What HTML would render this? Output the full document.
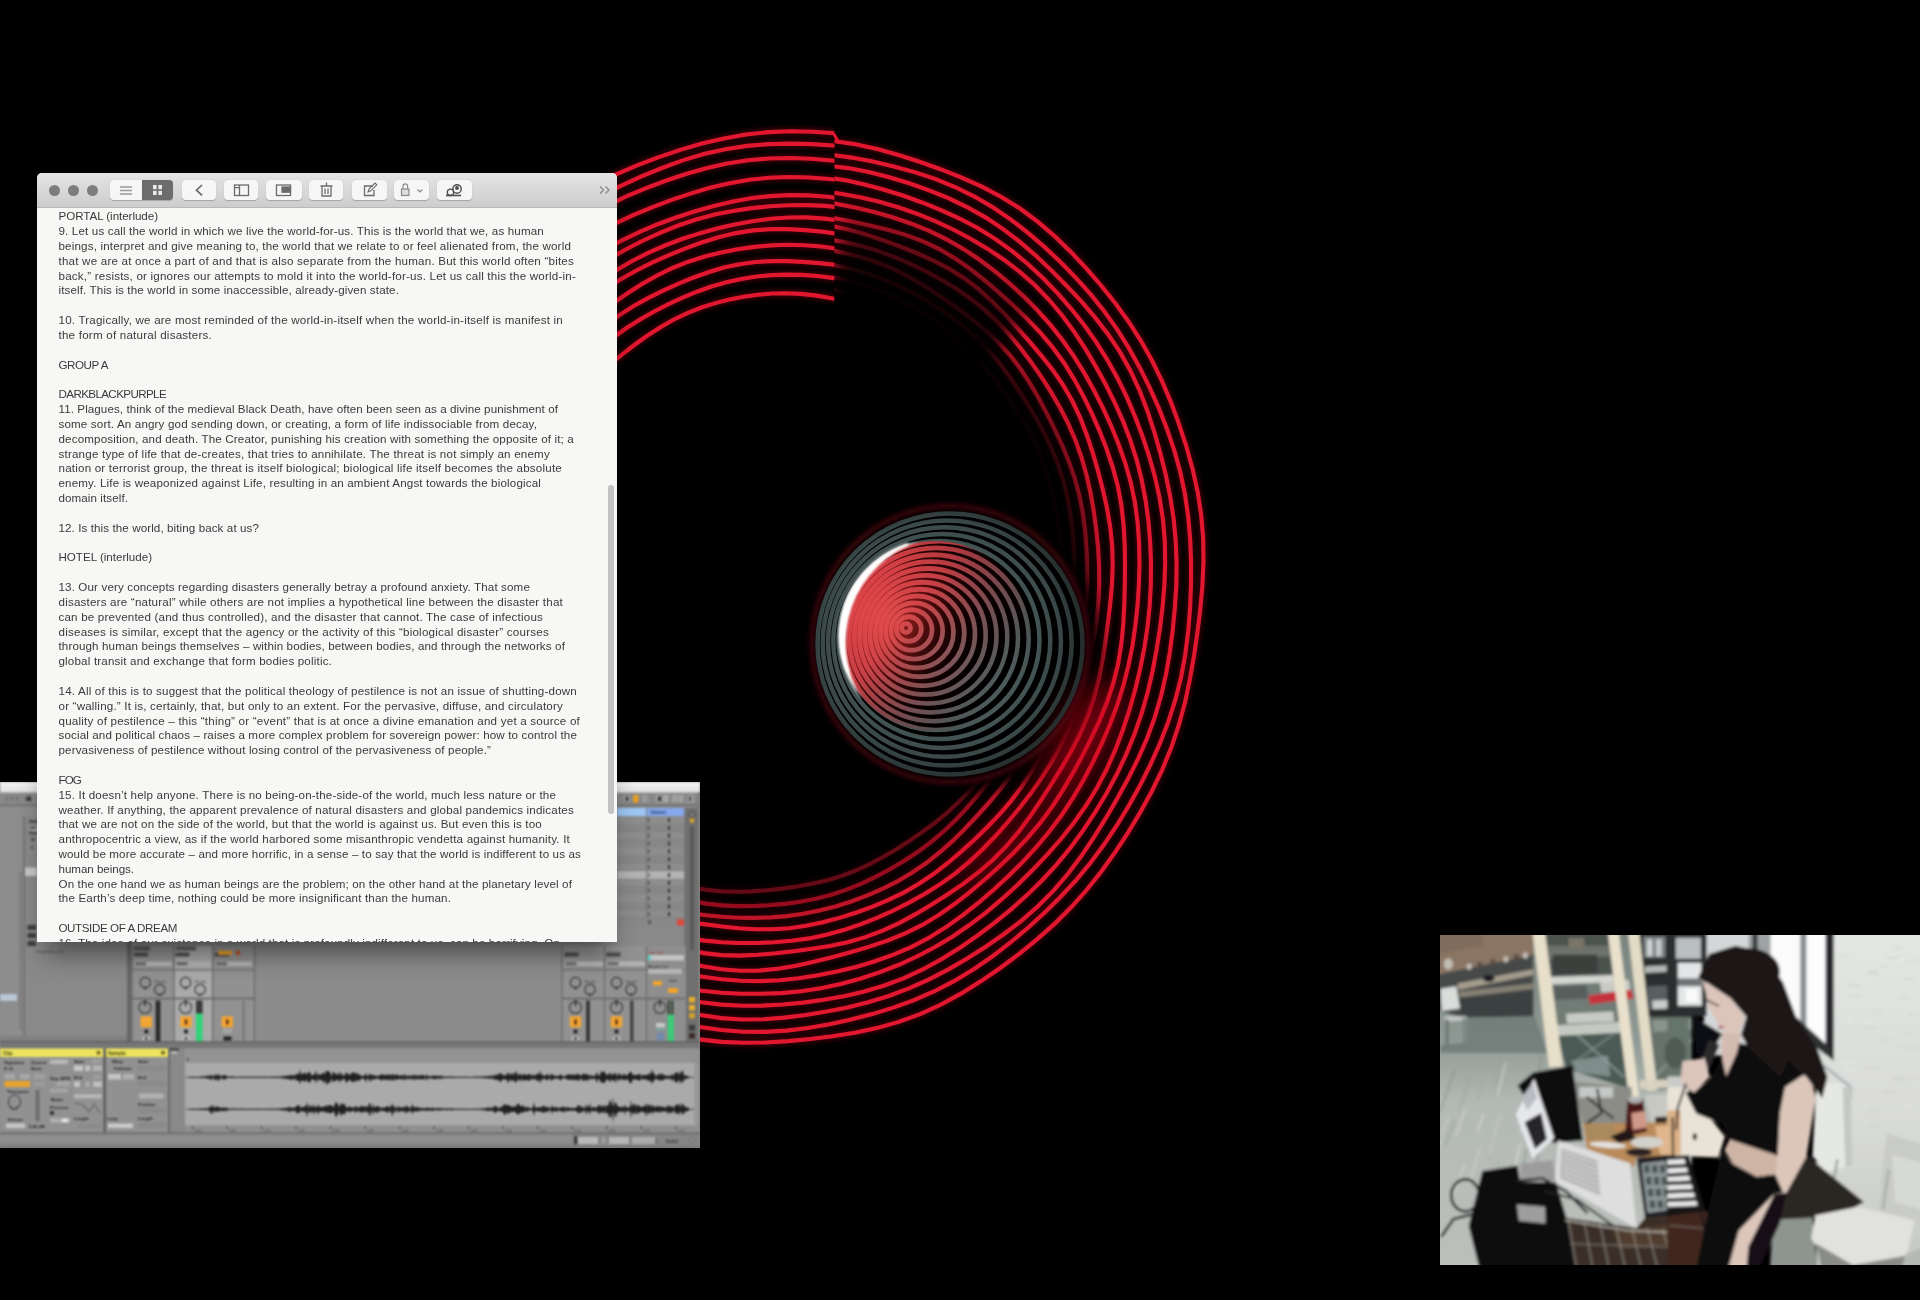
<!DOCTYPE html>
<html lang="en"><head><meta charset="utf-8"><title>stream</title>
<style>
html,body{margin:0;padding:0;background:#000;}
body{width:1920px;height:1300px;position:relative;overflow:hidden;
 font-family:"Liberation Sans",sans-serif;}
.abs{position:absolute;}
svg{display:block;}
#rings{position:absolute;left:0;top:0;}
#ableton{position:absolute;left:0;top:782px;width:700px;height:366px;overflow:hidden;background:#8b8b8b;}
#notes{position:absolute;left:37px;top:173px;width:580px;height:769px;background:#f7f7f6;
 border-radius:5px 5px 0 0;overflow:hidden;}
#nshadow{position:absolute;left:37px;top:173px;width:580px;height:769px;border-radius:5px;
 box-shadow:0 20px 24px -8px rgba(0,0,0,0.45);}
#tb{position:absolute;left:0;top:0;width:580px;height:35px;
 background:linear-gradient(#e4e4e4,#cdcdcd);border-bottom:1px solid #b9b9b9;box-sizing:border-box;}
.dot{position:absolute;top:12px;width:11px;height:11px;border-radius:50%;background:#7d7d7d;filter:blur(0.6px);}
.btn{position:absolute;top:7px;height:20px;border-radius:4px;background:#f6f6f6;
 box-shadow:0 0.5px 1px rgba(0,0,0,.22);filter:blur(0.75px);}
.btn svg{position:absolute;left:0;top:0;}
#txt{position:absolute;left:0;top:35px;width:580px;height:734px;filter:blur(0.72px);color:#3a3a3a;
 font-size:11.6px;line-height:14.83px;white-space:nowrap;}
#txt div{position:absolute;left:21.5px;height:14.83px;}
#sb{position:absolute;left:571px;top:312px;width:6px;height:329px;border-radius:3px;background:#c2c2c2;filter:blur(0.5px);}
#photo{position:absolute;left:1440px;top:935px;}
</style></head>
<body>
<svg id="rings" width="1920" height="1300" viewBox="0 0 1920 1300">
<defs>
<filter id="gb" x="-5%" y="-5%" width="110%" height="110%"><feGaussianBlur stdDeviation="2.4"/></filter>
<filter id="sb1" x="-5%" y="-5%" width="110%" height="110%"><feGaussianBlur stdDeviation="0.75"/></filter>
<filter id="mb" x="-20%" y="-20%" width="140%" height="140%"><feGaussianBlur stdDeviation="9"/></filter>
<filter id="hb" x="-60%" y="-60%" width="220%" height="220%"><feGaussianBlur stdDeviation="15"/></filter>
<filter id="gb2" x="-20%" y="-20%" width="140%" height="140%"><feGaussianBlur stdDeviation="7"/></filter>
<filter id="cb" x="-20%" y="-20%" width="140%" height="140%"><feGaussianBlur stdDeviation="1.1"/></filter>
<radialGradient id="fadeN" gradientUnits="userSpaceOnUse" cx="0" cy="0" r="460" gradientTransform="translate(777.22 592.51) rotate(-71.71) scale(1.0352 0.9642)"><stop offset="0" stop-color="#000" stop-opacity="1"/><stop offset="0.652" stop-color="#000" stop-opacity="1"/><stop offset="0.704" stop-color="#000" stop-opacity="0.86"/><stop offset="0.754" stop-color="#000" stop-opacity="0.7"/><stop offset="0.780" stop-color="#000" stop-opacity="0.5"/><stop offset="0.804" stop-color="#000" stop-opacity="0.28"/><stop offset="0.839" stop-color="#000" stop-opacity="0"/><stop offset="1" stop-color="#000" stop-opacity="0"/></radialGradient>
<radialGradient id="fadeE" gradientUnits="userSpaceOnUse" cx="0" cy="0" r="460" gradientTransform="translate(777.22 592.51) rotate(-71.71) scale(1.0352 0.9642)"><stop offset="0" stop-color="#000" stop-opacity="1"/><stop offset="0.635" stop-color="#000" stop-opacity="1"/><stop offset="0.665" stop-color="#000" stop-opacity="0.9"/><stop offset="0.693" stop-color="#000" stop-opacity="0.6"/><stop offset="0.711" stop-color="#000" stop-opacity="0.12"/><stop offset="0.730" stop-color="#000" stop-opacity="0"/><stop offset="1" stop-color="#000" stop-opacity="0"/></radialGradient>
<mask id="rm" maskUnits="userSpaceOnUse" x="0" y="0" width="1920" height="1300"><rect width="1920" height="1300" fill="#fff"/><g clip-path="url(#cR)"><g filter="url(#mb)"><path d="M777.2,592.5 1097.4,182.7 1123.5,204.6 1148.1,228.0 1171.2,253.1 1192.5,279.6 1212.1,307.4 1229.8,336.4 1245.6,366.6 1259.4,397.7 1271.1,429.7 1280.7,462.3 1288.1,495.5 1293.3,529.1 1296.4,563.0 1297.2,597.0 1295.8,631.0 1292.2,664.9 1286.3,698.4 1278.3,731.5 1268.1,763.9 1255.9,795.7 1241.6,826.6 1225.3,856.4 1207.0,885.2 1187.0,912.7Z" fill="url(#fadeE)"/><path d="M777.2,592.5 867.5,80.4 879.4,82.6 891.2,85.2 903.0,88.0 914.7,91.0 926.4,94.4 937.9,98.0 949.4,101.8 960.7,106.0 972.0,110.4 983.2,115.0 994.2,120.0 1005.2,125.1 1016.0,130.6 1026.7,136.2 1037.2,142.2 1047.6,148.3 1057.9,154.8 1068.0,161.4 1078.0,168.3 1087.7,175.4 1097.4,182.7 1106.8,190.3 1116.1,198.1 1125.2,206.1Z" fill="url(#fadeN)"/></g></g><circle cx="955" cy="647" r="146" fill="#000" filter="url(#gb2)"/></mask>
<clipPath id="cL"><rect x="0" y="0" width="834.5" height="600"/></clipPath>
<clipPath id="cR"><path d="M834.5 0H1920V1300H0V600H834.5Z"/></clipPath>
<radialGradient id="tg" gradientUnits="userSpaceOnUse" cx="940" cy="640" r="140"><stop offset="0" stop-color="#5c6a6a"/><stop offset="0.6" stop-color="#4a5a5a"/><stop offset="0.85" stop-color="#3a4848"/><stop offset="1" stop-color="#262f2f"/></radialGradient>
<radialGradient id="rg" gradientUnits="userSpaceOnUse" cx="885" cy="620" r="120"><stop offset="0" stop-color="#e84a4a"/><stop offset="0.5" stop-color="#d23e44"/><stop offset="1" stop-color="#a8343c"/></radialGradient>
<radialGradient id="sglow" gradientUnits="userSpaceOnUse" cx="872" cy="622" r="105"><stop offset="0" stop-color="#d83232" stop-opacity=".95"/><stop offset="0.4" stop-color="#b42424" stop-opacity=".7"/><stop offset="0.8" stop-color="#801010" stop-opacity=".25"/><stop offset="1" stop-color="#700808" stop-opacity="0"/></radialGradient>
<linearGradient id="rmaskg" gradientUnits="userSpaceOnUse" x1="860" y1="590" x2="1000" y2="700"><stop offset="0" stop-color="#fff"/><stop offset="0.3" stop-color="#eee"/><stop offset="0.62" stop-color="#666"/><stop offset="0.85" stop-color="#151515"/><stop offset="1" stop-color="#000"/></linearGradient>
<mask id="redm" maskUnits="userSpaceOnUse" x="800" y="500" width="300" height="300"><circle cx="935" cy="636" r="95" fill="url(#rmaskg)"/></mask>
</defs>
<g mask="url(#rm)">
<g clip-path="url(#cL)">
<g fill="none" stroke="#b0001a" stroke-width="7" opacity="0.38" filter="url(#gb)"><path d="M922.1,150.3 943.0,157.6 963.5,166.4 983.3,176.4 1002.6,187.6 1021.3,199.7 1039.4,212.7 1056.9,226.6 1073.7,241.5 1089.6,257.5 1104.4,274.6 1118.1,292.7 1130.8,311.5 1142.6,331.1 1153.6,351.1 1163.8,371.6 1173.2,392.6 1181.5,414.1 1188.6,436.2 1194.4,458.8 1198.8,481.8 1201.9,505.0 1204.0,528.4 1205.1,551.9 1205.2,575.5 1204.2,599.1 1201.9,622.7 1198.4,646.2 1193.4,669.4 1187.3,692.4 1180.2,715.0 1172.1,737.4 1163.3,759.4 1153.4,781.0 1142.6,802.1 1130.5,822.5 1117.3,842.1 1103.0,860.9 1087.9,878.9 1072.0,896.1 1055.5,912.7 1038.4,928.7 1020.7,943.8 1002.2,958.0 983.0,971.0 963.1,982.7 942.6,993.1 921.6,1002.3 900.3,1010.5 878.7,1017.6 856.8,1023.7 834.8,1028.5 812.5,1032.0 790.1,1033.9 767.8,1034.4 745.5,1033.7 723.3,1031.8 701.3,1028.9 679.5,1025.1 657.9,1020.2 636.6,1014.1 615.7,1006.5 595.5,997.5 575.8,987.3 556.8,975.9 538.2,963.7 520.2,950.7 502.7,936.9 485.9,922.2 469.9,906.5 454.8,889.8 440.8,872.0 427.8,853.4 415.7,834.1 404.6,814.1 394.3,793.7 384.9,772.6 376.7,751.0 369.8,728.8 364.2,706.2 359.9,683.2 356.7,660.0 354.6,636.6 353.3,613.1 352.9,589.5 353.6,565.9 355.5,542.2 358.9,518.7 363.7,495.3 369.8,472.3 377.1,449.6 385.2,427.2 394.3,405.2 404.2,383.6 415.1,362.5 427.2,342.0 440.4,322.3 454.7,303.5 469.9,285.5 485.9,268.3 502.6,251.8 519.9,236.2 537.9,221.4 556.6,207.7 576.1,195.2 596.1,184.0 616.7,174.1 637.7,165.1 658.9,157.1 680.3,149.9 702.0,143.6 723.9,138.4 746.1,134.5 768.3,132.1 790.7,131.2 812.9,131.7 835.1,133.3 857.1,135.9 879.0,139.6 900.7,144.3Z"/><path d="M918.5,161.0 938.9,168.4 958.7,177.2 977.9,187.2 996.6,198.1 1014.8,209.9 1032.4,222.6 1049.4,236.3 1065.5,251.0 1080.7,266.8 1094.8,283.6 1108.2,301.2 1120.7,319.3 1132.7,337.9 1144.0,357.0 1154.5,376.7 1163.9,397.1 1171.9,418.2 1178.3,439.9 1183.4,462.1 1187.3,484.5 1190.2,507.1 1192.4,529.9 1193.7,552.7 1194.1,575.7 1193.2,598.7 1190.9,621.7 1187.3,644.5 1182.3,667.1 1176.4,689.4 1169.5,711.5 1161.8,733.3 1153.2,754.8 1143.5,775.7 1132.7,796.1 1120.6,815.7 1107.6,834.7 1093.7,852.9 1079.2,870.6 1064.3,887.9 1048.7,904.6 1032.3,920.5 1015.1,935.5 997.0,949.1 978.0,961.4 958.3,972.3 938.2,982.0 917.7,990.8 897.0,998.8 876.0,1005.9 854.8,1011.8 833.3,1016.5 811.6,1019.6 789.8,1021.4 768.1,1021.8 746.4,1021.3 724.8,1019.7 703.4,1017.3 682.1,1013.7 661.0,1008.8 640.4,1002.4 620.3,994.6 600.8,985.6 581.7,975.6 563.0,964.9 544.6,953.6 526.6,941.6 509.2,928.5 492.7,914.3 477.2,898.8 462.8,882.1 449.5,864.5 437.1,846.2 425.5,827.3 414.7,807.9 404.6,788.0 395.6,767.5 387.8,746.4 381.2,724.7 375.9,702.7 371.6,680.4 368.2,657.9 365.6,635.2 364.0,612.3 363.4,589.3 364.3,566.3 366.6,543.3 370.4,520.4 375.5,497.8 381.5,475.4 388.2,453.3 395.6,431.3 403.9,409.7 413.3,388.4 423.9,367.8 435.9,347.9 449.1,329.0 463.3,310.9 478.3,293.5 493.9,276.8 510.1,260.8 527.0,245.6 544.6,231.4 562.9,218.3 581.9,206.4 601.4,195.6 621.3,185.6 641.5,176.4 661.9,168.0 682.7,160.4 703.8,154.1 725.3,149.2 746.9,145.9 768.6,144.1 790.3,143.6 812.0,144.1 833.6,145.5 855.1,147.6 876.5,150.7 897.7,155.1Z"/><path d="M913.2,177.0 932.7,184.4 951.6,193.2 969.9,203.0 987.8,213.6 1005.4,224.8 1022.6,236.6 1039.4,249.0 1055.7,262.4 1071.0,276.9 1085.3,292.7 1098.4,309.5 1110.6,327.1 1121.8,345.4 1132.3,364.2 1142.1,383.5 1150.9,403.3 1158.6,423.7 1165.0,444.6 1170.0,466.0 1173.9,487.7 1176.7,509.6 1178.8,531.6 1180.0,553.7 1180.4,575.9 1179.6,598.2 1177.4,620.4 1173.7,642.4 1168.7,664.2 1162.6,685.7 1155.7,706.9 1148.2,727.9 1140.1,748.7 1131.2,769.2 1121.3,789.2 1110.2,808.6 1097.8,827.2 1084.4,844.9 1070.0,861.7 1055.0,877.9 1039.4,893.4 1023.1,908.3 1006.2,922.2 988.6,935.0 970.2,946.7 951.3,957.1 932.0,966.4 912.3,975.0 892.5,982.8 872.4,990.0 852.0,996.2 831.4,1001.2 810.5,1004.7 789.5,1006.6 768.5,1007.1 747.5,1006.4 726.7,1004.8 705.9,1002.5 685.3,999.4 664.8,995.3 644.6,989.9 624.8,983.0 605.6,974.7 587.0,965.1 568.9,954.4 551.4,942.8 534.4,930.4 518.1,917.2 502.5,903.0 487.8,887.6 474.3,871.3 461.7,854.1 450.0,836.3 438.9,818.0 428.3,799.4 418.4,780.4 409.2,760.9 401.2,740.7 394.6,720.0 389.4,698.7 385.4,677.1 382.6,655.2 380.5,633.3 379.2,611.2 378.7,589.1 379.1,566.9 380.9,544.6 384.1,522.5 388.6,500.5 394.4,478.9 401.1,457.5 408.6,436.4 416.9,415.7 426.3,395.3 436.7,375.5 448.4,356.5 461.2,338.3 474.9,320.9 489.3,304.2 504.2,287.9 519.6,272.1 535.4,256.9 551.9,242.4 569.3,229.0 587.4,216.9 606.3,206.2 625.7,196.7 645.5,188.3 665.6,180.8 685.8,174.0 706.3,168.2 727.0,163.5 748.0,160.3 769.0,158.5 790.0,158.0 810.9,158.8 831.7,160.5 852.4,163.0 873.0,166.5 893.3,171.1Z"/><path d="M907.4,194.8 926.0,201.7 944.3,209.7 962.1,218.7 979.5,228.4 996.5,238.8 1013.2,250.0 1029.3,262.0 1044.7,275.1 1059.0,289.5 1072.3,305.0 1084.4,321.5 1095.5,338.7 1105.9,356.5 1115.6,374.6 1124.6,393.1 1132.9,412.0 1140.3,431.4 1146.5,451.3 1151.5,471.6 1155.4,492.2 1158.2,513.0 1160.2,534.0 1161.4,555.1 1161.6,576.2 1160.6,597.4 1158.5,618.6 1155.1,639.6 1150.5,660.4 1145.1,681.0 1139.0,701.4 1132.3,721.7 1124.8,741.7 1116.4,761.4 1106.9,780.5 1096.1,799.0 1084.1,816.6 1071.0,833.4 1057.1,849.3 1042.6,864.6 1027.5,879.3 1012.0,893.4 995.9,906.8 979.2,919.3 961.9,930.7 944.0,941.1 925.6,950.5 906.9,958.9 887.9,966.6 868.6,973.3 849.0,978.9 829.1,983.3 809.1,986.2 789.0,987.7 768.9,988.0 749.0,987.3 729.1,985.8 709.2,983.6 689.5,980.6 670.0,976.6 650.7,971.2 632.0,964.4 613.8,956.2 596.2,946.7 579.2,936.2 562.7,924.9 546.7,913.0 531.2,900.4 516.2,887.0 502.1,872.8 488.7,857.6 476.2,841.7 464.4,825.2 453.2,808.1 442.8,790.5 433.1,772.4 424.3,753.6 416.8,734.2 410.7,714.2 405.8,693.8 402.2,673.0 399.5,652.1 397.4,631.1 396.1,610.0 395.5,588.8 396.0,567.5 397.7,546.2 400.9,525.0 405.5,504.1 411.2,483.4 417.9,463.1 425.5,443.1 433.8,423.4 442.9,404.1 453.0,385.4 464.1,367.2 476.0,349.7 488.8,332.8 502.3,316.6 516.3,300.8 530.8,285.6 546.0,271.0 562.0,257.4 578.7,244.9 596.3,233.8 614.5,223.9 633.1,215.1 652.0,207.3 671.0,200.1 690.3,193.6 709.8,187.8 729.5,183.2 749.4,179.7 769.4,177.7 789.5,177.0 809.5,177.5 829.4,179.0 849.2,181.4 868.8,184.8 888.3,189.2Z"/><path d="M901.5,212.5 919.3,219.1 936.7,226.7 953.7,235.4 970.2,244.9 986.2,255.1 1001.8,266.2 1016.8,278.0 1031.2,290.7 1044.8,304.4 1057.4,319.1 1069.1,334.6 1079.8,350.9 1089.7,367.7 1098.9,384.9 1107.4,402.5 1115.3,420.5 1122.5,438.8 1128.8,457.6 1134.1,476.8 1138.2,496.3 1141.4,516.1 1143.5,536.1 1144.6,556.3 1144.8,576.5 1143.9,596.8 1141.9,617.0 1138.8,637.1 1134.6,657.1 1129.4,676.8 1123.4,696.3 1116.6,715.5 1109.1,734.4 1100.7,753.0 1091.5,771.2 1081.1,788.8 1069.7,805.6 1057.3,821.6 1044.1,836.9 1030.2,851.4 1015.8,865.2 1000.8,878.5 985.5,891.1 969.6,903.0 953.1,914.1 936.2,924.1 918.8,933.2 900.9,941.3 882.8,948.5 864.3,954.7 845.6,959.9 826.7,963.9 807.7,966.7 788.5,968.2 769.4,968.6 750.4,967.9 731.5,966.4 712.6,964.1 693.9,961.0 675.4,957.1 657.1,952.1 639.1,945.9 621.6,938.4 604.7,929.8 588.3,920.1 572.4,909.6 557.1,898.3 542.2,886.3 527.9,873.5 514.2,860.1 501.2,845.8 489.0,830.7 477.6,814.9 467.1,798.5 457.3,781.5 448.3,764.0 440.3,745.9 433.4,727.3 427.7,708.1 423.2,688.6 419.8,668.8 417.4,648.8 415.9,628.8 415.0,608.7 414.9,588.5 415.6,568.3 417.3,548.1 420.1,527.9 424.1,508.0 429.3,488.3 435.5,468.9 442.6,449.8 450.5,431.1 459.1,412.7 468.6,394.8 478.9,377.4 490.1,360.5 502.1,344.2 514.8,328.6 528.1,313.5 542.1,299.1 556.8,285.4 572.1,272.5 588.1,260.6 604.7,249.9 622.0,240.3 639.7,231.8 657.7,224.2 676.0,217.5 694.4,211.5 713.0,206.2 731.8,201.8 750.8,198.3 769.9,196.1 789.0,195.1 808.2,195.4 827.2,196.8 846.1,199.2 864.8,202.6 883.3,207.1Z"/><path d="M898.1,222.8 915.2,229.8 932.0,237.5 948.5,245.7 964.7,254.5 980.6,264.0 996.0,274.4 1010.7,285.8 1024.6,298.4 1037.6,311.9 1049.9,326.2 1061.4,341.1 1072.3,356.6 1082.4,372.7 1091.7,389.3 1100.0,406.6 1107.3,424.3 1113.7,442.5 1119.3,461.0 1124.2,479.7 1128.4,498.7 1131.9,517.8 1134.5,537.3 1135.8,556.9 1135.8,576.7 1134.5,596.4 1131.9,616.1 1128.5,635.6 1124.3,654.9 1119.7,674.2 1114.3,693.3 1108.2,712.2 1101.2,730.8 1093.0,748.9 1083.7,766.5 1073.4,783.5 1062.3,799.9 1050.5,815.7 1037.9,830.9 1024.6,845.4 1010.6,859.1 995.8,871.8 980.4,883.5 964.5,894.4 948.2,904.6 931.6,914.1 914.7,923.2 897.6,931.5 880.0,938.9 862.1,945.1 843.9,949.9 825.4,953.4 806.8,955.6 788.3,956.9 769.7,957.4 751.2,957.3 732.7,956.5 714.3,954.8 696.0,951.9 677.9,947.9 660.1,942.8 642.7,936.5 625.6,929.4 608.9,921.4 592.6,912.4 576.9,902.5 561.9,891.5 547.6,879.4 534.1,866.3 521.4,852.6 509.2,838.3 497.4,823.6 486.1,808.4 475.4,792.8 465.5,776.5 456.6,759.4 449.0,741.7 442.7,723.4 437.4,704.7 433.1,685.7 429.6,666.5 426.7,647.1 424.7,627.7 423.6,608.1 423.5,588.4 424.6,568.6 426.7,549.0 429.7,529.4 433.5,510.0 438.2,490.7 443.8,471.6 450.4,452.9 458.2,434.7 467.1,417.0 477.0,399.9 487.7,383.3 498.8,367.2 510.4,351.4 522.4,335.9 535.0,320.8 548.3,306.4 562.4,292.9 577.4,280.5 593.1,269.1 609.4,258.8 626.1,249.3 643.2,240.5 660.5,232.6 678.2,225.5 696.2,219.5 714.5,214.6 732.9,210.9 751.5,208.1 770.1,206.3 788.8,205.2 807.4,205.1 826.1,205.9 844.6,208.1 862.8,211.7 880.7,216.6Z"/><path d="M894.5,233.8 911.4,239.7 928.0,246.4 944.2,254.1 959.9,262.9 975.0,272.8 989.4,283.7 1003.3,295.4 1016.5,307.7 1029.2,320.7 1041.3,334.3 1052.7,348.6 1063.3,363.5 1073.0,379.2 1081.9,395.4 1090.0,412.1 1097.3,429.1 1104.1,446.5 1110.0,464.3 1115.1,482.4 1119.2,500.9 1122.0,519.7 1123.6,538.7 1124.0,557.7 1123.5,576.9 1122.1,595.9 1120.0,614.9 1117.2,633.9 1113.5,652.7 1108.9,671.3 1103.2,689.6 1096.5,707.6 1089.0,725.2 1080.7,742.4 1071.7,759.3 1062.0,775.7 1051.7,791.7 1040.5,807.2 1028.6,822.0 1015.9,836.0 1002.5,849.4 988.5,862.0 974.1,874.1 959.2,885.6 943.9,896.4 928.0,906.4 911.6,915.3 894.7,923.0 877.4,929.4 859.7,934.7 841.9,939.0 824.0,942.4 806.0,944.9 788.0,946.7 770.0,947.4 752.0,947.1 734.0,945.7 716.3,943.2 698.7,939.7 681.4,935.4 664.3,930.3 647.4,924.4 630.9,917.6 614.8,909.7 599.2,900.8 584.2,891.0 569.8,880.2 555.9,868.7 542.5,856.7 529.5,844.0 517.1,830.7 505.4,816.7 494.6,801.8 484.9,786.2 476.1,769.9 468.3,753.0 461.3,735.8 455.1,718.2 449.6,700.3 444.8,682.2 441.0,663.7 438.1,645.1 436.3,626.2 435.4,607.2 435.3,588.2 436.1,569.1 437.6,550.0 439.9,531.0 443.3,512.0 447.7,493.3 453.3,474.8 460.0,456.7 467.6,439.0 476.0,421.7 485.1,404.8 494.8,388.2 505.2,372.1 516.5,356.6 528.6,341.9 541.6,328.0 555.4,315.0 569.8,302.8 584.7,291.4 599.9,280.7 615.6,270.6 631.7,261.3 648.1,252.9 664.9,245.5 682.0,239.0 699.4,233.4 717.0,228.6 734.6,224.6 752.5,221.2 770.4,218.8 788.5,217.5 806.5,217.4 824.5,218.6 842.3,221.0 859.9,224.5 877.3,228.8Z"/><path d="M890.6,245.7 906.8,251.6 922.6,258.6 938.0,266.5 953.0,275.2 967.7,284.5 981.9,294.4 995.8,305.0 1008.9,316.5 1021.3,329.0 1032.8,342.4 1043.5,356.5 1053.4,371.2 1062.8,386.2 1071.8,401.6 1080.2,417.4 1087.9,433.7 1094.5,450.5 1099.8,467.9 1104.0,485.7 1107.0,503.8 1109.1,522.0 1110.6,540.3 1111.5,558.6 1111.7,577.0 1111.1,595.5 1109.4,613.9 1106.6,632.3 1102.9,650.4 1098.2,668.4 1092.9,686.2 1087.0,703.8 1080.3,721.2 1072.9,738.3 1064.3,754.8 1054.7,770.7 1044.1,785.9 1032.6,800.4 1020.6,814.3 1008.1,827.7 995.3,840.8 982.0,853.3 968.1,865.1 953.5,876.0 938.3,885.8 922.5,894.4 906.3,902.0 889.9,908.8 873.3,915.0 856.5,920.5 839.5,925.3 822.4,929.2 805.1,932.0 787.7,933.7 770.3,934.3 752.9,934.1 735.6,933.2 718.3,931.6 701.1,929.2 684.0,925.8 667.3,921.1 651.0,915.1 635.2,907.8 619.9,899.5 605.1,890.5 590.5,881.0 576.3,870.9 562.5,860.3 549.2,848.8 536.8,836.4 525.2,823.0 514.6,808.9 504.7,794.1 495.5,778.9 486.8,763.3 478.8,747.3 471.5,730.9 465.1,714.0 459.8,696.7 455.5,679.0 452.1,661.1 449.5,643.0 447.4,624.8 446.0,606.4 445.4,588.0 445.9,569.5 447.6,551.0 450.7,532.6 454.9,514.5 460.2,496.6 466.1,479.0 472.5,461.6 479.4,444.4 487.0,427.5 495.5,411.0 504.9,395.1 515.2,379.8 526.4,365.2 538.3,351.1 550.6,337.6 563.4,324.5 576.7,312.0 590.6,300.2 605.1,289.3 620.3,279.5 635.9,270.7 652.0,262.7 668.3,255.4 684.8,248.6 701.5,242.5 718.5,237.2 735.7,233.1 753.2,230.4 770.7,229.1 788.2,229.1 805.6,230.1 822.9,231.8 840.0,234.1 857.1,237.1 873.9,240.9Z"/><path d="M885.8,260.0 901.6,265.2 917.0,271.2 932.1,278.3 946.6,286.5 960.5,295.8 973.8,306.0 986.4,317.0 998.6,328.5 1010.4,340.4 1021.7,352.8 1032.6,365.8 1042.7,379.4 1052.0,393.7 1060.3,408.7 1067.7,424.3 1074.2,440.3 1079.9,456.6 1084.9,473.3 1089.0,490.2 1092.3,507.3 1094.6,524.7 1096.1,542.2 1096.7,559.7 1096.6,577.3 1095.9,594.9 1094.6,612.5 1092.7,630.1 1089.9,647.7 1086.0,665.1 1081.0,682.3 1074.8,699.0 1067.7,715.4 1059.7,731.3 1051.1,746.8 1042.0,762.0 1032.3,776.9 1022.1,791.3 1011.1,805.1 999.3,818.3 986.8,830.6 973.7,842.2 960.1,853.1 945.9,863.2 931.4,872.6 916.4,881.2 901.1,888.8 885.4,895.5 869.4,901.3 853.2,906.1 836.9,910.3 820.5,913.9 804.0,917.0 787.4,919.3 770.6,920.7 753.9,921.0 737.2,920.0 720.7,917.7 704.4,914.3 688.4,910.0 672.7,904.9 657.1,899.1 641.9,892.7 627.0,885.5 612.5,877.4 598.5,868.4 585.0,858.6 572.0,848.1 559.6,836.8 547.7,825.0 536.4,812.5 525.8,799.3 516.0,785.4 507.1,770.8 499.1,755.7 491.8,740.1 485.2,724.3 479.0,708.2 473.4,691.8 468.4,675.1 464.3,658.1 461.2,640.8 459.4,623.2 458.7,605.5 459.2,587.8 460.6,570.0 462.7,552.4 465.6,534.9 469.2,517.5 473.7,500.2 479.0,483.3 485.1,466.6 492.1,450.3 499.7,434.2 507.9,418.6 516.8,403.2 526.4,388.4 536.8,374.0 548.0,360.4 560.0,347.6 572.6,335.6 585.8,324.2 599.4,313.4 613.3,303.1 627.5,293.2 642.0,283.9 657.1,275.5 672.5,268.0 688.4,261.7 704.7,256.5 721.1,252.4 737.7,249.2 754.4,246.9 771.1,245.4 787.8,244.8 804.4,245.2 821.0,246.5 837.5,248.7 853.7,251.8 869.9,255.5Z"/><path d="M881.0,274.6 895.8,280.0 910.3,286.5 924.3,293.8 938.0,301.7 951.4,310.2 964.4,319.3 976.9,329.2 988.7,340.0 999.7,351.6 1010.0,364.0 1019.6,376.9 1028.7,390.2 1037.4,403.8 1045.7,417.7 1053.5,432.1 1060.5,446.9 1066.4,462.3 1071.2,478.2 1074.9,494.4 1077.8,510.8 1080.0,527.4 1081.7,544.0 1083.0,560.7 1083.5,577.5 1083.1,594.4 1081.7,611.3 1079.1,628.1 1075.6,644.7 1071.3,661.1 1066.3,677.4 1060.8,693.5 1054.5,709.3 1047.3,724.7 1039.2,739.6 1030.0,753.9 1020.1,767.5 1009.6,780.6 998.7,793.2 987.5,805.6 976.0,817.7 964.0,829.2 951.3,840.0 938.0,849.9 924.1,858.7 909.7,866.5 895.0,873.5 880.1,879.9 865.0,885.9 849.8,891.2 834.4,895.9 818.7,899.5 802.9,902.0 787.0,903.5 771.1,904.0 755.2,903.8 739.4,902.9 723.6,901.4 707.9,899.1 692.4,895.6 677.3,890.9 662.6,885.1 648.3,878.3 634.3,870.8 620.7,862.8 607.2,854.5 594.0,845.7 581.3,836.2 569.1,825.8 557.7,814.5 547.2,802.3 537.5,789.3 528.4,775.8 519.9,762.0 511.8,747.8 504.4,733.2 497.8,718.2 492.1,702.7 487.4,686.8 483.7,670.6 480.8,654.2 478.4,637.7 476.6,621.0 475.5,604.3 475.2,587.5 475.9,570.6 477.9,553.8 480.9,537.2 484.9,520.8 489.5,504.5 494.6,488.4 499.9,472.4 505.8,456.6 512.4,441.0 520.0,425.8 528.5,411.2 537.9,397.2 548.1,383.8 558.9,370.9 570.0,358.4 581.7,346.4 593.9,335.0 606.7,324.3 620.1,314.6 634.1,305.8 648.4,297.9 663.1,290.6 678.0,283.9 693.0,277.7 708.3,272.2 723.8,267.6 739.6,264.2 755.5,262.0 771.5,261.1 787.4,261.1 803.2,261.9 819.0,263.1 834.7,264.8 850.3,267.1 865.8,270.3Z"/><path d="M876.2,289.0 890.3,294.4 904.1,300.4 917.7,307.0 930.9,314.3 943.8,322.2 956.3,330.8 968.2,340.3 979.5,350.6 990.1,361.7 1000.0,373.5 1009.3,385.7 1018.1,398.4 1026.4,411.5 1034.1,425.0 1041.1,438.9 1047.5,453.2 1053.0,467.9 1057.6,483.0 1061.5,498.4 1064.6,514.0 1067.0,529.7 1068.6,545.7 1069.4,561.7 1069.3,577.7 1068.4,593.8 1066.6,609.9 1064.0,625.8 1060.9,641.6 1057.1,657.3 1052.7,672.9 1047.7,688.3 1041.9,703.5 1035.1,718.3 1027.5,732.6 1019.0,746.4 1009.9,759.6 1000.1,772.4 989.8,784.7 979.0,796.5 967.7,807.8 955.9,818.5 943.6,828.5 930.8,837.7 917.6,846.3 904.0,854.1 890.1,861.2 875.9,867.6 861.5,873.3 846.8,878.1 831.9,881.9 816.9,884.8 801.7,886.9 786.6,888.1 771.5,888.7 756.3,888.7 741.2,888.0 726.2,886.6 711.2,884.4 696.4,881.1 682.0,876.8 667.8,871.5 654.0,865.4 640.5,858.5 627.4,850.9 614.7,842.8 602.4,833.9 590.5,824.3 579.2,814.1 568.5,803.1 558.4,791.6 548.8,779.6 539.8,767.1 531.3,754.1 523.5,740.6 516.6,726.6 510.4,712.1 505.2,697.2 500.8,682.0 497.2,666.6 494.1,651.0 491.7,635.2 489.8,619.4 488.7,603.4 488.5,587.3 489.1,571.2 490.8,555.1 493.4,539.1 496.8,523.3 501.0,507.6 505.8,492.2 511.4,477.0 517.6,462.0 524.6,447.5 532.4,433.3 540.7,419.6 549.7,406.3 559.2,393.3 569.2,380.8 579.7,368.8 590.8,357.3 602.5,346.5 614.8,336.5 627.6,327.3 640.9,318.9 654.6,311.2 668.5,304.1 682.6,297.6 696.9,291.7 711.5,286.5 726.4,282.2 741.4,278.9 756.6,276.5 771.8,275.1 787.0,274.6 802.2,274.9 817.4,276.0 832.4,277.9 847.2,280.7 861.9,284.5Z"/><path d="M870.1,307.4 883.6,311.7 896.8,316.8 909.7,322.9 922.0,330.0 933.8,338.0 945.1,346.8 955.9,356.1 966.4,365.8 976.6,375.9 986.4,386.3 995.7,397.3 1004.4,409.0 1012.3,421.2 1019.5,433.9 1026.0,447.2 1031.8,460.7 1037.0,474.6 1041.4,488.8 1045.1,503.3 1047.8,518.0 1049.7,532.9 1050.7,547.9 1051.0,563.0 1050.9,578.0 1050.4,593.1 1049.4,608.2 1047.9,623.3 1045.5,638.4 1042.2,653.3 1037.8,668.0 1032.3,682.3 1026.1,696.2 1019.2,709.8 1011.9,723.1 1004.1,736.1 995.8,748.8 986.9,761.0 977.3,772.7 967.1,783.8 956.3,794.2 945.1,804.1 933.5,813.4 921.6,822.2 909.2,830.3 896.4,837.7 883.3,844.1 869.8,849.6 856.1,854.2 842.3,858.3 828.4,861.9 814.4,865.2 800.4,868.0 786.2,870.3 771.9,871.7 757.6,872.1 743.3,871.3 729.1,869.5 715.2,866.7 701.4,863.2 687.8,859.0 674.4,854.3 661.3,848.8 648.6,842.5 636.2,835.4 624.3,827.5 612.8,819.1 601.7,810.0 591.0,800.5 580.7,790.4 571.0,779.7 561.9,768.4 553.8,756.3 546.4,743.6 539.8,730.5 533.8,717.1 528.3,703.5 523.0,689.8 518.1,675.8 513.9,661.6 510.4,647.1 507.8,632.3 506.3,617.3 505.8,602.1 506.1,587.0 507.1,571.9 508.8,556.8 511.2,541.8 514.3,526.9 518.2,512.2 522.9,497.8 528.3,483.6 534.2,469.7 540.6,455.9 547.4,442.4 554.7,429.1 562.7,416.2 571.5,403.9 581.1,392.3 591.4,381.4 602.3,371.1 613.6,361.4 625.2,352.0 637.0,343.0 649.1,334.4 661.6,326.4 674.5,319.2 687.8,312.8 701.4,307.5 715.3,303.1 729.4,299.5 743.6,296.7 757.9,294.7 772.2,293.5 786.6,293.2 800.8,293.9 814.9,295.4 828.9,297.7 842.8,300.5 856.5,303.7Z"/></g>
<g fill="none" stroke="#e2182e" stroke-width="4.1" filter="url(#sb1)"><path d="M922.1,150.3 943.0,157.6 963.5,166.4 983.3,176.4 1002.6,187.6 1021.3,199.7 1039.4,212.7 1056.9,226.6 1073.7,241.5 1089.6,257.5 1104.4,274.6 1118.1,292.7 1130.8,311.5 1142.6,331.1 1153.6,351.1 1163.8,371.6 1173.2,392.6 1181.5,414.1 1188.6,436.2 1194.4,458.8 1198.8,481.8 1201.9,505.0 1204.0,528.4 1205.1,551.9 1205.2,575.5 1204.2,599.1 1201.9,622.7 1198.4,646.2 1193.4,669.4 1187.3,692.4 1180.2,715.0 1172.1,737.4 1163.3,759.4 1153.4,781.0 1142.6,802.1 1130.5,822.5 1117.3,842.1 1103.0,860.9 1087.9,878.9 1072.0,896.1 1055.5,912.7 1038.4,928.7 1020.7,943.8 1002.2,958.0 983.0,971.0 963.1,982.7 942.6,993.1 921.6,1002.3 900.3,1010.5 878.7,1017.6 856.8,1023.7 834.8,1028.5 812.5,1032.0 790.1,1033.9 767.8,1034.4 745.5,1033.7 723.3,1031.8 701.3,1028.9 679.5,1025.1 657.9,1020.2 636.6,1014.1 615.7,1006.5 595.5,997.5 575.8,987.3 556.8,975.9 538.2,963.7 520.2,950.7 502.7,936.9 485.9,922.2 469.9,906.5 454.8,889.8 440.8,872.0 427.8,853.4 415.7,834.1 404.6,814.1 394.3,793.7 384.9,772.6 376.7,751.0 369.8,728.8 364.2,706.2 359.9,683.2 356.7,660.0 354.6,636.6 353.3,613.1 352.9,589.5 353.6,565.9 355.5,542.2 358.9,518.7 363.7,495.3 369.8,472.3 377.1,449.6 385.2,427.2 394.3,405.2 404.2,383.6 415.1,362.5 427.2,342.0 440.4,322.3 454.7,303.5 469.9,285.5 485.9,268.3 502.6,251.8 519.9,236.2 537.9,221.4 556.6,207.7 576.1,195.2 596.1,184.0 616.7,174.1 637.7,165.1 658.9,157.1 680.3,149.9 702.0,143.6 723.9,138.4 746.1,134.5 768.3,132.1 790.7,131.2 812.9,131.7 835.1,133.3 857.1,135.9 879.0,139.6 900.7,144.3Z"/><path d="M918.5,161.0 938.9,168.4 958.7,177.2 977.9,187.2 996.6,198.1 1014.8,209.9 1032.4,222.6 1049.4,236.3 1065.5,251.0 1080.7,266.8 1094.8,283.6 1108.2,301.2 1120.7,319.3 1132.7,337.9 1144.0,357.0 1154.5,376.7 1163.9,397.1 1171.9,418.2 1178.3,439.9 1183.4,462.1 1187.3,484.5 1190.2,507.1 1192.4,529.9 1193.7,552.7 1194.1,575.7 1193.2,598.7 1190.9,621.7 1187.3,644.5 1182.3,667.1 1176.4,689.4 1169.5,711.5 1161.8,733.3 1153.2,754.8 1143.5,775.7 1132.7,796.1 1120.6,815.7 1107.6,834.7 1093.7,852.9 1079.2,870.6 1064.3,887.9 1048.7,904.6 1032.3,920.5 1015.1,935.5 997.0,949.1 978.0,961.4 958.3,972.3 938.2,982.0 917.7,990.8 897.0,998.8 876.0,1005.9 854.8,1011.8 833.3,1016.5 811.6,1019.6 789.8,1021.4 768.1,1021.8 746.4,1021.3 724.8,1019.7 703.4,1017.3 682.1,1013.7 661.0,1008.8 640.4,1002.4 620.3,994.6 600.8,985.6 581.7,975.6 563.0,964.9 544.6,953.6 526.6,941.6 509.2,928.5 492.7,914.3 477.2,898.8 462.8,882.1 449.5,864.5 437.1,846.2 425.5,827.3 414.7,807.9 404.6,788.0 395.6,767.5 387.8,746.4 381.2,724.7 375.9,702.7 371.6,680.4 368.2,657.9 365.6,635.2 364.0,612.3 363.4,589.3 364.3,566.3 366.6,543.3 370.4,520.4 375.5,497.8 381.5,475.4 388.2,453.3 395.6,431.3 403.9,409.7 413.3,388.4 423.9,367.8 435.9,347.9 449.1,329.0 463.3,310.9 478.3,293.5 493.9,276.8 510.1,260.8 527.0,245.6 544.6,231.4 562.9,218.3 581.9,206.4 601.4,195.6 621.3,185.6 641.5,176.4 661.9,168.0 682.7,160.4 703.8,154.1 725.3,149.2 746.9,145.9 768.6,144.1 790.3,143.6 812.0,144.1 833.6,145.5 855.1,147.6 876.5,150.7 897.7,155.1Z"/><path d="M913.2,177.0 932.7,184.4 951.6,193.2 969.9,203.0 987.8,213.6 1005.4,224.8 1022.6,236.6 1039.4,249.0 1055.7,262.4 1071.0,276.9 1085.3,292.7 1098.4,309.5 1110.6,327.1 1121.8,345.4 1132.3,364.2 1142.1,383.5 1150.9,403.3 1158.6,423.7 1165.0,444.6 1170.0,466.0 1173.9,487.7 1176.7,509.6 1178.8,531.6 1180.0,553.7 1180.4,575.9 1179.6,598.2 1177.4,620.4 1173.7,642.4 1168.7,664.2 1162.6,685.7 1155.7,706.9 1148.2,727.9 1140.1,748.7 1131.2,769.2 1121.3,789.2 1110.2,808.6 1097.8,827.2 1084.4,844.9 1070.0,861.7 1055.0,877.9 1039.4,893.4 1023.1,908.3 1006.2,922.2 988.6,935.0 970.2,946.7 951.3,957.1 932.0,966.4 912.3,975.0 892.5,982.8 872.4,990.0 852.0,996.2 831.4,1001.2 810.5,1004.7 789.5,1006.6 768.5,1007.1 747.5,1006.4 726.7,1004.8 705.9,1002.5 685.3,999.4 664.8,995.3 644.6,989.9 624.8,983.0 605.6,974.7 587.0,965.1 568.9,954.4 551.4,942.8 534.4,930.4 518.1,917.2 502.5,903.0 487.8,887.6 474.3,871.3 461.7,854.1 450.0,836.3 438.9,818.0 428.3,799.4 418.4,780.4 409.2,760.9 401.2,740.7 394.6,720.0 389.4,698.7 385.4,677.1 382.6,655.2 380.5,633.3 379.2,611.2 378.7,589.1 379.1,566.9 380.9,544.6 384.1,522.5 388.6,500.5 394.4,478.9 401.1,457.5 408.6,436.4 416.9,415.7 426.3,395.3 436.7,375.5 448.4,356.5 461.2,338.3 474.9,320.9 489.3,304.2 504.2,287.9 519.6,272.1 535.4,256.9 551.9,242.4 569.3,229.0 587.4,216.9 606.3,206.2 625.7,196.7 645.5,188.3 665.6,180.8 685.8,174.0 706.3,168.2 727.0,163.5 748.0,160.3 769.0,158.5 790.0,158.0 810.9,158.8 831.7,160.5 852.4,163.0 873.0,166.5 893.3,171.1Z"/><path d="M907.4,194.8 926.0,201.7 944.3,209.7 962.1,218.7 979.5,228.4 996.5,238.8 1013.2,250.0 1029.3,262.0 1044.7,275.1 1059.0,289.5 1072.3,305.0 1084.4,321.5 1095.5,338.7 1105.9,356.5 1115.6,374.6 1124.6,393.1 1132.9,412.0 1140.3,431.4 1146.5,451.3 1151.5,471.6 1155.4,492.2 1158.2,513.0 1160.2,534.0 1161.4,555.1 1161.6,576.2 1160.6,597.4 1158.5,618.6 1155.1,639.6 1150.5,660.4 1145.1,681.0 1139.0,701.4 1132.3,721.7 1124.8,741.7 1116.4,761.4 1106.9,780.5 1096.1,799.0 1084.1,816.6 1071.0,833.4 1057.1,849.3 1042.6,864.6 1027.5,879.3 1012.0,893.4 995.9,906.8 979.2,919.3 961.9,930.7 944.0,941.1 925.6,950.5 906.9,958.9 887.9,966.6 868.6,973.3 849.0,978.9 829.1,983.3 809.1,986.2 789.0,987.7 768.9,988.0 749.0,987.3 729.1,985.8 709.2,983.6 689.5,980.6 670.0,976.6 650.7,971.2 632.0,964.4 613.8,956.2 596.2,946.7 579.2,936.2 562.7,924.9 546.7,913.0 531.2,900.4 516.2,887.0 502.1,872.8 488.7,857.6 476.2,841.7 464.4,825.2 453.2,808.1 442.8,790.5 433.1,772.4 424.3,753.6 416.8,734.2 410.7,714.2 405.8,693.8 402.2,673.0 399.5,652.1 397.4,631.1 396.1,610.0 395.5,588.8 396.0,567.5 397.7,546.2 400.9,525.0 405.5,504.1 411.2,483.4 417.9,463.1 425.5,443.1 433.8,423.4 442.9,404.1 453.0,385.4 464.1,367.2 476.0,349.7 488.8,332.8 502.3,316.6 516.3,300.8 530.8,285.6 546.0,271.0 562.0,257.4 578.7,244.9 596.3,233.8 614.5,223.9 633.1,215.1 652.0,207.3 671.0,200.1 690.3,193.6 709.8,187.8 729.5,183.2 749.4,179.7 769.4,177.7 789.5,177.0 809.5,177.5 829.4,179.0 849.2,181.4 868.8,184.8 888.3,189.2Z"/><path d="M901.5,212.5 919.3,219.1 936.7,226.7 953.7,235.4 970.2,244.9 986.2,255.1 1001.8,266.2 1016.8,278.0 1031.2,290.7 1044.8,304.4 1057.4,319.1 1069.1,334.6 1079.8,350.9 1089.7,367.7 1098.9,384.9 1107.4,402.5 1115.3,420.5 1122.5,438.8 1128.8,457.6 1134.1,476.8 1138.2,496.3 1141.4,516.1 1143.5,536.1 1144.6,556.3 1144.8,576.5 1143.9,596.8 1141.9,617.0 1138.8,637.1 1134.6,657.1 1129.4,676.8 1123.4,696.3 1116.6,715.5 1109.1,734.4 1100.7,753.0 1091.5,771.2 1081.1,788.8 1069.7,805.6 1057.3,821.6 1044.1,836.9 1030.2,851.4 1015.8,865.2 1000.8,878.5 985.5,891.1 969.6,903.0 953.1,914.1 936.2,924.1 918.8,933.2 900.9,941.3 882.8,948.5 864.3,954.7 845.6,959.9 826.7,963.9 807.7,966.7 788.5,968.2 769.4,968.6 750.4,967.9 731.5,966.4 712.6,964.1 693.9,961.0 675.4,957.1 657.1,952.1 639.1,945.9 621.6,938.4 604.7,929.8 588.3,920.1 572.4,909.6 557.1,898.3 542.2,886.3 527.9,873.5 514.2,860.1 501.2,845.8 489.0,830.7 477.6,814.9 467.1,798.5 457.3,781.5 448.3,764.0 440.3,745.9 433.4,727.3 427.7,708.1 423.2,688.6 419.8,668.8 417.4,648.8 415.9,628.8 415.0,608.7 414.9,588.5 415.6,568.3 417.3,548.1 420.1,527.9 424.1,508.0 429.3,488.3 435.5,468.9 442.6,449.8 450.5,431.1 459.1,412.7 468.6,394.8 478.9,377.4 490.1,360.5 502.1,344.2 514.8,328.6 528.1,313.5 542.1,299.1 556.8,285.4 572.1,272.5 588.1,260.6 604.7,249.9 622.0,240.3 639.7,231.8 657.7,224.2 676.0,217.5 694.4,211.5 713.0,206.2 731.8,201.8 750.8,198.3 769.9,196.1 789.0,195.1 808.2,195.4 827.2,196.8 846.1,199.2 864.8,202.6 883.3,207.1Z"/><path d="M898.1,222.8 915.2,229.8 932.0,237.5 948.5,245.7 964.7,254.5 980.6,264.0 996.0,274.4 1010.7,285.8 1024.6,298.4 1037.6,311.9 1049.9,326.2 1061.4,341.1 1072.3,356.6 1082.4,372.7 1091.7,389.3 1100.0,406.6 1107.3,424.3 1113.7,442.5 1119.3,461.0 1124.2,479.7 1128.4,498.7 1131.9,517.8 1134.5,537.3 1135.8,556.9 1135.8,576.7 1134.5,596.4 1131.9,616.1 1128.5,635.6 1124.3,654.9 1119.7,674.2 1114.3,693.3 1108.2,712.2 1101.2,730.8 1093.0,748.9 1083.7,766.5 1073.4,783.5 1062.3,799.9 1050.5,815.7 1037.9,830.9 1024.6,845.4 1010.6,859.1 995.8,871.8 980.4,883.5 964.5,894.4 948.2,904.6 931.6,914.1 914.7,923.2 897.6,931.5 880.0,938.9 862.1,945.1 843.9,949.9 825.4,953.4 806.8,955.6 788.3,956.9 769.7,957.4 751.2,957.3 732.7,956.5 714.3,954.8 696.0,951.9 677.9,947.9 660.1,942.8 642.7,936.5 625.6,929.4 608.9,921.4 592.6,912.4 576.9,902.5 561.9,891.5 547.6,879.4 534.1,866.3 521.4,852.6 509.2,838.3 497.4,823.6 486.1,808.4 475.4,792.8 465.5,776.5 456.6,759.4 449.0,741.7 442.7,723.4 437.4,704.7 433.1,685.7 429.6,666.5 426.7,647.1 424.7,627.7 423.6,608.1 423.5,588.4 424.6,568.6 426.7,549.0 429.7,529.4 433.5,510.0 438.2,490.7 443.8,471.6 450.4,452.9 458.2,434.7 467.1,417.0 477.0,399.9 487.7,383.3 498.8,367.2 510.4,351.4 522.4,335.9 535.0,320.8 548.3,306.4 562.4,292.9 577.4,280.5 593.1,269.1 609.4,258.8 626.1,249.3 643.2,240.5 660.5,232.6 678.2,225.5 696.2,219.5 714.5,214.6 732.9,210.9 751.5,208.1 770.1,206.3 788.8,205.2 807.4,205.1 826.1,205.9 844.6,208.1 862.8,211.7 880.7,216.6Z"/><path d="M894.5,233.8 911.4,239.7 928.0,246.4 944.2,254.1 959.9,262.9 975.0,272.8 989.4,283.7 1003.3,295.4 1016.5,307.7 1029.2,320.7 1041.3,334.3 1052.7,348.6 1063.3,363.5 1073.0,379.2 1081.9,395.4 1090.0,412.1 1097.3,429.1 1104.1,446.5 1110.0,464.3 1115.1,482.4 1119.2,500.9 1122.0,519.7 1123.6,538.7 1124.0,557.7 1123.5,576.9 1122.1,595.9 1120.0,614.9 1117.2,633.9 1113.5,652.7 1108.9,671.3 1103.2,689.6 1096.5,707.6 1089.0,725.2 1080.7,742.4 1071.7,759.3 1062.0,775.7 1051.7,791.7 1040.5,807.2 1028.6,822.0 1015.9,836.0 1002.5,849.4 988.5,862.0 974.1,874.1 959.2,885.6 943.9,896.4 928.0,906.4 911.6,915.3 894.7,923.0 877.4,929.4 859.7,934.7 841.9,939.0 824.0,942.4 806.0,944.9 788.0,946.7 770.0,947.4 752.0,947.1 734.0,945.7 716.3,943.2 698.7,939.7 681.4,935.4 664.3,930.3 647.4,924.4 630.9,917.6 614.8,909.7 599.2,900.8 584.2,891.0 569.8,880.2 555.9,868.7 542.5,856.7 529.5,844.0 517.1,830.7 505.4,816.7 494.6,801.8 484.9,786.2 476.1,769.9 468.3,753.0 461.3,735.8 455.1,718.2 449.6,700.3 444.8,682.2 441.0,663.7 438.1,645.1 436.3,626.2 435.4,607.2 435.3,588.2 436.1,569.1 437.6,550.0 439.9,531.0 443.3,512.0 447.7,493.3 453.3,474.8 460.0,456.7 467.6,439.0 476.0,421.7 485.1,404.8 494.8,388.2 505.2,372.1 516.5,356.6 528.6,341.9 541.6,328.0 555.4,315.0 569.8,302.8 584.7,291.4 599.9,280.7 615.6,270.6 631.7,261.3 648.1,252.9 664.9,245.5 682.0,239.0 699.4,233.4 717.0,228.6 734.6,224.6 752.5,221.2 770.4,218.8 788.5,217.5 806.5,217.4 824.5,218.6 842.3,221.0 859.9,224.5 877.3,228.8Z"/><path d="M890.6,245.7 906.8,251.6 922.6,258.6 938.0,266.5 953.0,275.2 967.7,284.5 981.9,294.4 995.8,305.0 1008.9,316.5 1021.3,329.0 1032.8,342.4 1043.5,356.5 1053.4,371.2 1062.8,386.2 1071.8,401.6 1080.2,417.4 1087.9,433.7 1094.5,450.5 1099.8,467.9 1104.0,485.7 1107.0,503.8 1109.1,522.0 1110.6,540.3 1111.5,558.6 1111.7,577.0 1111.1,595.5 1109.4,613.9 1106.6,632.3 1102.9,650.4 1098.2,668.4 1092.9,686.2 1087.0,703.8 1080.3,721.2 1072.9,738.3 1064.3,754.8 1054.7,770.7 1044.1,785.9 1032.6,800.4 1020.6,814.3 1008.1,827.7 995.3,840.8 982.0,853.3 968.1,865.1 953.5,876.0 938.3,885.8 922.5,894.4 906.3,902.0 889.9,908.8 873.3,915.0 856.5,920.5 839.5,925.3 822.4,929.2 805.1,932.0 787.7,933.7 770.3,934.3 752.9,934.1 735.6,933.2 718.3,931.6 701.1,929.2 684.0,925.8 667.3,921.1 651.0,915.1 635.2,907.8 619.9,899.5 605.1,890.5 590.5,881.0 576.3,870.9 562.5,860.3 549.2,848.8 536.8,836.4 525.2,823.0 514.6,808.9 504.7,794.1 495.5,778.9 486.8,763.3 478.8,747.3 471.5,730.9 465.1,714.0 459.8,696.7 455.5,679.0 452.1,661.1 449.5,643.0 447.4,624.8 446.0,606.4 445.4,588.0 445.9,569.5 447.6,551.0 450.7,532.6 454.9,514.5 460.2,496.6 466.1,479.0 472.5,461.6 479.4,444.4 487.0,427.5 495.5,411.0 504.9,395.1 515.2,379.8 526.4,365.2 538.3,351.1 550.6,337.6 563.4,324.5 576.7,312.0 590.6,300.2 605.1,289.3 620.3,279.5 635.9,270.7 652.0,262.7 668.3,255.4 684.8,248.6 701.5,242.5 718.5,237.2 735.7,233.1 753.2,230.4 770.7,229.1 788.2,229.1 805.6,230.1 822.9,231.8 840.0,234.1 857.1,237.1 873.9,240.9Z"/><path d="M885.8,260.0 901.6,265.2 917.0,271.2 932.1,278.3 946.6,286.5 960.5,295.8 973.8,306.0 986.4,317.0 998.6,328.5 1010.4,340.4 1021.7,352.8 1032.6,365.8 1042.7,379.4 1052.0,393.7 1060.3,408.7 1067.7,424.3 1074.2,440.3 1079.9,456.6 1084.9,473.3 1089.0,490.2 1092.3,507.3 1094.6,524.7 1096.1,542.2 1096.7,559.7 1096.6,577.3 1095.9,594.9 1094.6,612.5 1092.7,630.1 1089.9,647.7 1086.0,665.1 1081.0,682.3 1074.8,699.0 1067.7,715.4 1059.7,731.3 1051.1,746.8 1042.0,762.0 1032.3,776.9 1022.1,791.3 1011.1,805.1 999.3,818.3 986.8,830.6 973.7,842.2 960.1,853.1 945.9,863.2 931.4,872.6 916.4,881.2 901.1,888.8 885.4,895.5 869.4,901.3 853.2,906.1 836.9,910.3 820.5,913.9 804.0,917.0 787.4,919.3 770.6,920.7 753.9,921.0 737.2,920.0 720.7,917.7 704.4,914.3 688.4,910.0 672.7,904.9 657.1,899.1 641.9,892.7 627.0,885.5 612.5,877.4 598.5,868.4 585.0,858.6 572.0,848.1 559.6,836.8 547.7,825.0 536.4,812.5 525.8,799.3 516.0,785.4 507.1,770.8 499.1,755.7 491.8,740.1 485.2,724.3 479.0,708.2 473.4,691.8 468.4,675.1 464.3,658.1 461.2,640.8 459.4,623.2 458.7,605.5 459.2,587.8 460.6,570.0 462.7,552.4 465.6,534.9 469.2,517.5 473.7,500.2 479.0,483.3 485.1,466.6 492.1,450.3 499.7,434.2 507.9,418.6 516.8,403.2 526.4,388.4 536.8,374.0 548.0,360.4 560.0,347.6 572.6,335.6 585.8,324.2 599.4,313.4 613.3,303.1 627.5,293.2 642.0,283.9 657.1,275.5 672.5,268.0 688.4,261.7 704.7,256.5 721.1,252.4 737.7,249.2 754.4,246.9 771.1,245.4 787.8,244.8 804.4,245.2 821.0,246.5 837.5,248.7 853.7,251.8 869.9,255.5Z"/><path d="M881.0,274.6 895.8,280.0 910.3,286.5 924.3,293.8 938.0,301.7 951.4,310.2 964.4,319.3 976.9,329.2 988.7,340.0 999.7,351.6 1010.0,364.0 1019.6,376.9 1028.7,390.2 1037.4,403.8 1045.7,417.7 1053.5,432.1 1060.5,446.9 1066.4,462.3 1071.2,478.2 1074.9,494.4 1077.8,510.8 1080.0,527.4 1081.7,544.0 1083.0,560.7 1083.5,577.5 1083.1,594.4 1081.7,611.3 1079.1,628.1 1075.6,644.7 1071.3,661.1 1066.3,677.4 1060.8,693.5 1054.5,709.3 1047.3,724.7 1039.2,739.6 1030.0,753.9 1020.1,767.5 1009.6,780.6 998.7,793.2 987.5,805.6 976.0,817.7 964.0,829.2 951.3,840.0 938.0,849.9 924.1,858.7 909.7,866.5 895.0,873.5 880.1,879.9 865.0,885.9 849.8,891.2 834.4,895.9 818.7,899.5 802.9,902.0 787.0,903.5 771.1,904.0 755.2,903.8 739.4,902.9 723.6,901.4 707.9,899.1 692.4,895.6 677.3,890.9 662.6,885.1 648.3,878.3 634.3,870.8 620.7,862.8 607.2,854.5 594.0,845.7 581.3,836.2 569.1,825.8 557.7,814.5 547.2,802.3 537.5,789.3 528.4,775.8 519.9,762.0 511.8,747.8 504.4,733.2 497.8,718.2 492.1,702.7 487.4,686.8 483.7,670.6 480.8,654.2 478.4,637.7 476.6,621.0 475.5,604.3 475.2,587.5 475.9,570.6 477.9,553.8 480.9,537.2 484.9,520.8 489.5,504.5 494.6,488.4 499.9,472.4 505.8,456.6 512.4,441.0 520.0,425.8 528.5,411.2 537.9,397.2 548.1,383.8 558.9,370.9 570.0,358.4 581.7,346.4 593.9,335.0 606.7,324.3 620.1,314.6 634.1,305.8 648.4,297.9 663.1,290.6 678.0,283.9 693.0,277.7 708.3,272.2 723.8,267.6 739.6,264.2 755.5,262.0 771.5,261.1 787.4,261.1 803.2,261.9 819.0,263.1 834.7,264.8 850.3,267.1 865.8,270.3Z"/><path d="M876.2,289.0 890.3,294.4 904.1,300.4 917.7,307.0 930.9,314.3 943.8,322.2 956.3,330.8 968.2,340.3 979.5,350.6 990.1,361.7 1000.0,373.5 1009.3,385.7 1018.1,398.4 1026.4,411.5 1034.1,425.0 1041.1,438.9 1047.5,453.2 1053.0,467.9 1057.6,483.0 1061.5,498.4 1064.6,514.0 1067.0,529.7 1068.6,545.7 1069.4,561.7 1069.3,577.7 1068.4,593.8 1066.6,609.9 1064.0,625.8 1060.9,641.6 1057.1,657.3 1052.7,672.9 1047.7,688.3 1041.9,703.5 1035.1,718.3 1027.5,732.6 1019.0,746.4 1009.9,759.6 1000.1,772.4 989.8,784.7 979.0,796.5 967.7,807.8 955.9,818.5 943.6,828.5 930.8,837.7 917.6,846.3 904.0,854.1 890.1,861.2 875.9,867.6 861.5,873.3 846.8,878.1 831.9,881.9 816.9,884.8 801.7,886.9 786.6,888.1 771.5,888.7 756.3,888.7 741.2,888.0 726.2,886.6 711.2,884.4 696.4,881.1 682.0,876.8 667.8,871.5 654.0,865.4 640.5,858.5 627.4,850.9 614.7,842.8 602.4,833.9 590.5,824.3 579.2,814.1 568.5,803.1 558.4,791.6 548.8,779.6 539.8,767.1 531.3,754.1 523.5,740.6 516.6,726.6 510.4,712.1 505.2,697.2 500.8,682.0 497.2,666.6 494.1,651.0 491.7,635.2 489.8,619.4 488.7,603.4 488.5,587.3 489.1,571.2 490.8,555.1 493.4,539.1 496.8,523.3 501.0,507.6 505.8,492.2 511.4,477.0 517.6,462.0 524.6,447.5 532.4,433.3 540.7,419.6 549.7,406.3 559.2,393.3 569.2,380.8 579.7,368.8 590.8,357.3 602.5,346.5 614.8,336.5 627.6,327.3 640.9,318.9 654.6,311.2 668.5,304.1 682.6,297.6 696.9,291.7 711.5,286.5 726.4,282.2 741.4,278.9 756.6,276.5 771.8,275.1 787.0,274.6 802.2,274.9 817.4,276.0 832.4,277.9 847.2,280.7 861.9,284.5Z"/><path d="M870.1,307.4 883.6,311.7 896.8,316.8 909.7,322.9 922.0,330.0 933.8,338.0 945.1,346.8 955.9,356.1 966.4,365.8 976.6,375.9 986.4,386.3 995.7,397.3 1004.4,409.0 1012.3,421.2 1019.5,433.9 1026.0,447.2 1031.8,460.7 1037.0,474.6 1041.4,488.8 1045.1,503.3 1047.8,518.0 1049.7,532.9 1050.7,547.9 1051.0,563.0 1050.9,578.0 1050.4,593.1 1049.4,608.2 1047.9,623.3 1045.5,638.4 1042.2,653.3 1037.8,668.0 1032.3,682.3 1026.1,696.2 1019.2,709.8 1011.9,723.1 1004.1,736.1 995.8,748.8 986.9,761.0 977.3,772.7 967.1,783.8 956.3,794.2 945.1,804.1 933.5,813.4 921.6,822.2 909.2,830.3 896.4,837.7 883.3,844.1 869.8,849.6 856.1,854.2 842.3,858.3 828.4,861.9 814.4,865.2 800.4,868.0 786.2,870.3 771.9,871.7 757.6,872.1 743.3,871.3 729.1,869.5 715.2,866.7 701.4,863.2 687.8,859.0 674.4,854.3 661.3,848.8 648.6,842.5 636.2,835.4 624.3,827.5 612.8,819.1 601.7,810.0 591.0,800.5 580.7,790.4 571.0,779.7 561.9,768.4 553.8,756.3 546.4,743.6 539.8,730.5 533.8,717.1 528.3,703.5 523.0,689.8 518.1,675.8 513.9,661.6 510.4,647.1 507.8,632.3 506.3,617.3 505.8,602.1 506.1,587.0 507.1,571.9 508.8,556.8 511.2,541.8 514.3,526.9 518.2,512.2 522.9,497.8 528.3,483.6 534.2,469.7 540.6,455.9 547.4,442.4 554.7,429.1 562.7,416.2 571.5,403.9 581.1,392.3 591.4,381.4 602.3,371.1 613.6,361.4 625.2,352.0 637.0,343.0 649.1,334.4 661.6,326.4 674.5,319.2 687.8,312.8 701.4,307.5 715.3,303.1 729.4,299.5 743.6,296.7 757.9,294.7 772.2,293.5 786.6,293.2 800.8,293.9 814.9,295.4 828.9,297.7 842.8,300.5 856.5,303.7Z"/></g>
</g>
<g clip-path="url(#cR)">
<g fill="none" stroke="#b0001a" stroke-width="7" opacity="0.38" filter="url(#gb)"><path d="M919.6,161.8 940.4,169.2 961.1,177.3 981.3,186.4 1001.0,196.7 1020.0,208.5 1038.0,221.9 1055.0,236.5 1071.1,252.2 1086.5,268.6 1101.3,285.7 1115.3,303.3 1128.6,321.7 1140.9,340.8 1152.1,360.8 1162.1,381.4 1171.1,402.6 1179.1,424.3 1186.3,446.3 1192.5,468.7 1197.6,491.6 1201.2,514.8 1203.2,538.3 1203.5,561.9 1202.4,585.5 1200.3,609.1 1197.4,632.5 1194.0,655.8 1189.9,679.1 1185.0,702.3 1178.8,725.2 1171.2,747.8 1162.2,769.8 1151.8,791.2 1140.4,812.0 1128.2,832.3 1115.2,852.1 1101.5,871.3 1086.8,889.8 1071.1,907.3 1054.5,923.9 1037.0,939.4 1018.9,954.1 1000.2,968.0 981.1,981.1 961.4,993.4 941.1,1004.5 920.2,1014.1 898.7,1021.9 876.8,1028.1 854.7,1032.7 832.5,1036.2 810.3,1039.0 788.1,1041.1 765.8,1042.5 743.5,1042.8 721.3,1041.9 699.2,1039.4 677.4,1035.3 656.0,1029.9 634.8,1023.4 614.0,1015.8 593.6,1007.3 573.6,997.7 554.2,986.8 535.6,974.6 517.8,961.2 500.8,946.8 484.4,931.6 468.5,915.8 453.1,899.4 438.4,882.3 424.7,864.2 412.2,845.1 401.2,825.0 391.7,804.0 383.4,782.4 376.2,760.4 369.6,738.2 363.7,715.8 358.5,693.1 354.3,670.1 351.4,646.7 349.9,623.2 349.9,599.5 351.0,575.8 353.3,552.2 356.6,528.6 361.0,505.2 366.6,482.0 373.7,459.1 382.2,436.8 392.1,415.1 403.0,394.0 414.6,373.4 426.8,353.1 439.6,333.2 453.1,313.9 467.7,295.3 483.4,277.8 500.3,261.5 518.1,246.5 536.7,232.6 555.8,219.6 575.2,207.3 594.9,195.7 615.0,184.8 635.6,174.9 656.6,166.2 678.1,158.9 699.9,152.8 721.9,147.9 744.0,144.0 766.3,141.2 788.7,139.5 811.1,139.4 833.4,141.0 855.4,144.2 877.2,149.0 898.5,155.0Z"/><path d="M914.6,172.1 935.1,178.9 955.1,187.0 974.5,196.6 993.2,207.5 1011.2,219.8 1028.3,233.1 1044.8,247.3 1060.7,262.2 1075.9,277.8 1090.5,294.1 1104.2,311.2 1117.0,329.1 1128.7,347.9 1139.5,367.2 1149.4,387.2 1158.6,407.6 1166.8,428.4 1174.1,449.8 1180.2,471.6 1184.9,493.9 1188.2,516.5 1190.2,539.3 1191.1,562.3 1191.0,585.3 1190.1,608.3 1188.2,631.4 1185.3,654.3 1181.1,677.2 1175.4,699.7 1168.3,721.9 1159.9,743.5 1150.4,764.7 1140.1,785.3 1128.9,805.5 1117.0,825.2 1104.2,844.3 1090.5,862.7 1075.9,880.3 1060.4,897.0 1044.2,913.0 1027.4,928.2 1010.1,942.7 992.2,956.5 973.6,969.3 954.4,980.9 934.5,991.2 914.1,1000.1 893.3,1007.6 872.2,1014.1 851.0,1019.6 829.6,1024.3 808.0,1028.0 786.4,1030.6 764.6,1031.9 742.9,1031.7 721.3,1030.0 699.9,1027.0 678.7,1022.8 657.8,1017.6 637.2,1011.4 616.9,1004.2 597.0,996.0 577.6,986.5 558.8,975.8 540.6,964.0 523.1,951.3 506.0,937.8 489.5,923.6 473.7,908.5 458.6,892.4 444.7,875.3 432.0,857.1 420.5,838.0 410.2,818.1 400.9,797.7 392.4,776.9 384.8,755.8 378.0,734.3 372.3,712.4 367.8,690.1 364.6,667.5 362.7,644.7 362.0,621.8 362.3,598.9 363.6,576.0 365.7,553.1 368.9,530.3 373.3,507.7 378.9,485.3 385.7,463.2 393.6,441.5 402.3,420.1 411.8,399.1 422.1,378.4 433.3,358.2 445.6,338.6 459.0,319.8 473.7,302.0 489.4,285.3 506.0,269.6 523.2,254.8 540.9,240.7 559.2,227.4 577.9,215.0 597.2,203.5 617.1,193.2 637.4,184.2 658.2,176.4 679.2,169.8 700.5,164.1 721.9,159.4 743.5,155.8 765.2,153.4 786.9,152.4 808.6,152.8 830.2,154.6 851.6,157.6 872.8,161.5 893.8,166.4Z"/><path d="M909.3,183.3 929.1,190.3 948.5,198.2 967.5,207.3 985.9,217.6 1003.5,229.3 1020.2,242.2 1036.2,256.0 1051.6,270.6 1066.5,285.7 1081.1,301.2 1095.0,317.4 1108.2,334.4 1120.2,352.4 1130.8,371.4 1139.9,391.2 1147.7,411.7 1154.5,432.6 1160.5,453.7 1165.8,475.0 1170.2,496.6 1173.6,518.5 1175.7,540.6 1176.6,562.8 1176.3,585.1 1174.9,607.4 1172.8,629.6 1169.9,651.8 1166.1,673.9 1161.1,695.8 1154.7,717.4 1147.0,738.6 1137.9,759.2 1127.8,779.2 1117.1,798.8 1105.8,818.2 1094.0,837.2 1081.5,855.8 1068.0,873.8 1053.5,890.7 1037.7,906.5 1021.0,921.1 1003.4,934.5 985.3,947.0 966.8,958.7 948.0,969.6 928.6,979.6 908.9,988.4 888.7,996.0 868.2,1002.3 847.5,1007.4 826.6,1011.6 805.7,1015.0 784.6,1017.6 763.5,1019.2 742.3,1019.5 721.3,1018.1 700.4,1015.1 679.9,1010.5 659.8,1004.8 639.9,998.3 620.3,991.2 600.9,983.5 581.7,974.9 563.1,965.2 545.2,954.1 528.1,941.7 511.9,928.0 496.6,913.3 481.9,897.9 467.9,881.9 454.6,865.2 442.1,847.8 430.6,829.6 420.3,810.6 411.0,791.0 402.6,770.9 395.0,750.5 388.0,729.8 381.6,708.7 376.2,687.3 372.2,665.4 369.8,643.2 369.0,620.8 369.7,598.4 371.6,576.0 374.3,553.7 377.6,531.4 381.7,509.3 386.7,487.3 392.9,465.6 400.4,444.4 409.3,423.6 419.4,403.5 430.5,383.9 442.2,364.8 454.7,346.3 468.0,328.4 482.2,311.2 497.4,295.0 513.4,279.8 530.1,265.6 547.4,252.1 564.9,239.2 582.9,226.7 601.2,214.9 620.1,204.0 639.6,194.4 659.6,186.3 680.2,179.9 701.0,175.0 722.0,171.3 743.0,168.4 764.0,166.2 785.1,164.9 806.3,164.6 827.3,165.6 848.2,168.1 868.9,172.0 889.3,177.2Z"/><path d="M903.6,195.8 922.7,202.7 941.6,210.3 960.1,218.8 978.1,228.3 995.5,239.1 1012.2,251.1 1028.1,264.2 1043.2,278.3 1057.5,293.2 1071.2,308.8 1084.1,325.1 1096.2,342.1 1107.3,359.8 1117.5,378.2 1126.8,397.2 1135.1,416.7 1142.6,436.5 1149.3,456.8 1155.1,477.4 1159.7,498.4 1163.0,519.8 1164.8,541.4 1165.2,563.1 1164.4,584.9 1162.6,606.6 1160.0,628.1 1156.6,649.6 1152.6,671.0 1147.7,692.2 1141.7,713.2 1134.6,733.9 1126.3,754.1 1117.0,773.8 1106.7,793.0 1095.5,811.7 1083.5,829.9 1070.7,847.4 1057.0,864.1 1042.4,880.0 1027.0,895.1 1011.0,909.4 994.4,922.9 977.4,935.7 959.9,947.8 941.8,959.0 923.2,969.2 904.1,978.1 884.4,985.5 864.4,991.5 844.1,996.2 823.7,999.8 803.3,1002.6 782.9,1004.5 762.4,1005.6 741.9,1005.7 721.4,1004.6 701.1,1002.3 681.1,998.8 661.2,994.1 641.7,988.2 622.5,981.4 603.7,973.5 585.4,964.4 567.7,954.2 550.6,942.8 534.3,930.4 518.7,917.1 503.6,903.1 489.1,888.5 475.1,873.3 461.8,857.4 449.3,840.7 437.9,823.1 427.8,804.7 418.9,785.5 411.1,765.8 404.2,745.6 398.2,725.2 392.9,704.6 388.4,683.6 384.9,662.5 382.4,641.0 381.1,619.4 380.9,597.7 381.7,576.0 383.6,554.3 386.4,532.6 390.4,511.1 395.6,489.7 402.1,468.8 409.9,448.3 418.8,428.3 428.6,408.7 439.2,389.7 450.3,371.0 462.1,352.7 474.7,334.9 488.1,317.9 502.6,301.7 518.0,286.6 534.2,272.6 551.2,259.6 568.6,247.4 586.5,236.1 604.8,225.5 623.5,215.9 642.6,207.2 662.0,199.6 681.8,193.0 701.8,187.5 722.0,183.0 742.4,179.4 762.9,176.9 783.4,175.5 804.0,175.6 824.4,177.1 844.6,180.1 864.6,184.4 884.2,189.7Z"/><path d="M898.2,207.3 916.8,213.7 935.1,221.1 953.1,229.5 970.6,238.7 987.7,248.9 1004.3,260.0 1020.1,272.2 1035.2,285.5 1049.2,300.0 1062.2,315.5 1074.2,331.9 1085.4,348.9 1095.8,366.4 1105.6,384.3 1114.7,402.6 1123.1,421.4 1130.5,440.6 1136.8,460.3 1141.8,480.5 1145.7,501.0 1148.5,521.8 1150.2,542.7 1151.0,563.6 1150.8,584.7 1149.7,605.7 1147.5,626.7 1144.4,647.6 1140.3,668.3 1135.4,688.9 1129.6,709.3 1123.0,729.5 1115.5,749.4 1106.9,768.8 1097.0,787.7 1085.9,805.8 1073.7,823.0 1060.5,839.5 1046.7,855.2 1032.3,870.3 1017.4,884.9 1002.1,898.9 986.2,912.3 969.7,924.8 952.7,936.4 935.0,947.0 916.9,956.5 898.3,965.0 879.3,972.4 860.1,978.8 840.6,984.1 820.9,988.3 801.1,991.3 781.1,993.1 761.2,993.8 741.3,993.7 721.4,992.7 701.6,990.8 682.0,987.8 662.6,983.6 643.5,977.9 624.9,970.8 607.0,962.3 589.6,952.6 572.9,942.0 556.6,930.7 540.8,918.8 525.4,906.2 510.6,893.0 496.4,878.9 482.9,864.1 470.2,848.5 458.3,832.2 447.2,815.3 437.0,797.6 427.7,779.4 419.5,760.6 412.4,741.2 406.4,721.4 401.5,701.1 397.6,680.7 394.5,660.0 392.2,639.2 390.6,618.3 390.0,597.2 390.6,576.0 392.5,554.9 395.8,533.8 400.4,513.1 406.3,492.6 413.1,472.5 420.7,452.7 429.0,433.2 438.1,414.1 447.9,395.4 458.5,377.2 470.0,359.5 482.3,342.4 495.4,325.9 509.2,310.0 523.8,295.0 539.2,280.7 555.3,267.5 572.2,255.5 589.8,244.6 607.8,234.8 626.3,226.0 645.0,218.0 663.9,210.7 683.0,204.2 702.4,198.5 722.0,194.0 741.8,190.8 761.7,188.9 781.6,188.4 801.5,189.2 821.2,191.0 840.7,193.7 860.1,197.3 879.3,201.8Z"/><path d="M893.3,217.5 911.4,223.7 929.2,230.9 946.5,239.3 963.2,248.9 979.2,259.5 994.7,271.1 1009.5,283.5 1023.8,296.6 1037.5,310.3 1050.5,324.9 1062.6,340.2 1073.9,356.3 1084.3,373.0 1093.9,390.2 1102.9,407.9 1111.2,426.0 1118.7,444.5 1125.4,463.5 1130.9,483.0 1135.0,502.9 1137.7,523.1 1139.1,543.5 1139.5,564.0 1138.9,584.4 1137.6,604.9 1135.4,625.3 1132.5,645.6 1128.4,665.7 1123.3,685.7 1117.1,705.3 1109.9,724.5 1101.8,743.4 1093.0,761.9 1083.5,780.0 1073.1,797.6 1061.9,814.7 1049.7,831.0 1036.7,846.7 1023.0,861.6 1008.7,875.8 993.9,889.5 978.6,902.7 962.8,915.2 946.4,926.9 929.4,937.5 911.7,946.8 893.5,954.7 874.9,961.3 856.0,966.9 837.0,971.5 817.9,975.3 798.7,978.3 779.4,980.2 760.1,981.1 740.8,980.8 721.6,979.3 702.6,976.8 683.7,973.4 665.0,969.1 646.5,963.9 628.4,957.7 610.7,950.3 593.5,941.7 576.9,931.9 560.9,921.1 545.5,909.6 530.4,897.5 515.9,884.8 501.8,871.3 488.5,857.1 476.1,841.9 464.8,825.7 454.6,808.7 445.5,791.1 437.3,773.0 429.9,754.5 423.2,735.7 417.4,716.5 412.4,697.1 408.4,677.3 405.5,657.3 403.5,637.2 402.4,616.9 402.0,596.6 402.5,576.1 403.9,555.7 406.4,535.3 410.1,515.0 415.1,495.0 421.4,475.3 428.6,456.0 436.7,437.0 445.4,418.4 454.8,400.1 465.0,382.2 476.1,364.8 488.2,348.3 501.3,332.5 515.4,317.8 530.2,303.9 545.5,290.8 561.4,278.4 577.7,266.8 594.5,256.0 611.7,246.1 629.4,237.2 647.5,229.4 665.8,222.4 684.4,216.2 703.2,210.8 722.1,206.2 741.2,202.5 760.5,200.0 779.9,199.0 799.2,199.3 818.4,201.0 837.4,203.9 856.2,207.7 874.9,212.2Z"/><path d="M887.6,229.7 905.5,234.9 922.9,241.4 939.8,249.3 955.8,258.9 971.1,269.6 985.8,281.3 999.9,293.5 1013.8,306.1 1027.3,319.1 1040.3,332.7 1052.6,347.2 1063.8,362.5 1073.9,378.8 1083.1,395.6 1091.6,412.9 1099.4,430.6 1106.5,448.6 1112.7,467.1 1117.8,486.0 1121.4,505.4 1123.6,525.0 1124.7,544.7 1125.0,564.5 1124.8,584.3 1124.3,604.0 1123.3,623.9 1121.4,643.7 1118.2,663.5 1113.4,683.0 1107.1,702.0 1099.5,720.6 1091.0,738.6 1082.0,756.4 1072.5,773.8 1062.4,790.9 1051.6,807.5 1039.8,823.4 1027.1,838.4 1013.6,852.7 999.5,866.2 985.0,879.2 970.1,891.8 954.8,903.8 938.9,914.9 922.3,924.9 905.1,933.4 887.4,940.6 869.4,946.6 851.3,952.0 833.1,956.9 814.8,961.5 796.3,965.7 777.7,968.8 758.9,970.6 740.1,970.7 721.4,969.2 702.9,966.3 684.6,962.5 666.6,957.8 648.7,952.5 631.1,946.4 614.0,939.2 597.3,930.8 581.3,921.1 565.9,910.6 551.0,899.3 536.4,887.6 522.2,875.4 508.4,862.5 495.5,848.7 483.6,833.8 473.0,817.9 463.6,801.1 455.3,783.8 447.5,766.2 440.2,748.4 433.1,730.5 426.6,712.3 420.9,693.7 416.5,674.6 413.5,655.2 411.9,635.5 411.5,615.8 411.9,596.0 412.9,576.2 414.7,556.5 417.4,536.8 421.3,517.2 426.4,498.0 432.6,479.1 439.7,460.5 447.4,442.2 455.4,424.0 463.9,406.0 473.2,388.3 483.4,371.2 495.0,355.0 507.8,339.8 521.7,325.7 536.3,312.5 551.2,299.9 566.4,287.7 581.9,275.8 597.8,264.6 614.2,254.2 631.3,245.1 648.9,237.4 666.9,230.9 685.2,225.5 703.6,220.9 722.1,217.0 740.7,214.0 759.4,212.2 778.1,211.8 796.7,212.7 815.2,214.9 833.5,218.0 851.6,221.5 869.6,225.4Z"/><path d="M882.6,240.2 899.5,246.4 916.2,253.0 932.6,260.3 948.7,268.6 964.0,278.2 978.5,289.2 992.0,301.4 1004.9,314.4 1017.2,327.8 1029.3,341.4 1041.1,355.3 1052.5,369.7 1063.0,384.9 1072.3,401.0 1080.3,417.9 1087.0,435.4 1092.9,453.3 1098.1,471.4 1102.8,489.6 1107.0,508.1 1110.2,526.8 1112.2,545.8 1112.7,564.9 1112.0,584.0 1110.3,603.1 1108.0,622.1 1105.4,641.1 1102.4,660.1 1098.7,679.0 1093.9,697.7 1087.7,716.1 1080.1,733.9 1071.3,751.0 1061.6,767.7 1051.5,784.0 1041.1,800.2 1030.3,816.1 1018.9,831.5 1006.4,846.1 993.0,859.7 978.6,872.2 963.5,883.6 947.9,894.2 932.1,904.3 916.0,913.9 899.6,922.8 882.7,930.6 865.4,937.1 847.7,942.2 829.8,946.0 811.8,948.8 793.8,951.2 775.9,953.2 757.8,954.8 739.7,955.6 721.6,955.1 703.7,953.1 686.0,949.4 668.7,944.4 651.8,938.6 635.0,932.2 618.4,925.5 602.0,918.2 585.9,910.1 570.5,900.7 555.8,890.0 542.0,878.1 529.0,865.4 516.4,852.2 504.2,838.6 492.4,824.6 481.3,810.0 471.1,794.6 462.1,778.3 454.4,761.2 447.8,743.6 441.9,725.8 436.5,707.9 431.3,689.8 426.5,671.5 422.7,652.9 420.1,633.9 419.1,614.7 419.6,595.4 421.4,576.2 424.0,557.1 427.0,538.0 430.6,519.1 434.8,500.2 440.1,481.6 446.6,463.4 454.4,445.7 463.4,428.6 473.1,412.0 483.2,395.8 493.7,379.8 504.7,364.1 516.4,349.0 529.0,334.7 542.7,321.5 557.2,309.4 572.3,298.3 587.7,287.7 603.3,277.4 619.0,267.4 635.0,257.9 651.6,249.2 668.6,241.8 686.2,236.0 704.1,231.7 722.1,228.5 740.2,226.0 758.2,224.2 776.4,222.9 794.5,222.5 812.7,223.3 830.6,225.7 848.2,229.5 865.6,234.4Z"/><path d="M877.5,250.8 893.8,256.8 909.8,263.6 925.5,271.2 940.8,279.5 955.8,288.5 970.2,298.5 984.0,309.4 997.0,321.4 1009.1,334.3 1020.4,348.0 1031.1,362.2 1041.3,376.8 1050.9,391.9 1059.9,407.4 1068.1,423.4 1075.3,440.0 1081.4,457.1 1086.4,474.7 1090.4,492.5 1093.6,510.5 1096.1,528.7 1098.0,547.0 1099.0,565.4 1099.2,583.8 1098.3,602.3 1096.4,620.8 1093.5,639.1 1089.9,657.4 1085.6,675.5 1080.7,693.4 1074.9,711.2 1068.2,728.7 1060.4,745.7 1051.5,762.1 1041.6,777.9 1031.0,793.1 1019.7,807.7 1007.9,822.0 995.7,835.8 982.9,849.0 969.5,861.6 955.4,873.3 940.6,883.9 925.3,893.6 909.5,902.4 893.4,910.5 877.0,917.8 860.4,924.4 843.5,930.1 826.4,934.8 809.1,938.4 791.6,940.8 774.1,942.3 756.7,943.0 739.2,943.0 721.7,942.3 704.3,940.6 687.1,937.8 670.1,933.8 653.5,928.4 637.4,921.9 621.7,914.5 606.3,906.3 591.3,897.6 576.6,888.3 562.3,878.3 548.5,867.5 535.5,855.8 523.2,843.2 511.6,829.8 500.7,815.9 490.4,801.4 480.7,786.5 471.6,771.1 463.4,755.1 456.2,738.5 449.9,721.5 444.7,704.0 440.3,686.3 436.6,668.3 433.6,650.2 431.2,631.9 429.8,613.4 429.5,594.8 430.4,576.2 432.6,557.6 436.0,539.2 440.2,521.0 445.2,503.0 450.8,485.2 457.0,467.7 464.0,450.4 471.8,433.5 480.7,417.1 490.4,401.3 500.8,386.0 511.9,371.2 523.5,356.9 535.7,343.0 548.5,329.8 562.1,317.4 576.3,306.0 591.1,295.5 606.5,285.9 622.2,277.1 638.1,268.9 654.4,261.3 670.9,254.4 687.7,248.3 704.8,243.4 722.1,239.7 739.6,237.3 757.1,236.1 774.6,235.8 792.0,236.2 809.4,237.3 826.7,239.2 843.9,242.0 860.8,245.9Z"/><path d="M872.6,260.9 888.3,266.9 903.5,274.1 918.3,282.3 932.5,291.2 946.5,300.6 960.1,310.4 973.6,320.5 986.6,331.4 998.9,343.1 1010.4,355.8 1020.8,369.4 1030.2,383.9 1038.9,398.8 1047.0,414.1 1054.7,429.6 1062.0,445.3 1068.7,461.4 1074.5,478.0 1079.2,495.0 1082.6,512.4 1085.0,530.1 1086.4,547.9 1087.1,565.7 1087.1,583.6 1086.2,601.5 1084.4,619.4 1081.4,637.1 1077.4,654.6 1072.4,671.9 1066.7,688.9 1060.7,705.8 1054.3,722.5 1047.4,739.2 1039.9,755.5 1031.4,771.5 1021.7,786.7 1010.9,801.1 999.3,814.6 986.9,827.5 974.1,839.9 961.0,851.8 947.5,863.2 933.5,874.0 918.9,883.8 903.7,892.6 888.0,900.2 872.0,906.9 855.8,912.8 839.4,917.9 822.8,922.3 806.1,925.8 789.3,928.2 772.4,929.3 755.5,929.2 738.8,928.2 722.2,926.5 705.6,924.4 689.1,922.0 672.6,919.1 656.2,915.4 640.1,910.6 624.5,904.4 609.4,896.9 594.9,888.2 580.9,878.8 567.3,868.7 554.1,858.1 541.3,847.0 529.2,835.0 517.7,822.3 507.2,808.7 497.5,794.4 488.6,779.6 480.2,764.5 472.4,748.9 465.2,733.1 458.8,716.7 453.6,699.9 449.6,682.7 446.8,665.1 444.8,647.5 443.5,629.7 442.6,612.0 442.1,594.2 442.0,576.3 442.9,558.3 444.9,540.4 448.2,522.6 452.9,505.1 458.6,487.9 465.2,471.1 472.4,454.5 480.2,438.3 488.8,422.5 498.1,407.2 508.4,392.5 519.4,378.5 531.1,365.1 543.3,352.3 555.8,339.8 568.6,327.7 581.9,316.2 595.8,305.3 610.3,295.6 625.5,287.0 641.1,279.5 657.0,272.9 673.1,267.0 689.3,261.4 705.6,256.1 722.2,251.5 738.9,247.9 755.9,245.5 772.9,244.5 789.9,244.8 806.8,246.3 823.5,248.7 840.1,251.9 856.5,255.9Z"/><path d="M866.8,273.5 882.1,278.9 897.0,285.2 911.5,292.4 925.7,300.3 939.5,308.9 952.9,318.2 965.7,328.4 977.8,339.5 989.2,351.4 999.8,364.0 1009.7,377.3 1019.0,391.0 1027.9,405.0 1036.4,419.3 1044.4,434.0 1051.6,449.2 1058.0,464.9 1063.2,481.1 1067.3,497.7 1070.3,514.6 1072.4,531.7 1073.7,548.9 1074.2,566.1 1074.0,583.4 1072.9,600.6 1071.0,617.8 1068.2,634.9 1064.6,651.9 1060.3,668.6 1055.3,685.2 1049.7,701.6 1043.3,717.8 1036.2,733.5 1028.0,748.8 1018.9,763.6 1009.0,777.7 998.5,791.2 987.5,804.3 976.0,817.0 964.3,829.4 952.1,841.4 939.3,852.7 925.9,863.3 911.9,872.8 897.3,881.4 882.3,889.0 866.9,895.6 851.3,901.5 835.4,906.5 819.4,910.6 803.2,913.8 787.0,916.1 770.7,917.4 754.4,917.9 738.1,917.7 721.9,916.8 705.7,915.2 689.6,912.8 673.8,909.3 658.2,904.7 643.1,898.9 628.3,892.0 614.1,884.3 600.2,875.9 586.6,867.0 573.4,857.6 560.5,847.7 548.1,837.0 536.4,825.5 525.4,813.3 515.2,800.2 505.8,786.5 497.1,772.3 489.1,757.7 481.8,742.6 475.4,727.0 469.8,711.1 465.1,694.9 461.2,678.4 458.0,661.7 455.3,644.9 453.2,627.9 451.6,610.9 450.9,593.6 451.1,576.3 452.5,559.0 455.2,541.8 458.9,524.7 463.5,507.9 468.8,491.4 474.7,475.0 481.2,458.9 488.4,443.0 496.3,427.5 505.1,412.5 514.8,398.1 525.2,384.3 536.3,371.1 547.9,358.4 560.2,346.4 573.0,335.1 586.4,324.6 600.3,315.0 614.7,306.3 629.4,298.4 644.4,291.1 659.5,284.3 674.9,278.0 690.4,272.2 706.2,267.2 722.2,263.3 738.4,260.5 754.8,258.9 771.1,258.6 787.3,259.2 803.5,260.6 819.6,262.7 835.5,265.5 851.3,269.0Z" stroke-opacity="0.8"/><path d="M861.6,284.4 876.3,289.8 890.7,295.8 904.8,302.6 918.5,310.0 931.8,318.3 944.6,327.6 956.6,337.8 967.9,348.8 978.6,360.5 988.7,372.7 998.5,385.2 1007.9,398.1 1016.8,411.3 1025.2,425.0 1032.7,439.2 1039.3,454.1 1044.9,469.4 1049.6,485.1 1053.5,501.0 1056.8,517.1 1059.5,533.4 1061.3,549.9 1062.3,566.5 1062.2,583.2 1061.2,599.8 1059.2,616.5 1056.5,633.0 1053.1,649.3 1049.0,665.6 1044.3,681.7 1038.7,697.5 1032.2,712.9 1024.6,727.8 1016.2,742.1 1007.1,756.0 997.5,769.5 987.6,782.7 977.3,795.6 966.7,808.1 955.4,820.2 943.5,831.5 931.0,842.1 917.9,851.8 904.3,860.8 890.3,869.0 876.1,876.6 861.5,883.6 846.6,889.7 831.4,894.8 815.9,898.8 800.3,901.8 784.6,903.9 768.9,905.3 753.2,906.0 737.5,906.1 721.8,905.4 706.2,903.6 690.8,900.8 675.7,896.7 660.9,891.7 646.5,885.8 632.4,879.3 618.4,872.3 604.8,864.9 591.4,856.8 578.4,848.0 566.0,838.3 554.3,827.8 543.2,816.5 532.8,804.5 522.9,792.0 513.5,779.0 504.9,765.5 497.0,751.5 490.0,736.9 484.0,721.8 478.9,706.3 474.6,690.6 470.8,674.7 467.5,658.6 464.8,642.5 462.7,626.1 461.6,609.6 461.5,593.0 462.5,576.4 464.4,559.9 467.2,543.4 470.5,527.1 474.4,510.9 478.8,494.8 483.9,478.8 489.9,463.1 496.7,447.8 504.5,432.9 513.1,418.6 522.3,404.6 532.2,391.1 542.6,378.1 553.7,365.7 565.5,354.1 578.0,343.3 591.1,333.5 604.7,324.5 618.6,316.2 632.7,308.4 647.1,301.0 661.6,294.2 676.4,288.1 691.5,282.8 706.8,278.7 722.4,275.6 738.0,273.6 753.6,272.3 769.3,271.7 784.9,271.7 800.5,272.4 816.1,273.9 831.5,276.4 846.7,279.9Z" stroke-opacity="0.6"/><path d="M855.9,297.2 869.8,302.6 883.5,308.4 897.0,314.7 910.2,321.8 923.0,329.7 935.2,338.4 946.9,348.0 958.0,358.2 968.7,369.0 978.9,380.2 988.6,392.0 997.7,404.3 1006.1,417.3 1013.5,430.9 1020.2,444.9 1026.0,459.4 1031.3,474.1 1036.0,489.0 1040.3,504.1 1043.9,519.5 1046.5,535.1 1048.2,551.0 1048.7,567.0 1048.2,583.0 1046.9,598.9 1045.1,614.8 1042.8,630.7 1040.0,646.5 1036.6,662.2 1032.4,677.8 1027.3,693.1 1021.3,708.1 1014.4,722.7 1006.8,737.0 998.6,750.9 989.9,764.4 980.4,777.4 970.3,789.8 959.3,801.4 947.7,812.3 935.5,822.3 922.8,831.6 909.9,840.5 896.8,848.9 883.4,856.8 869.8,864.1 855.7,870.5 841.4,876.0 826.7,880.4 811.9,883.8 797.0,886.5 782.1,888.6 767.1,890.2 752.1,891.4 737.1,891.8 722.0,891.4 707.1,889.9 692.3,887.5 677.6,884.2 663.2,880.2 648.9,875.4 634.9,870.0 621.1,863.6 607.9,856.4 595.2,848.0 583.2,838.7 571.8,828.6 561.0,818.0 550.5,806.9 540.4,795.5 530.6,783.7 521.5,771.4 513.0,758.5 505.4,745.0 498.8,730.9 493.0,716.3 488.0,701.5 483.5,686.5 479.5,671.2 476.1,655.8 473.5,640.2 471.9,624.4 471.1,608.4 471.3,592.4 472.3,576.5 473.9,560.5 476.1,544.6 479.1,528.8 482.9,513.1 487.7,497.8 493.5,482.7 500.2,468.1 507.7,454.0 515.7,440.2 524.0,426.6 532.7,413.3 541.8,400.2 551.4,387.6 561.7,375.5 572.7,364.1 584.4,353.4 596.6,343.5 609.2,334.1 622.2,325.3 635.5,317.0 649.1,309.5 663.2,302.7 677.6,297.0 692.3,292.2 707.2,288.4 722.2,285.4 737.3,283.0 752.4,281.4 767.6,280.5 782.8,280.5 797.9,281.8 812.8,284.2 827.4,287.8 841.8,292.2Z" stroke-opacity="0.38"/></g>
<g fill="none" stroke="#e2182e" stroke-width="4.1" filter="url(#sb1)"><path d="M919.6,161.8 940.4,169.2 961.1,177.3 981.3,186.4 1001.0,196.7 1020.0,208.5 1038.0,221.9 1055.0,236.5 1071.1,252.2 1086.5,268.6 1101.3,285.7 1115.3,303.3 1128.6,321.7 1140.9,340.8 1152.1,360.8 1162.1,381.4 1171.1,402.6 1179.1,424.3 1186.3,446.3 1192.5,468.7 1197.6,491.6 1201.2,514.8 1203.2,538.3 1203.5,561.9 1202.4,585.5 1200.3,609.1 1197.4,632.5 1194.0,655.8 1189.9,679.1 1185.0,702.3 1178.8,725.2 1171.2,747.8 1162.2,769.8 1151.8,791.2 1140.4,812.0 1128.2,832.3 1115.2,852.1 1101.5,871.3 1086.8,889.8 1071.1,907.3 1054.5,923.9 1037.0,939.4 1018.9,954.1 1000.2,968.0 981.1,981.1 961.4,993.4 941.1,1004.5 920.2,1014.1 898.7,1021.9 876.8,1028.1 854.7,1032.7 832.5,1036.2 810.3,1039.0 788.1,1041.1 765.8,1042.5 743.5,1042.8 721.3,1041.9 699.2,1039.4 677.4,1035.3 656.0,1029.9 634.8,1023.4 614.0,1015.8 593.6,1007.3 573.6,997.7 554.2,986.8 535.6,974.6 517.8,961.2 500.8,946.8 484.4,931.6 468.5,915.8 453.1,899.4 438.4,882.3 424.7,864.2 412.2,845.1 401.2,825.0 391.7,804.0 383.4,782.4 376.2,760.4 369.6,738.2 363.7,715.8 358.5,693.1 354.3,670.1 351.4,646.7 349.9,623.2 349.9,599.5 351.0,575.8 353.3,552.2 356.6,528.6 361.0,505.2 366.6,482.0 373.7,459.1 382.2,436.8 392.1,415.1 403.0,394.0 414.6,373.4 426.8,353.1 439.6,333.2 453.1,313.9 467.7,295.3 483.4,277.8 500.3,261.5 518.1,246.5 536.7,232.6 555.8,219.6 575.2,207.3 594.9,195.7 615.0,184.8 635.6,174.9 656.6,166.2 678.1,158.9 699.9,152.8 721.9,147.9 744.0,144.0 766.3,141.2 788.7,139.5 811.1,139.4 833.4,141.0 855.4,144.2 877.2,149.0 898.5,155.0Z"/><path d="M914.6,172.1 935.1,178.9 955.1,187.0 974.5,196.6 993.2,207.5 1011.2,219.8 1028.3,233.1 1044.8,247.3 1060.7,262.2 1075.9,277.8 1090.5,294.1 1104.2,311.2 1117.0,329.1 1128.7,347.9 1139.5,367.2 1149.4,387.2 1158.6,407.6 1166.8,428.4 1174.1,449.8 1180.2,471.6 1184.9,493.9 1188.2,516.5 1190.2,539.3 1191.1,562.3 1191.0,585.3 1190.1,608.3 1188.2,631.4 1185.3,654.3 1181.1,677.2 1175.4,699.7 1168.3,721.9 1159.9,743.5 1150.4,764.7 1140.1,785.3 1128.9,805.5 1117.0,825.2 1104.2,844.3 1090.5,862.7 1075.9,880.3 1060.4,897.0 1044.2,913.0 1027.4,928.2 1010.1,942.7 992.2,956.5 973.6,969.3 954.4,980.9 934.5,991.2 914.1,1000.1 893.3,1007.6 872.2,1014.1 851.0,1019.6 829.6,1024.3 808.0,1028.0 786.4,1030.6 764.6,1031.9 742.9,1031.7 721.3,1030.0 699.9,1027.0 678.7,1022.8 657.8,1017.6 637.2,1011.4 616.9,1004.2 597.0,996.0 577.6,986.5 558.8,975.8 540.6,964.0 523.1,951.3 506.0,937.8 489.5,923.6 473.7,908.5 458.6,892.4 444.7,875.3 432.0,857.1 420.5,838.0 410.2,818.1 400.9,797.7 392.4,776.9 384.8,755.8 378.0,734.3 372.3,712.4 367.8,690.1 364.6,667.5 362.7,644.7 362.0,621.8 362.3,598.9 363.6,576.0 365.7,553.1 368.9,530.3 373.3,507.7 378.9,485.3 385.7,463.2 393.6,441.5 402.3,420.1 411.8,399.1 422.1,378.4 433.3,358.2 445.6,338.6 459.0,319.8 473.7,302.0 489.4,285.3 506.0,269.6 523.2,254.8 540.9,240.7 559.2,227.4 577.9,215.0 597.2,203.5 617.1,193.2 637.4,184.2 658.2,176.4 679.2,169.8 700.5,164.1 721.9,159.4 743.5,155.8 765.2,153.4 786.9,152.4 808.6,152.8 830.2,154.6 851.6,157.6 872.8,161.5 893.8,166.4Z"/><path d="M909.3,183.3 929.1,190.3 948.5,198.2 967.5,207.3 985.9,217.6 1003.5,229.3 1020.2,242.2 1036.2,256.0 1051.6,270.6 1066.5,285.7 1081.1,301.2 1095.0,317.4 1108.2,334.4 1120.2,352.4 1130.8,371.4 1139.9,391.2 1147.7,411.7 1154.5,432.6 1160.5,453.7 1165.8,475.0 1170.2,496.6 1173.6,518.5 1175.7,540.6 1176.6,562.8 1176.3,585.1 1174.9,607.4 1172.8,629.6 1169.9,651.8 1166.1,673.9 1161.1,695.8 1154.7,717.4 1147.0,738.6 1137.9,759.2 1127.8,779.2 1117.1,798.8 1105.8,818.2 1094.0,837.2 1081.5,855.8 1068.0,873.8 1053.5,890.7 1037.7,906.5 1021.0,921.1 1003.4,934.5 985.3,947.0 966.8,958.7 948.0,969.6 928.6,979.6 908.9,988.4 888.7,996.0 868.2,1002.3 847.5,1007.4 826.6,1011.6 805.7,1015.0 784.6,1017.6 763.5,1019.2 742.3,1019.5 721.3,1018.1 700.4,1015.1 679.9,1010.5 659.8,1004.8 639.9,998.3 620.3,991.2 600.9,983.5 581.7,974.9 563.1,965.2 545.2,954.1 528.1,941.7 511.9,928.0 496.6,913.3 481.9,897.9 467.9,881.9 454.6,865.2 442.1,847.8 430.6,829.6 420.3,810.6 411.0,791.0 402.6,770.9 395.0,750.5 388.0,729.8 381.6,708.7 376.2,687.3 372.2,665.4 369.8,643.2 369.0,620.8 369.7,598.4 371.6,576.0 374.3,553.7 377.6,531.4 381.7,509.3 386.7,487.3 392.9,465.6 400.4,444.4 409.3,423.6 419.4,403.5 430.5,383.9 442.2,364.8 454.7,346.3 468.0,328.4 482.2,311.2 497.4,295.0 513.4,279.8 530.1,265.6 547.4,252.1 564.9,239.2 582.9,226.7 601.2,214.9 620.1,204.0 639.6,194.4 659.6,186.3 680.2,179.9 701.0,175.0 722.0,171.3 743.0,168.4 764.0,166.2 785.1,164.9 806.3,164.6 827.3,165.6 848.2,168.1 868.9,172.0 889.3,177.2Z"/><path d="M903.6,195.8 922.7,202.7 941.6,210.3 960.1,218.8 978.1,228.3 995.5,239.1 1012.2,251.1 1028.1,264.2 1043.2,278.3 1057.5,293.2 1071.2,308.8 1084.1,325.1 1096.2,342.1 1107.3,359.8 1117.5,378.2 1126.8,397.2 1135.1,416.7 1142.6,436.5 1149.3,456.8 1155.1,477.4 1159.7,498.4 1163.0,519.8 1164.8,541.4 1165.2,563.1 1164.4,584.9 1162.6,606.6 1160.0,628.1 1156.6,649.6 1152.6,671.0 1147.7,692.2 1141.7,713.2 1134.6,733.9 1126.3,754.1 1117.0,773.8 1106.7,793.0 1095.5,811.7 1083.5,829.9 1070.7,847.4 1057.0,864.1 1042.4,880.0 1027.0,895.1 1011.0,909.4 994.4,922.9 977.4,935.7 959.9,947.8 941.8,959.0 923.2,969.2 904.1,978.1 884.4,985.5 864.4,991.5 844.1,996.2 823.7,999.8 803.3,1002.6 782.9,1004.5 762.4,1005.6 741.9,1005.7 721.4,1004.6 701.1,1002.3 681.1,998.8 661.2,994.1 641.7,988.2 622.5,981.4 603.7,973.5 585.4,964.4 567.7,954.2 550.6,942.8 534.3,930.4 518.7,917.1 503.6,903.1 489.1,888.5 475.1,873.3 461.8,857.4 449.3,840.7 437.9,823.1 427.8,804.7 418.9,785.5 411.1,765.8 404.2,745.6 398.2,725.2 392.9,704.6 388.4,683.6 384.9,662.5 382.4,641.0 381.1,619.4 380.9,597.7 381.7,576.0 383.6,554.3 386.4,532.6 390.4,511.1 395.6,489.7 402.1,468.8 409.9,448.3 418.8,428.3 428.6,408.7 439.2,389.7 450.3,371.0 462.1,352.7 474.7,334.9 488.1,317.9 502.6,301.7 518.0,286.6 534.2,272.6 551.2,259.6 568.6,247.4 586.5,236.1 604.8,225.5 623.5,215.9 642.6,207.2 662.0,199.6 681.8,193.0 701.8,187.5 722.0,183.0 742.4,179.4 762.9,176.9 783.4,175.5 804.0,175.6 824.4,177.1 844.6,180.1 864.6,184.4 884.2,189.7Z"/><path d="M898.2,207.3 916.8,213.7 935.1,221.1 953.1,229.5 970.6,238.7 987.7,248.9 1004.3,260.0 1020.1,272.2 1035.2,285.5 1049.2,300.0 1062.2,315.5 1074.2,331.9 1085.4,348.9 1095.8,366.4 1105.6,384.3 1114.7,402.6 1123.1,421.4 1130.5,440.6 1136.8,460.3 1141.8,480.5 1145.7,501.0 1148.5,521.8 1150.2,542.7 1151.0,563.6 1150.8,584.7 1149.7,605.7 1147.5,626.7 1144.4,647.6 1140.3,668.3 1135.4,688.9 1129.6,709.3 1123.0,729.5 1115.5,749.4 1106.9,768.8 1097.0,787.7 1085.9,805.8 1073.7,823.0 1060.5,839.5 1046.7,855.2 1032.3,870.3 1017.4,884.9 1002.1,898.9 986.2,912.3 969.7,924.8 952.7,936.4 935.0,947.0 916.9,956.5 898.3,965.0 879.3,972.4 860.1,978.8 840.6,984.1 820.9,988.3 801.1,991.3 781.1,993.1 761.2,993.8 741.3,993.7 721.4,992.7 701.6,990.8 682.0,987.8 662.6,983.6 643.5,977.9 624.9,970.8 607.0,962.3 589.6,952.6 572.9,942.0 556.6,930.7 540.8,918.8 525.4,906.2 510.6,893.0 496.4,878.9 482.9,864.1 470.2,848.5 458.3,832.2 447.2,815.3 437.0,797.6 427.7,779.4 419.5,760.6 412.4,741.2 406.4,721.4 401.5,701.1 397.6,680.7 394.5,660.0 392.2,639.2 390.6,618.3 390.0,597.2 390.6,576.0 392.5,554.9 395.8,533.8 400.4,513.1 406.3,492.6 413.1,472.5 420.7,452.7 429.0,433.2 438.1,414.1 447.9,395.4 458.5,377.2 470.0,359.5 482.3,342.4 495.4,325.9 509.2,310.0 523.8,295.0 539.2,280.7 555.3,267.5 572.2,255.5 589.8,244.6 607.8,234.8 626.3,226.0 645.0,218.0 663.9,210.7 683.0,204.2 702.4,198.5 722.0,194.0 741.8,190.8 761.7,188.9 781.6,188.4 801.5,189.2 821.2,191.0 840.7,193.7 860.1,197.3 879.3,201.8Z"/><path d="M893.3,217.5 911.4,223.7 929.2,230.9 946.5,239.3 963.2,248.9 979.2,259.5 994.7,271.1 1009.5,283.5 1023.8,296.6 1037.5,310.3 1050.5,324.9 1062.6,340.2 1073.9,356.3 1084.3,373.0 1093.9,390.2 1102.9,407.9 1111.2,426.0 1118.7,444.5 1125.4,463.5 1130.9,483.0 1135.0,502.9 1137.7,523.1 1139.1,543.5 1139.5,564.0 1138.9,584.4 1137.6,604.9 1135.4,625.3 1132.5,645.6 1128.4,665.7 1123.3,685.7 1117.1,705.3 1109.9,724.5 1101.8,743.4 1093.0,761.9 1083.5,780.0 1073.1,797.6 1061.9,814.7 1049.7,831.0 1036.7,846.7 1023.0,861.6 1008.7,875.8 993.9,889.5 978.6,902.7 962.8,915.2 946.4,926.9 929.4,937.5 911.7,946.8 893.5,954.7 874.9,961.3 856.0,966.9 837.0,971.5 817.9,975.3 798.7,978.3 779.4,980.2 760.1,981.1 740.8,980.8 721.6,979.3 702.6,976.8 683.7,973.4 665.0,969.1 646.5,963.9 628.4,957.7 610.7,950.3 593.5,941.7 576.9,931.9 560.9,921.1 545.5,909.6 530.4,897.5 515.9,884.8 501.8,871.3 488.5,857.1 476.1,841.9 464.8,825.7 454.6,808.7 445.5,791.1 437.3,773.0 429.9,754.5 423.2,735.7 417.4,716.5 412.4,697.1 408.4,677.3 405.5,657.3 403.5,637.2 402.4,616.9 402.0,596.6 402.5,576.1 403.9,555.7 406.4,535.3 410.1,515.0 415.1,495.0 421.4,475.3 428.6,456.0 436.7,437.0 445.4,418.4 454.8,400.1 465.0,382.2 476.1,364.8 488.2,348.3 501.3,332.5 515.4,317.8 530.2,303.9 545.5,290.8 561.4,278.4 577.7,266.8 594.5,256.0 611.7,246.1 629.4,237.2 647.5,229.4 665.8,222.4 684.4,216.2 703.2,210.8 722.1,206.2 741.2,202.5 760.5,200.0 779.9,199.0 799.2,199.3 818.4,201.0 837.4,203.9 856.2,207.7 874.9,212.2Z"/><path d="M887.6,229.7 905.5,234.9 922.9,241.4 939.8,249.3 955.8,258.9 971.1,269.6 985.8,281.3 999.9,293.5 1013.8,306.1 1027.3,319.1 1040.3,332.7 1052.6,347.2 1063.8,362.5 1073.9,378.8 1083.1,395.6 1091.6,412.9 1099.4,430.6 1106.5,448.6 1112.7,467.1 1117.8,486.0 1121.4,505.4 1123.6,525.0 1124.7,544.7 1125.0,564.5 1124.8,584.3 1124.3,604.0 1123.3,623.9 1121.4,643.7 1118.2,663.5 1113.4,683.0 1107.1,702.0 1099.5,720.6 1091.0,738.6 1082.0,756.4 1072.5,773.8 1062.4,790.9 1051.6,807.5 1039.8,823.4 1027.1,838.4 1013.6,852.7 999.5,866.2 985.0,879.2 970.1,891.8 954.8,903.8 938.9,914.9 922.3,924.9 905.1,933.4 887.4,940.6 869.4,946.6 851.3,952.0 833.1,956.9 814.8,961.5 796.3,965.7 777.7,968.8 758.9,970.6 740.1,970.7 721.4,969.2 702.9,966.3 684.6,962.5 666.6,957.8 648.7,952.5 631.1,946.4 614.0,939.2 597.3,930.8 581.3,921.1 565.9,910.6 551.0,899.3 536.4,887.6 522.2,875.4 508.4,862.5 495.5,848.7 483.6,833.8 473.0,817.9 463.6,801.1 455.3,783.8 447.5,766.2 440.2,748.4 433.1,730.5 426.6,712.3 420.9,693.7 416.5,674.6 413.5,655.2 411.9,635.5 411.5,615.8 411.9,596.0 412.9,576.2 414.7,556.5 417.4,536.8 421.3,517.2 426.4,498.0 432.6,479.1 439.7,460.5 447.4,442.2 455.4,424.0 463.9,406.0 473.2,388.3 483.4,371.2 495.0,355.0 507.8,339.8 521.7,325.7 536.3,312.5 551.2,299.9 566.4,287.7 581.9,275.8 597.8,264.6 614.2,254.2 631.3,245.1 648.9,237.4 666.9,230.9 685.2,225.5 703.6,220.9 722.1,217.0 740.7,214.0 759.4,212.2 778.1,211.8 796.7,212.7 815.2,214.9 833.5,218.0 851.6,221.5 869.6,225.4Z"/><path d="M882.6,240.2 899.5,246.4 916.2,253.0 932.6,260.3 948.7,268.6 964.0,278.2 978.5,289.2 992.0,301.4 1004.9,314.4 1017.2,327.8 1029.3,341.4 1041.1,355.3 1052.5,369.7 1063.0,384.9 1072.3,401.0 1080.3,417.9 1087.0,435.4 1092.9,453.3 1098.1,471.4 1102.8,489.6 1107.0,508.1 1110.2,526.8 1112.2,545.8 1112.7,564.9 1112.0,584.0 1110.3,603.1 1108.0,622.1 1105.4,641.1 1102.4,660.1 1098.7,679.0 1093.9,697.7 1087.7,716.1 1080.1,733.9 1071.3,751.0 1061.6,767.7 1051.5,784.0 1041.1,800.2 1030.3,816.1 1018.9,831.5 1006.4,846.1 993.0,859.7 978.6,872.2 963.5,883.6 947.9,894.2 932.1,904.3 916.0,913.9 899.6,922.8 882.7,930.6 865.4,937.1 847.7,942.2 829.8,946.0 811.8,948.8 793.8,951.2 775.9,953.2 757.8,954.8 739.7,955.6 721.6,955.1 703.7,953.1 686.0,949.4 668.7,944.4 651.8,938.6 635.0,932.2 618.4,925.5 602.0,918.2 585.9,910.1 570.5,900.7 555.8,890.0 542.0,878.1 529.0,865.4 516.4,852.2 504.2,838.6 492.4,824.6 481.3,810.0 471.1,794.6 462.1,778.3 454.4,761.2 447.8,743.6 441.9,725.8 436.5,707.9 431.3,689.8 426.5,671.5 422.7,652.9 420.1,633.9 419.1,614.7 419.6,595.4 421.4,576.2 424.0,557.1 427.0,538.0 430.6,519.1 434.8,500.2 440.1,481.6 446.6,463.4 454.4,445.7 463.4,428.6 473.1,412.0 483.2,395.8 493.7,379.8 504.7,364.1 516.4,349.0 529.0,334.7 542.7,321.5 557.2,309.4 572.3,298.3 587.7,287.7 603.3,277.4 619.0,267.4 635.0,257.9 651.6,249.2 668.6,241.8 686.2,236.0 704.1,231.7 722.1,228.5 740.2,226.0 758.2,224.2 776.4,222.9 794.5,222.5 812.7,223.3 830.6,225.7 848.2,229.5 865.6,234.4Z"/><path d="M877.5,250.8 893.8,256.8 909.8,263.6 925.5,271.2 940.8,279.5 955.8,288.5 970.2,298.5 984.0,309.4 997.0,321.4 1009.1,334.3 1020.4,348.0 1031.1,362.2 1041.3,376.8 1050.9,391.9 1059.9,407.4 1068.1,423.4 1075.3,440.0 1081.4,457.1 1086.4,474.7 1090.4,492.5 1093.6,510.5 1096.1,528.7 1098.0,547.0 1099.0,565.4 1099.2,583.8 1098.3,602.3 1096.4,620.8 1093.5,639.1 1089.9,657.4 1085.6,675.5 1080.7,693.4 1074.9,711.2 1068.2,728.7 1060.4,745.7 1051.5,762.1 1041.6,777.9 1031.0,793.1 1019.7,807.7 1007.9,822.0 995.7,835.8 982.9,849.0 969.5,861.6 955.4,873.3 940.6,883.9 925.3,893.6 909.5,902.4 893.4,910.5 877.0,917.8 860.4,924.4 843.5,930.1 826.4,934.8 809.1,938.4 791.6,940.8 774.1,942.3 756.7,943.0 739.2,943.0 721.7,942.3 704.3,940.6 687.1,937.8 670.1,933.8 653.5,928.4 637.4,921.9 621.7,914.5 606.3,906.3 591.3,897.6 576.6,888.3 562.3,878.3 548.5,867.5 535.5,855.8 523.2,843.2 511.6,829.8 500.7,815.9 490.4,801.4 480.7,786.5 471.6,771.1 463.4,755.1 456.2,738.5 449.9,721.5 444.7,704.0 440.3,686.3 436.6,668.3 433.6,650.2 431.2,631.9 429.8,613.4 429.5,594.8 430.4,576.2 432.6,557.6 436.0,539.2 440.2,521.0 445.2,503.0 450.8,485.2 457.0,467.7 464.0,450.4 471.8,433.5 480.7,417.1 490.4,401.3 500.8,386.0 511.9,371.2 523.5,356.9 535.7,343.0 548.5,329.8 562.1,317.4 576.3,306.0 591.1,295.5 606.5,285.9 622.2,277.1 638.1,268.9 654.4,261.3 670.9,254.4 687.7,248.3 704.8,243.4 722.1,239.7 739.6,237.3 757.1,236.1 774.6,235.8 792.0,236.2 809.4,237.3 826.7,239.2 843.9,242.0 860.8,245.9Z"/><path d="M872.6,260.9 888.3,266.9 903.5,274.1 918.3,282.3 932.5,291.2 946.5,300.6 960.1,310.4 973.6,320.5 986.6,331.4 998.9,343.1 1010.4,355.8 1020.8,369.4 1030.2,383.9 1038.9,398.8 1047.0,414.1 1054.7,429.6 1062.0,445.3 1068.7,461.4 1074.5,478.0 1079.2,495.0 1082.6,512.4 1085.0,530.1 1086.4,547.9 1087.1,565.7 1087.1,583.6 1086.2,601.5 1084.4,619.4 1081.4,637.1 1077.4,654.6 1072.4,671.9 1066.7,688.9 1060.7,705.8 1054.3,722.5 1047.4,739.2 1039.9,755.5 1031.4,771.5 1021.7,786.7 1010.9,801.1 999.3,814.6 986.9,827.5 974.1,839.9 961.0,851.8 947.5,863.2 933.5,874.0 918.9,883.8 903.7,892.6 888.0,900.2 872.0,906.9 855.8,912.8 839.4,917.9 822.8,922.3 806.1,925.8 789.3,928.2 772.4,929.3 755.5,929.2 738.8,928.2 722.2,926.5 705.6,924.4 689.1,922.0 672.6,919.1 656.2,915.4 640.1,910.6 624.5,904.4 609.4,896.9 594.9,888.2 580.9,878.8 567.3,868.7 554.1,858.1 541.3,847.0 529.2,835.0 517.7,822.3 507.2,808.7 497.5,794.4 488.6,779.6 480.2,764.5 472.4,748.9 465.2,733.1 458.8,716.7 453.6,699.9 449.6,682.7 446.8,665.1 444.8,647.5 443.5,629.7 442.6,612.0 442.1,594.2 442.0,576.3 442.9,558.3 444.9,540.4 448.2,522.6 452.9,505.1 458.6,487.9 465.2,471.1 472.4,454.5 480.2,438.3 488.8,422.5 498.1,407.2 508.4,392.5 519.4,378.5 531.1,365.1 543.3,352.3 555.8,339.8 568.6,327.7 581.9,316.2 595.8,305.3 610.3,295.6 625.5,287.0 641.1,279.5 657.0,272.9 673.1,267.0 689.3,261.4 705.6,256.1 722.2,251.5 738.9,247.9 755.9,245.5 772.9,244.5 789.9,244.8 806.8,246.3 823.5,248.7 840.1,251.9 856.5,255.9Z"/><path d="M866.8,273.5 882.1,278.9 897.0,285.2 911.5,292.4 925.7,300.3 939.5,308.9 952.9,318.2 965.7,328.4 977.8,339.5 989.2,351.4 999.8,364.0 1009.7,377.3 1019.0,391.0 1027.9,405.0 1036.4,419.3 1044.4,434.0 1051.6,449.2 1058.0,464.9 1063.2,481.1 1067.3,497.7 1070.3,514.6 1072.4,531.7 1073.7,548.9 1074.2,566.1 1074.0,583.4 1072.9,600.6 1071.0,617.8 1068.2,634.9 1064.6,651.9 1060.3,668.6 1055.3,685.2 1049.7,701.6 1043.3,717.8 1036.2,733.5 1028.0,748.8 1018.9,763.6 1009.0,777.7 998.5,791.2 987.5,804.3 976.0,817.0 964.3,829.4 952.1,841.4 939.3,852.7 925.9,863.3 911.9,872.8 897.3,881.4 882.3,889.0 866.9,895.6 851.3,901.5 835.4,906.5 819.4,910.6 803.2,913.8 787.0,916.1 770.7,917.4 754.4,917.9 738.1,917.7 721.9,916.8 705.7,915.2 689.6,912.8 673.8,909.3 658.2,904.7 643.1,898.9 628.3,892.0 614.1,884.3 600.2,875.9 586.6,867.0 573.4,857.6 560.5,847.7 548.1,837.0 536.4,825.5 525.4,813.3 515.2,800.2 505.8,786.5 497.1,772.3 489.1,757.7 481.8,742.6 475.4,727.0 469.8,711.1 465.1,694.9 461.2,678.4 458.0,661.7 455.3,644.9 453.2,627.9 451.6,610.9 450.9,593.6 451.1,576.3 452.5,559.0 455.2,541.8 458.9,524.7 463.5,507.9 468.8,491.4 474.7,475.0 481.2,458.9 488.4,443.0 496.3,427.5 505.1,412.5 514.8,398.1 525.2,384.3 536.3,371.1 547.9,358.4 560.2,346.4 573.0,335.1 586.4,324.6 600.3,315.0 614.7,306.3 629.4,298.4 644.4,291.1 659.5,284.3 674.9,278.0 690.4,272.2 706.2,267.2 722.2,263.3 738.4,260.5 754.8,258.9 771.1,258.6 787.3,259.2 803.5,260.6 819.6,262.7 835.5,265.5 851.3,269.0Z" stroke-opacity="0.8"/><path d="M861.6,284.4 876.3,289.8 890.7,295.8 904.8,302.6 918.5,310.0 931.8,318.3 944.6,327.6 956.6,337.8 967.9,348.8 978.6,360.5 988.7,372.7 998.5,385.2 1007.9,398.1 1016.8,411.3 1025.2,425.0 1032.7,439.2 1039.3,454.1 1044.9,469.4 1049.6,485.1 1053.5,501.0 1056.8,517.1 1059.5,533.4 1061.3,549.9 1062.3,566.5 1062.2,583.2 1061.2,599.8 1059.2,616.5 1056.5,633.0 1053.1,649.3 1049.0,665.6 1044.3,681.7 1038.7,697.5 1032.2,712.9 1024.6,727.8 1016.2,742.1 1007.1,756.0 997.5,769.5 987.6,782.7 977.3,795.6 966.7,808.1 955.4,820.2 943.5,831.5 931.0,842.1 917.9,851.8 904.3,860.8 890.3,869.0 876.1,876.6 861.5,883.6 846.6,889.7 831.4,894.8 815.9,898.8 800.3,901.8 784.6,903.9 768.9,905.3 753.2,906.0 737.5,906.1 721.8,905.4 706.2,903.6 690.8,900.8 675.7,896.7 660.9,891.7 646.5,885.8 632.4,879.3 618.4,872.3 604.8,864.9 591.4,856.8 578.4,848.0 566.0,838.3 554.3,827.8 543.2,816.5 532.8,804.5 522.9,792.0 513.5,779.0 504.9,765.5 497.0,751.5 490.0,736.9 484.0,721.8 478.9,706.3 474.6,690.6 470.8,674.7 467.5,658.6 464.8,642.5 462.7,626.1 461.6,609.6 461.5,593.0 462.5,576.4 464.4,559.9 467.2,543.4 470.5,527.1 474.4,510.9 478.8,494.8 483.9,478.8 489.9,463.1 496.7,447.8 504.5,432.9 513.1,418.6 522.3,404.6 532.2,391.1 542.6,378.1 553.7,365.7 565.5,354.1 578.0,343.3 591.1,333.5 604.7,324.5 618.6,316.2 632.7,308.4 647.1,301.0 661.6,294.2 676.4,288.1 691.5,282.8 706.8,278.7 722.4,275.6 738.0,273.6 753.6,272.3 769.3,271.7 784.9,271.7 800.5,272.4 816.1,273.9 831.5,276.4 846.7,279.9Z" stroke-opacity="0.6"/><path d="M855.9,297.2 869.8,302.6 883.5,308.4 897.0,314.7 910.2,321.8 923.0,329.7 935.2,338.4 946.9,348.0 958.0,358.2 968.7,369.0 978.9,380.2 988.6,392.0 997.7,404.3 1006.1,417.3 1013.5,430.9 1020.2,444.9 1026.0,459.4 1031.3,474.1 1036.0,489.0 1040.3,504.1 1043.9,519.5 1046.5,535.1 1048.2,551.0 1048.7,567.0 1048.2,583.0 1046.9,598.9 1045.1,614.8 1042.8,630.7 1040.0,646.5 1036.6,662.2 1032.4,677.8 1027.3,693.1 1021.3,708.1 1014.4,722.7 1006.8,737.0 998.6,750.9 989.9,764.4 980.4,777.4 970.3,789.8 959.3,801.4 947.7,812.3 935.5,822.3 922.8,831.6 909.9,840.5 896.8,848.9 883.4,856.8 869.8,864.1 855.7,870.5 841.4,876.0 826.7,880.4 811.9,883.8 797.0,886.5 782.1,888.6 767.1,890.2 752.1,891.4 737.1,891.8 722.0,891.4 707.1,889.9 692.3,887.5 677.6,884.2 663.2,880.2 648.9,875.4 634.9,870.0 621.1,863.6 607.9,856.4 595.2,848.0 583.2,838.7 571.8,828.6 561.0,818.0 550.5,806.9 540.4,795.5 530.6,783.7 521.5,771.4 513.0,758.5 505.4,745.0 498.8,730.9 493.0,716.3 488.0,701.5 483.5,686.5 479.5,671.2 476.1,655.8 473.5,640.2 471.9,624.4 471.1,608.4 471.3,592.4 472.3,576.5 473.9,560.5 476.1,544.6 479.1,528.8 482.9,513.1 487.7,497.8 493.5,482.7 500.2,468.1 507.7,454.0 515.7,440.2 524.0,426.6 532.7,413.3 541.8,400.2 551.4,387.6 561.7,375.5 572.7,364.1 584.4,353.4 596.6,343.5 609.2,334.1 622.2,325.3 635.5,317.0 649.1,309.5 663.2,302.7 677.6,297.0 692.3,292.2 707.2,288.4 722.2,285.4 737.3,283.0 752.4,281.4 767.6,280.5 782.8,280.5 797.9,281.8 812.8,284.2 827.4,287.8 841.8,292.2Z" stroke-opacity="0.38"/></g>
</g>
</g>
<path d="M835.3 184V262" stroke="#e2182e" stroke-width="2.2" fill="none" filter="url(#sb1)"/><path d="M834 134l5 9" stroke="#e2182e" stroke-width="3" fill="none" filter="url(#sb1)"/>
<ellipse cx="1082" cy="738" rx="26" ry="66" transform="rotate(28 1082 738)" fill="#c00018" opacity=".5" filter="url(#hb)"/>
<ellipse cx="1012" cy="838" rx="70" ry="20" transform="rotate(-38 1012 838)" fill="#c00018" opacity=".3" filter="url(#hb)"/>
<g>
<circle cx="950" cy="644" r="138" fill="none" stroke="#6a0a14" stroke-width="4" opacity=".7" filter="url(#gb)"/>
<g fill="none" stroke="url(#tg)" stroke-width="4.5" filter="url(#sb1)"><ellipse cx="906.0" cy="628.0" rx="4.5" ry="4.4"/><ellipse cx="908.8" cy="629.0" rx="12.5" ry="12.3"/><ellipse cx="911.5" cy="630.0" rx="20.5" ry="20.2"/><ellipse cx="914.2" cy="631.0" rx="28.5" ry="28.1"/><ellipse cx="917.0" cy="632.0" rx="36.5" ry="36.0"/><ellipse cx="919.8" cy="633.0" rx="44.5" ry="43.8"/><ellipse cx="922.5" cy="634.0" rx="52.5" ry="51.7"/><ellipse cx="925.2" cy="635.0" rx="60.5" ry="59.6"/><ellipse cx="928.0" cy="636.0" rx="68.5" ry="67.5"/><ellipse cx="930.8" cy="637.0" rx="76.5" ry="75.4"/><ellipse cx="933.5" cy="638.0" rx="84.5" ry="83.2"/><ellipse cx="936.2" cy="639.0" rx="92.5" ry="91.1"/><ellipse cx="939.0" cy="640.0" rx="100.5" ry="99.0"/><ellipse cx="941.8" cy="641.0" rx="108.5" ry="106.9"/><ellipse cx="944.5" cy="642.0" rx="116.5" ry="114.8"/><ellipse cx="947.2" cy="643.0" rx="124.5" ry="122.6"/><ellipse cx="950.0" cy="644.0" rx="132.5" ry="130.5"/></g>
<g mask="url(#redm)"><circle cx="935" cy="636" r="96" fill="#160204"/><circle cx="935" cy="636" r="96" fill="url(#sglow)"/><g fill="none" stroke="url(#rg)" stroke-width="4.9" filter="url(#sb1)"><ellipse cx="906.0" cy="628.0" rx="4.5" ry="4.4"/><ellipse cx="908.8" cy="629.0" rx="12.5" ry="12.3"/><ellipse cx="911.5" cy="630.0" rx="20.5" ry="20.2"/><ellipse cx="914.2" cy="631.0" rx="28.5" ry="28.1"/><ellipse cx="917.0" cy="632.0" rx="36.5" ry="36.0"/><ellipse cx="919.8" cy="633.0" rx="44.5" ry="43.8"/><ellipse cx="922.5" cy="634.0" rx="52.5" ry="51.7"/><ellipse cx="925.2" cy="635.0" rx="60.5" ry="59.6"/><ellipse cx="928.0" cy="636.0" rx="68.5" ry="67.5"/><ellipse cx="930.8" cy="637.0" rx="76.5" ry="75.4"/><ellipse cx="933.5" cy="638.0" rx="84.5" ry="83.2"/><ellipse cx="936.2" cy="639.0" rx="92.5" ry="91.1"/><ellipse cx="939.0" cy="640.0" rx="100.5" ry="99.0"/><ellipse cx="941.8" cy="641.0" rx="108.5" ry="106.9"/><ellipse cx="944.5" cy="642.0" rx="116.5" ry="114.8"/><ellipse cx="947.2" cy="643.0" rx="124.5" ry="122.6"/><ellipse cx="950.0" cy="644.0" rx="132.5" ry="130.5"/></g></g>
<path d="M918 541.5 A96.5 96.5 0 0 0 862 699.5 A107 107 0 0 1 918 541.5Z" fill="#fff" filter="url(#cb)"/>
<path d="M908 544 A96 96 0 0 0 848 672" fill="none" stroke="#fff" stroke-width="2.4" opacity=".9" filter="url(#cb)"/>
</g>
</svg>
<div id="ableton">
<svg width="700" height="366" viewBox="0 0 700 366" style="filter:blur(0.85px)" font-family="Liberation Sans, sans-serif">

<rect x="0.0" y="0.0" width="700.0" height="366.0" fill="#8b8b8b" />
<rect x="0.0" y="0.0" width="700.0" height="10.5" fill="#e6e6e6" />
<rect x="0" y="0" width="700" height="10.5" fill="url(#tbg)"/>
<defs><linearGradient id="tbg" x1="0" y1="0" x2="0" y2="1"><stop offset="0" stop-color="#f6f6f6"/><stop offset="1" stop-color="#dedede"/></linearGradient><linearGradient id="shg" x1="0" y1="0" x2="0" y2="1"><stop offset="0" stop-color="#000" stop-opacity=".0"/><stop offset="1" stop-color="#000" stop-opacity="0"/></linearGradient></defs>
<rect x="0.0" y="10.8" width="700.0" height="11.4" fill="#888888" />
<rect x="0.0" y="22.2" width="700.0" height="2.4" fill="#767676" />
<rect x="0.0" y="24.6" width="700.0" height="9.4" fill="#8d8d8d" />
<rect x="624.0" y="13.0" width="5.5" height="7.5" fill="#9a9a9a" />
<rect x="633.0" y="13.0" width="5.5" height="7.5" fill="#e8a020" />
<rect x="642.0" y="13.0" width="5.5" height="7.5" fill="#9a9a9a" />
<rect x="656.0" y="13.0" width="5.5" height="7.5" fill="#a8a8a8" />
<rect x="663.0" y="13.0" width="5.5" height="7.5" fill="#a8a8a8" />
<rect x="672.0" y="13.0" width="5.5" height="7.5" fill="#a0a0a0" />
<rect x="678.0" y="13.0" width="5.5" height="7.5" fill="#a0a0a0" />
<rect x="688.0" y="13.0" width="5.5" height="7.5" fill="#a4a4a4" />
<rect x="626.0" y="14.5" width="2.0" height="4.5" fill="#2a2a2a" />
<rect x="658.0" y="14.5" width="3.0" height="4.5" fill="#2a2a2a" />
<rect x="689.5" y="14.5" width="1.5" height="4.5" fill="#2a2a2a" />
<rect x="6.0" y="14.5" width="2.0" height="4.0" fill="#6e6e6e" />
<rect x="11.0" y="14.5" width="2.0" height="4.0" fill="#6e6e6e" />
<rect x="16.0" y="14.5" width="2.0" height="4.0" fill="#6e6e6e" />
<rect x="25.5" y="14.5" width="2.5" height="4.5" fill="#555" />
<rect x="28.0" y="14.5" width="3.0" height="4.5" fill="#2c2c2c" />
<rect x="0.0" y="34.0" width="24.0" height="220.0" fill="#8d8d8d" />
<rect x="23.3" y="34.0" width="1.7" height="220.0" fill="#707070" />
<rect x="25.0" y="34.0" width="102.0" height="220.0" fill="#898989" />
<rect x="0.0" y="212.0" width="17.0" height="7.0" fill="#b9c6d4" />
<rect x="25.0" y="85.5" width="12.0" height="8.5" fill="#c6c6ca" />
<rect x="19.0" y="90.0" width="3.5" height="158.0" fill="#808080" />
<rect x="29.0" y="38.0" width="9.0" height="3.0" fill="#2c2c2c" opacity=".55"/>
<rect x="31.0" y="45.0" width="4.0" height="3.0" fill="#2c2c2c" opacity=".55"/>
<rect x="29.0" y="49.5" width="8.0" height="3.0" fill="#2c2c2c" opacity=".55"/>
<rect x="31.0" y="56.0" width="4.0" height="3.0" fill="#2c2c2c" opacity=".55"/>
<rect x="31.0" y="64.0" width="2.0" height="3.0" fill="#2c2c2c" opacity=".55"/>
<rect x="31.0" y="47.5" width="6.0" height="1.5" fill="#e0e0e0" opacity=".8"/>
<rect x="27.5" y="143.0" width="8.5" height="5.0" fill="#2e2e2e" opacity=".8"/>
<rect x="27.5" y="151.0" width="8.5" height="5.0" fill="#2e2e2e" opacity=".8"/>
<rect x="27.5" y="159.0" width="8.5" height="5.0" fill="#2e2e2e" opacity=".8"/>
<text x="36.0" y="170.5" font-size="4.2" fill="#2a2a2a" opacity=".75">Drop Files and</text>
<rect x="0.0" y="254.0" width="127.0" height="6.0" fill="#808080" />
<rect x="127.0" y="26.0" width="4.5" height="234.0" fill="#666" />
<rect x="131.5" y="26.0" width="554.5" height="138.0" fill="#868686" />
<rect x="617.0" y="26.0" width="30.0" height="8.0" fill="#9cc6f4" />
<rect x="647.0" y="26.0" width="37.5" height="8.0" fill="#86a8ee" />
<text x="650.5" y="32.2" font-size="5.2" fill="#12204a" >Master</text>
<rect x="617.0" y="34.0" width="67.5" height="7.9" fill="#8d8d8d" />
<rect x="648.0" y="36.5" width="1.5" height="3.0" fill="#333" opacity=".8"/>
<rect x="668.0" y="36.2" width="2.0" height="3.6" fill="#1e1e1e" opacity=".85"/>
<rect x="617.0" y="41.9" width="67.5" height="7.9" fill="#878787" />
<rect x="617.0" y="49.2" width="67.5" height="0.5" fill="#6e6e6e" />
<rect x="648.0" y="44.4" width="1.5" height="3.0" fill="#333" opacity=".8"/>
<rect x="668.0" y="44.1" width="2.0" height="3.6" fill="#1e1e1e" opacity=".85"/>
<rect x="617.0" y="49.7" width="67.5" height="7.9" fill="#8d8d8d" />
<rect x="617.0" y="57.1" width="67.5" height="0.5" fill="#6e6e6e" />
<rect x="648.0" y="52.2" width="1.5" height="3.0" fill="#333" opacity=".8"/>
<rect x="668.0" y="51.9" width="2.0" height="3.6" fill="#1e1e1e" opacity=".85"/>
<rect x="617.0" y="57.5" width="67.5" height="7.9" fill="#878787" />
<rect x="648.0" y="60.0" width="1.5" height="3.0" fill="#333" opacity=".8"/>
<rect x="668.0" y="59.8" width="2.0" height="3.6" fill="#1e1e1e" opacity=".85"/>
<rect x="617.0" y="65.4" width="67.5" height="7.9" fill="#8d8d8d" />
<rect x="648.0" y="67.9" width="1.5" height="3.0" fill="#333" opacity=".8"/>
<rect x="668.0" y="67.6" width="2.0" height="3.6" fill="#1e1e1e" opacity=".85"/>
<rect x="617.0" y="73.2" width="67.5" height="7.9" fill="#878787" />
<rect x="617.0" y="80.6" width="67.5" height="0.5" fill="#6e6e6e" />
<rect x="648.0" y="75.8" width="1.5" height="3.0" fill="#333" opacity=".8"/>
<rect x="668.0" y="75.5" width="2.0" height="3.6" fill="#1e1e1e" opacity=".85"/>
<rect x="617.0" y="81.1" width="67.5" height="7.9" fill="#8d8d8d" />
<rect x="617.0" y="88.5" width="67.5" height="0.5" fill="#6e6e6e" />
<rect x="648.0" y="83.6" width="1.5" height="3.0" fill="#333" opacity=".8"/>
<rect x="668.0" y="83.3" width="2.0" height="3.6" fill="#1e1e1e" opacity=".85"/>
<rect x="617.0" y="89.0" width="67.5" height="7.9" fill="#b2b2b2" />
<rect x="648.0" y="91.5" width="1.5" height="3.0" fill="#333" opacity=".8"/>
<rect x="668.0" y="91.2" width="2.0" height="3.6" fill="#1e1e1e" opacity=".85"/>
<rect x="617.0" y="96.8" width="67.5" height="7.9" fill="#8d8d8d" />
<rect x="617.0" y="104.2" width="67.5" height="0.5" fill="#6e6e6e" />
<rect x="648.0" y="99.3" width="1.5" height="3.0" fill="#333" opacity=".8"/>
<rect x="668.0" y="99.0" width="2.0" height="3.6" fill="#1e1e1e" opacity=".85"/>
<rect x="617.0" y="104.6" width="67.5" height="7.9" fill="#878787" />
<rect x="648.0" y="107.1" width="1.5" height="3.0" fill="#333" opacity=".8"/>
<rect x="668.0" y="106.9" width="2.0" height="3.6" fill="#1e1e1e" opacity=".85"/>
<rect x="617.0" y="112.5" width="67.5" height="7.9" fill="#8d8d8d" />
<rect x="648.0" y="115.0" width="1.5" height="3.0" fill="#333" opacity=".8"/>
<rect x="668.0" y="114.7" width="2.0" height="3.6" fill="#1e1e1e" opacity=".85"/>
<rect x="617.0" y="120.4" width="67.5" height="7.9" fill="#878787" />
<rect x="617.0" y="127.8" width="67.5" height="0.5" fill="#6e6e6e" />
<rect x="648.0" y="122.9" width="1.5" height="3.0" fill="#333" opacity=".8"/>
<rect x="668.0" y="122.6" width="2.0" height="3.6" fill="#1e1e1e" opacity=".85"/>
<rect x="617.0" y="128.2" width="67.5" height="7.9" fill="#8d8d8d" />
<rect x="617.0" y="135.6" width="67.5" height="0.5" fill="#6e6e6e" />
<rect x="648.0" y="130.7" width="1.5" height="3.0" fill="#333" opacity=".8"/>
<rect x="668.0" y="130.4" width="2.0" height="3.6" fill="#1e1e1e" opacity=".85"/>
<rect x="617.0" y="136.0" width="67.5" height="7.9" fill="#878787" />
<rect x="648.0" y="138.5" width="1.5" height="3.0" fill="#333" opacity=".8"/>
<rect x="668.0" y="138.2" width="2.0" height="3.6" fill="#1e1e1e" opacity=".85"/>
<rect x="646.3" y="26.0" width="0.9" height="138.0" fill="#6c6c6c" />
<rect x="617.0" y="136.0" width="67.5" height="8.5" fill="#888" />
<rect x="648.0" y="138.5" width="3.0" height="3.5" fill="#555" />
<rect x="677.0" y="137.5" width="7.0" height="6.0" fill="#e0453a" />
<rect x="617.0" y="144.5" width="67.5" height="19.5" fill="#898989" />
<rect x="684.5" y="26.0" width="13.5" height="234.0" fill="#6f6f6f" />
<rect x="690.0" y="44.0" width="4.0" height="124.0" fill="#5a5a5a" />
<circle cx="692.0" cy="32.5" r="3" fill="#7a7a7a" stroke="#4a4a4a" stroke-width="1" />
<circle cx="692.0" cy="38.5" r="2.3" fill="#e6b030" stroke="#9a7a20" stroke-width="0.6" />
<rect x="689.0" y="215.0" width="6.0" height="5.5" fill="#e6b030" />
<rect x="689.0" y="223.0" width="6.0" height="5.5" fill="#e6b030" />
<rect x="689.0" y="231.0" width="6.0" height="5.5" fill="#d0a030" />
<rect x="689.0" y="243.0" width="6.0" height="5.5" fill="#3a3a3a" />
<rect x="689.0" y="251.0" width="6.0" height="5.5" fill="#3a2a2a" />
<rect x="698.0" y="10.0" width="2.0" height="356.0" fill="#7a7a7a" />
<rect x="131.5" y="164.0" width="554.5" height="96.0" fill="#8c8c8c" />
<rect x="133.0" y="164.0" width="40.5" height="23.0" fill="#919191" />
<rect x="133.0" y="188.5" width="40.5" height="27.0" fill="#919191" />
<rect x="133.0" y="217.5" width="40.5" height="42.5" fill="#919191" />
<rect x="174.5" y="164.0" width="37.5" height="23.0" fill="#a9a9a9" />
<rect x="174.5" y="188.5" width="37.5" height="27.0" fill="#a9a9a9" />
<rect x="174.5" y="217.5" width="37.5" height="42.5" fill="#a9a9a9" />
<rect x="213.5" y="164.0" width="40.5" height="23.0" fill="#919191" />
<rect x="213.5" y="188.5" width="40.5" height="27.0" fill="#919191" />
<rect x="213.5" y="217.5" width="40.5" height="42.5" fill="#919191" />
<rect x="563.0" y="164.0" width="41.0" height="23.0" fill="#919191" />
<rect x="563.0" y="188.5" width="41.0" height="27.0" fill="#919191" />
<rect x="563.0" y="217.5" width="41.0" height="42.5" fill="#919191" />
<rect x="605.0" y="164.0" width="41.0" height="23.0" fill="#919191" />
<rect x="605.0" y="188.5" width="41.0" height="27.0" fill="#919191" />
<rect x="605.0" y="217.5" width="41.0" height="42.5" fill="#919191" />
<rect x="647.0" y="164.0" width="37.5" height="23.0" fill="#8e8e8e" />
<rect x="647.0" y="188.5" width="37.5" height="27.0" fill="#8e8e8e" />
<rect x="647.0" y="217.5" width="37.5" height="42.5" fill="#8e8e8e" />
<rect x="131.6" y="164.0" width="1.2" height="96.0" fill="#6a6a6a" />
<rect x="173.4" y="164.0" width="1.2" height="96.0" fill="#6a6a6a" />
<rect x="212.2" y="164.0" width="1.2" height="96.0" fill="#6a6a6a" />
<rect x="253.9" y="164.0" width="1.2" height="96.0" fill="#6a6a6a" />
<rect x="561.4" y="164.0" width="1.2" height="96.0" fill="#6a6a6a" />
<rect x="603.9" y="164.0" width="1.2" height="96.0" fill="#6a6a6a" />
<rect x="645.9" y="164.0" width="1.2" height="96.0" fill="#6a6a6a" />
<rect x="132.0" y="187.2" width="122.5" height="1.1" fill="#6c6c6c" />
<rect x="132.0" y="215.8" width="122.5" height="1.5" fill="#666" />
<rect x="562.0" y="187.2" width="123.0" height="1.1" fill="#6c6c6c" />
<rect x="562.0" y="215.8" width="123.0" height="1.5" fill="#666" />
<rect x="134.0" y="179.5" width="38.0" height="4.5" fill="#b4b4b4" />
<rect x="134.0" y="170.5" width="14.0" height="4.0" fill="#2e2e2e" opacity=".7"/>
<rect x="135.0" y="180.3" width="11.0" height="2.9" fill="#333" opacity=".6"/>
<rect x="175.5" y="179.5" width="35.5" height="4.5" fill="#b4b4b4" />
<rect x="175.5" y="170.5" width="14.0" height="4.0" fill="#2e2e2e" opacity=".7"/>
<rect x="176.5" y="180.3" width="11.0" height="2.9" fill="#333" opacity=".6"/>
<rect x="215.0" y="179.5" width="37.0" height="4.5" fill="#b4b4b4" />
<rect x="215.0" y="170.5" width="14.0" height="4.0" fill="#2e2e2e" opacity=".7"/>
<rect x="216.0" y="180.3" width="11.0" height="2.9" fill="#333" opacity=".6"/>
<rect x="564.5" y="179.5" width="38.5" height="4.5" fill="#b4b4b4" />
<rect x="564.5" y="170.5" width="14.0" height="4.0" fill="#2e2e2e" opacity=".7"/>
<rect x="565.5" y="180.3" width="11.0" height="2.9" fill="#333" opacity=".6"/>
<rect x="606.5" y="179.5" width="38.5" height="4.5" fill="#b4b4b4" />
<rect x="606.5" y="170.5" width="14.0" height="4.0" fill="#2e2e2e" opacity=".7"/>
<rect x="607.5" y="180.3" width="11.0" height="2.9" fill="#333" opacity=".6"/>
<rect x="134.0" y="164.5" width="16.0" height="4.0" fill="#333" opacity=".6"/>
<rect x="176.0" y="164.5" width="20.0" height="4.0" fill="#333" opacity=".6"/>
<rect x="218.0" y="168.5" width="14.0" height="4.5" fill="#e8a030" />
<rect x="236.0" y="168.5" width="4.0" height="4.5" fill="#c05020" />
<text x="648.0" y="171.5" font-size="4" fill="#a03030" >Cue Out</text>
<rect x="648.0" y="173.0" width="36.0" height="5.5" fill="#c4c4c4" />
<rect x="648.0" y="173.5" width="3.0" height="4.5" fill="#5ad0c8" />
<text x="648.0" y="185.5" font-size="4" fill="#1a1a1a" >Master Out</text>
<rect x="648.0" y="187.0" width="34.0" height="5.0" fill="#b4b4b4" />
<circle cx="145.3" cy="200.6" r="5.2" fill="none" stroke="#333" stroke-width="1.1" />
<rect x="144.6" y="204.5" width="1.4" height="3.0" fill="#222" />
<circle cx="159.8" cy="207.6" r="5.2" fill="none" stroke="#333" stroke-width="1.1" />
<rect x="159.1" y="211.5" width="1.4" height="2.5" fill="#222" />
<text x="154.3" y="200.5" font-size="4" fill="#2a2a2a" opacity=".8">Sends</text>
<circle cx="185.6" cy="200.6" r="5.2" fill="none" stroke="#333" stroke-width="1.1" />
<rect x="184.9" y="204.5" width="1.4" height="3.0" fill="#222" />
<circle cx="200.1" cy="207.6" r="5.2" fill="none" stroke="#333" stroke-width="1.1" />
<rect x="199.4" y="211.5" width="1.4" height="2.5" fill="#222" />
<text x="194.6" y="200.5" font-size="4" fill="#2a2a2a" opacity=".8">Sends</text>
<circle cx="575.5" cy="200.6" r="5.2" fill="none" stroke="#333" stroke-width="1.1" />
<rect x="574.8" y="204.5" width="1.4" height="3.0" fill="#222" />
<circle cx="590.0" cy="207.6" r="5.2" fill="none" stroke="#333" stroke-width="1.1" />
<rect x="589.3" y="211.5" width="1.4" height="2.5" fill="#222" />
<text x="584.5" y="200.5" font-size="4" fill="#2a2a2a" opacity=".8">Sends</text>
<circle cx="616.5" cy="200.6" r="5.2" fill="none" stroke="#333" stroke-width="1.1" />
<rect x="615.8" y="204.5" width="1.4" height="3.0" fill="#222" />
<circle cx="631.0" cy="207.6" r="5.2" fill="none" stroke="#333" stroke-width="1.1" />
<rect x="630.3" y="211.5" width="1.4" height="2.5" fill="#222" />
<text x="625.5" y="200.5" font-size="4" fill="#2a2a2a" opacity=".8">Sends</text>
<rect x="653.0" y="199.0" width="9.0" height="4.5" fill="#f0a42c" />
<rect x="668.0" y="206.0" width="10.0" height="5.0" fill="#f0a42c" />
<text x="669.0" y="199.5" font-size="4" fill="#333" >Solo</text>
<circle cx="145.0" cy="225.5" r="6" fill="none" stroke="#3a3a3a" stroke-width="1.1" />
<rect x="144.3" y="217.8" width="1.4" height="6.2" fill="#222" />
<circle cx="185.6" cy="225.5" r="6" fill="none" stroke="#3a3a3a" stroke-width="1.1" />
<rect x="184.9" y="217.8" width="1.4" height="6.2" fill="#222" />
<circle cx="575.5" cy="225.5" r="6" fill="none" stroke="#3a3a3a" stroke-width="1.1" />
<rect x="574.8" y="217.8" width="1.4" height="6.2" fill="#222" />
<circle cx="616.5" cy="225.5" r="6" fill="none" stroke="#3a3a3a" stroke-width="1.1" />
<rect x="615.8" y="217.8" width="1.4" height="6.2" fill="#222" />
<circle cx="660.0" cy="225.5" r="6" fill="none" stroke="#3a3a3a" stroke-width="1.1" />
<rect x="659.3" y="217.8" width="1.4" height="6.2" fill="#222" />
<rect x="140.6" y="234.3" width="11.4" height="11.0" fill="#f2a532" />
<rect x="180.3" y="234.3" width="11.4" height="11.0" fill="#f2a532" />
<rect x="184.8" y="237.5" width="2.4" height="5.0" fill="#5a2a10" />
<rect x="221.6" y="234.3" width="11.4" height="11.0" fill="#f2a532" />
<rect x="226.1" y="237.5" width="2.4" height="5.0" fill="#5a2a10" />
<rect x="569.8" y="234.3" width="11.4" height="11.0" fill="#f2a532" />
<rect x="574.3" y="237.5" width="2.4" height="5.0" fill="#5a2a10" />
<rect x="610.8" y="234.3" width="11.4" height="11.0" fill="#f2a532" />
<rect x="615.3" y="237.5" width="2.4" height="5.0" fill="#5a2a10" />
<rect x="144.5" y="247.6" width="3.6" height="3.8" fill="#1e1e1e" />
<rect x="142.3" y="254.8" width="8.0" height="3.4" fill="#bcbcbc" />
<rect x="145.1" y="255.6" width="2.4" height="2.0" fill="#222" />
<rect x="184.2" y="247.6" width="3.6" height="3.8" fill="#1e1e1e" />
<rect x="182.0" y="254.8" width="8.0" height="3.4" fill="#bcbcbc" />
<rect x="184.8" y="255.6" width="2.4" height="2.0" fill="#222" />
<rect x="573.7" y="247.6" width="3.6" height="3.8" fill="#1e1e1e" />
<rect x="571.5" y="254.8" width="8.0" height="3.4" fill="#bcbcbc" />
<rect x="574.3" y="255.6" width="2.4" height="2.0" fill="#222" />
<rect x="614.7" y="247.6" width="3.6" height="3.8" fill="#1e1e1e" />
<rect x="612.5" y="254.8" width="8.0" height="3.4" fill="#bcbcbc" />
<rect x="615.3" y="255.6" width="2.4" height="2.0" fill="#222" />
<rect x="223.0" y="246.5" width="9.0" height="4.5" fill="#a6a6a6" />
<rect x="223.5" y="254.5" width="8.0" height="4.0" fill="#222" />
<rect x="155.6" y="218.5" width="4.8" height="41.5" fill="#2b2b2b" />
<rect x="196.0" y="218.5" width="6.6" height="13.5" fill="#3c3c3c" />
<rect x="196.0" y="231.5" width="6.6" height="28.5" fill="#32d478" />
<rect x="243.0" y="218.5" width="1.2" height="41.5" fill="#666" />
<rect x="586.0" y="218.5" width="4.0" height="41.5" fill="#3a3a3a" />
<rect x="630.0" y="218.5" width="3.5" height="41.5" fill="#444" />
<rect x="667.5" y="218.5" width="2.5" height="14.5" fill="#3c4a3c" />
<rect x="671.0" y="218.5" width="2.5" height="14.5" fill="#3c4a3c" />
<rect x="667.5" y="232.5" width="6.5" height="27.5" fill="#3ec878" />
<rect x="656.0" y="241.0" width="9.0" height="4.5" fill="#c8c8c8" />
<rect x="656.0" y="246.5" width="9.0" height="1.5" fill="#6ab0b0" />
<rect x="657.0" y="251.0" width="7.0" height="7.5" fill="#6a8ab8" opacity=".8"/>
<rect x="0.0" y="260.0" width="700.0" height="6.5" fill="#777" />
<rect x="0.0" y="259.3" width="700.0" height="1.3" fill="#5c5c5c" />
<rect x="0.0" y="266.5" width="700.0" height="85.5" fill="#8d8d8d" />
<rect x="0.0" y="266.5" width="103.5" height="8.5" fill="#ece45c" />
<rect x="106.0" y="266.5" width="62.0" height="8.5" fill="#ece45c" />
<text x="3.0" y="273.3" font-size="5" fill="#3a3610" font-weight="bold">Clip</text>
<text x="108.0" y="273.3" font-size="5" fill="#3a3610" font-weight="bold">Sample</text>
<circle cx="98.5" cy="270.7" r="1.8" fill="#7a6a20" stroke="#5a5018" stroke-width="0.5" />
<circle cx="163.0" cy="270.7" r="1.8" fill="#7a6a20" stroke="#5a5018" stroke-width="0.5" />
<rect x="0.0" y="275.0" width="103.5" height="75.0" fill="#919191" />
<rect x="106.0" y="275.0" width="62.0" height="75.0" fill="#919191" />
<rect x="103.5" y="266.5" width="2.5" height="85.5" fill="#5e5e5e" />
<rect x="168.0" y="266.5" width="2.0" height="85.5" fill="#6a6a6a" />
<rect x="50.0" y="277.5" width="18.0" height="4.5" fill="#b8b8b8" opacity="1"/>
<rect x="92.0" y="277.0" width="9.0" height="4.0" fill="#a4a4a4" opacity="0.8"/>
<rect x="74.0" y="283.5" width="9.0" height="5.5" fill="#c6c6c6" opacity="1"/>
<rect x="85.0" y="283.5" width="5.5" height="5.5" fill="#c0c0c0" opacity="1"/>
<rect x="93.0" y="283.5" width="9.0" height="5.5" fill="#b4b4b4" opacity="1"/>
<rect x="5.0" y="292.0" width="10.0" height="5.0" fill="#a8a8a8" opacity="1"/>
<rect x="20.0" y="292.0" width="10.0" height="5.0" fill="#a8a8a8" opacity="1"/>
<rect x="34.0" y="292.0" width="11.0" height="5.0" fill="#a0a0a0" opacity="1"/>
<rect x="4.5" y="299.0" width="25.5" height="6.0" fill="#e9a42e" opacity="1"/>
<rect x="34.0" y="300.0" width="11.0" height="4.0" fill="#9c9c9c" opacity="1"/>
<rect x="93.0" y="293.0" width="8.0" height="4.0" fill="#a0a0a0" opacity="0.8"/>
<rect x="56.0" y="299.5" width="14.0" height="4.5" fill="#a6a6a6" opacity="1"/>
<rect x="74.0" y="299.5" width="6.0" height="5.5" fill="#c4c4c4" opacity="1"/>
<rect x="85.0" y="299.5" width="5.0" height="5.5" fill="#aaa" opacity="1"/>
<rect x="93.0" y="299.5" width="9.0" height="5.5" fill="#c0c0c0" opacity="1"/>
<rect x="50.0" y="306.5" width="18.0" height="4.0" fill="#a8a8a8" opacity="0.9"/>
<rect x="74.0" y="307.5" width="28.0" height="2.0" fill="#9c9c9c" opacity="1"/>
<rect x="74.0" y="312.0" width="28.0" height="4.5" fill="#b6b6b6" opacity="1"/>
<rect x="50.0" y="329.0" width="4.0" height="4.0" fill="#222" opacity="0.8"/>
<rect x="50.0" y="336.0" width="20.0" height="5.0" fill="#b0b0b0" opacity="0.9"/>
<rect x="62.0" y="336.5" width="6.0" height="3.5" fill="#e8e8e8" opacity="1"/>
<rect x="6.0" y="341.5" width="19.0" height="4.5" fill="#c6c6c6" opacity="1"/>
<rect x="78.0" y="342.0" width="23.0" height="4.0" fill="#8a8a8a" opacity="1"/>
<rect x="35.5" y="308.0" width="4.0" height="31.0" fill="#6e6e6e" opacity="1"/>
<rect x="108.0" y="292.0" width="13.0" height="5.5" fill="#c4c4c4" opacity="1"/>
<rect x="123.0" y="292.0" width="11.0" height="5.5" fill="#b0b0b0" opacity="1"/>
<rect x="138.0" y="284.0" width="28.0" height="5.0" fill="#8a8a8a" opacity="1"/>
<rect x="138.0" y="299.0" width="28.0" height="5.0" fill="#8a8a8a" opacity="1"/>
<rect x="139.0" y="311.5" width="25.0" height="5.0" fill="#b2b2b2" opacity="1"/>
<rect x="138.0" y="326.0" width="28.0" height="5.0" fill="#8a8a8a" opacity="1"/>
<rect x="108.0" y="341.5" width="25.0" height="4.5" fill="#cacaca" opacity="1"/>
<rect x="138.0" y="341.0" width="28.0" height="5.0" fill="#8a8a8a" opacity="1"/>
<text x="4.0" y="281.5" font-size="4.4" fill="#101010" font-weight="bold" opacity=".95">Signature</text>
<text x="31.0" y="281.5" font-size="4.4" fill="#101010" font-weight="bold" opacity=".95">Groove</text>
<text x="4.0" y="288.0" font-size="4.4" fill="#101010" font-weight="bold" opacity=".95">4 / 4</text>
<text x="31.0" y="288.0" font-size="4.4" fill="#101010" font-weight="bold" opacity=".95">None</text>
<text x="74.0" y="281.0" font-size="4.4" fill="#101010" font-weight="bold" opacity=".95">Start</text>
<text x="50.0" y="298.0" font-size="4.4" fill="#101010" font-weight="bold" opacity=".95">Seg. BPM</text>
<text x="74.0" y="296.5" font-size="4.4" fill="#101010" font-weight="bold" opacity=".95">End</text>
<text x="7.0" y="311.0" font-size="4.4" fill="#101010" font-weight="bold" opacity=".95">Transpose</text>
<text x="51.0" y="319.0" font-size="4.4" fill="#101010" font-weight="bold" opacity=".95">Beats</text>
<text x="50.0" y="326.5" font-size="4.4" fill="#101010" font-weight="bold" opacity=".95">Preserve</text>
<text x="8.0" y="338.5" font-size="4.4" fill="#101010" font-weight="bold" opacity=".95">Detune</text>
<text x="29.0" y="345.5" font-size="4.4" fill="#101010" font-weight="bold" opacity=".95">0.00 dB</text>
<text x="74.0" y="337.5" font-size="4.4" fill="#101010" font-weight="bold" opacity=".95">Length</text>
<text x="112.0" y="281.0" font-size="4.4" fill="#101010" font-weight="bold" opacity=".95">Warp</text>
<text x="138.0" y="281.0" font-size="4.4" fill="#101010" font-weight="bold" opacity=".95">Start</text>
<text x="114.0" y="287.5" font-size="4.4" fill="#101010" font-weight="bold" opacity=".95">Follower</text>
<text x="138.0" y="296.5" font-size="4.4" fill="#101010" font-weight="bold" opacity=".95">End</text>
<text x="138.0" y="324.0" font-size="4.4" fill="#101010" font-weight="bold" opacity=".95">Position</text>
<text x="107.0" y="338.0" font-size="4.4" fill="#101010" font-weight="bold" opacity=".95">Loop</text>
<text x="138.0" y="337.5" font-size="4.4" fill="#101010" font-weight="bold" opacity=".95">Length</text>
<path d="M14.5 313 a6 7 0 1 1 -.1 0 M11 324l2 4 M17.5 324l-2 4" fill="none" stroke="#333" stroke-width="1"/>
<path d="M75 321l8 2 6 7 5-8 6 9" fill="none" stroke="#555" stroke-width="1.2" opacity=".7"/>
<rect x="170.0" y="266.5" width="15.0" height="85.5" fill="#898989" />
<rect x="170.0" y="266.5" width="9.0" height="2.0" fill="#3a3a3a" />
<rect x="171.5" y="269.0" width="5.5" height="3.0" fill="#b6b6b6" />
<rect x="185.0" y="266.5" width="513.0" height="14.5" fill="#939393" />
<rect x="185.0" y="281.0" width="513.0" height="62.5" fill="#aaaaaa" />
<rect x="185.0" y="343.5" width="513.0" height="7.5" fill="#8f8f8f" />
<rect x="187.0" y="276.5" width="1.5" height="2.0" fill="#333" />
<path d="M190.0,294.8 191.0,294.8 192.0,294.9 193.0,294.7 194.0,294.9 195.0,294.9 196.0,294.8 197.0,294.9 198.0,294.9 199.0,294.8 200.0,294.8 201.0,294.7 202.0,294.4 203.0,294.5 204.0,294.5 205.0,294.6 206.0,293.8 207.0,294.6 208.0,293.3 209.0,293.8 210.0,294.5 211.0,291.9 212.0,294.0 213.0,294.2 214.0,294.2 215.0,291.5 216.0,294.1 217.0,292.2 218.0,294.1 219.0,291.5 220.0,294.1 221.0,294.0 222.0,294.4 223.0,293.5 224.0,292.8 225.0,293.3 226.0,293.4 227.0,294.6 228.0,294.6 229.0,294.4 230.0,294.8 231.0,294.5 232.0,294.6 233.0,294.5 234.0,294.7 235.0,294.8 236.0,294.9 237.0,294.9 238.0,294.8 239.0,294.8 240.0,294.8 241.0,294.9 242.0,294.8 243.0,294.8 244.0,294.9 245.0,294.8 246.0,294.8 247.0,294.8 248.0,294.8 249.0,294.8 250.0,294.8 251.0,294.8 252.0,294.8 253.0,294.9 254.0,294.9 255.0,294.8 256.0,294.8 257.0,294.8 258.0,294.8 259.0,294.8 260.0,294.8 261.0,294.8 262.0,294.9 263.0,294.8 264.0,294.8 265.0,294.8 266.0,294.8 267.0,294.9 268.0,294.9 269.0,294.8 270.0,294.7 271.0,294.9 272.0,294.8 273.0,294.6 274.0,294.7 275.0,294.8 276.0,294.7 277.0,294.7 278.0,294.6 279.0,294.7 280.0,294.5 281.0,294.6 282.0,294.4 283.0,294.1 284.0,293.7 285.0,294.3 286.0,294.3 287.0,293.5 288.0,293.6 289.0,293.0 290.0,294.3 291.0,292.0 292.0,293.9 293.0,293.0 294.0,293.0 295.0,294.2 296.0,291.7 297.0,291.6 298.0,292.7 299.0,291.8 300.0,286.9 301.0,292.5 302.0,291.9 303.0,292.3 304.0,290.6 305.0,290.6 306.0,292.2 307.0,292.5 308.0,289.8 309.0,290.9 310.0,289.2 311.0,292.9 312.0,293.5 313.0,292.8 314.0,292.6 315.0,291.9 316.0,288.0 317.0,293.5 318.0,293.0 319.0,290.9 320.0,293.3 321.0,292.5 322.0,292.0 323.0,291.3 324.0,289.6 325.0,293.3 326.0,289.0 327.0,288.7 328.0,289.0 329.0,290.2 330.0,289.4 331.0,293.5 332.0,293.7 333.0,288.7 334.0,291.8 335.0,290.6 336.0,292.7 337.0,291.8 338.0,293.4 339.0,288.4 340.0,293.8 341.0,290.4 342.0,292.1 343.0,293.9 344.0,293.6 345.0,292.8 346.0,290.6 347.0,290.8 348.0,291.9 349.0,292.6 350.0,293.6 351.0,291.3 352.0,290.6 353.0,291.4 354.0,289.5 355.0,291.5 356.0,292.2 357.0,290.6 358.0,292.1 359.0,293.3 360.0,292.0 361.0,294.1 362.0,293.7 363.0,293.9 364.0,293.7 365.0,292.9 366.0,290.4 367.0,294.1 368.0,294.1 369.0,293.0 370.0,290.7 371.0,293.2 372.0,293.4 373.0,292.7 374.0,292.8 375.0,294.2 376.0,293.4 377.0,294.2 378.0,294.2 379.0,293.2 380.0,293.0 381.0,293.3 382.0,291.3 383.0,293.3 384.0,293.1 385.0,292.6 386.0,293.0 387.0,293.2 388.0,292.4 389.0,291.8 390.0,293.7 391.0,293.1 392.0,292.4 393.0,291.4 394.0,293.8 395.0,293.5 396.0,291.9 397.0,292.6 398.0,293.6 399.0,293.7 400.0,293.8 401.0,292.8 402.0,293.5 403.0,293.6 404.0,293.8 405.0,291.6 406.0,294.2 407.0,294.2 408.0,292.7 409.0,294.3 410.0,294.3 411.0,292.7 412.0,293.8 413.0,294.3 414.0,292.1 415.0,293.7 416.0,294.0 417.0,292.4 418.0,294.0 419.0,293.9 420.0,292.9 421.0,293.6 422.0,292.8 423.0,293.8 424.0,292.7 425.0,294.5 426.0,294.2 427.0,291.8 428.0,294.5 429.0,294.4 430.0,294.0 431.0,294.3 432.0,294.1 433.0,293.8 434.0,293.6 435.0,293.7 436.0,293.4 437.0,293.9 438.0,294.3 439.0,293.5 440.0,294.6 441.0,292.7 442.0,294.7 443.0,294.4 444.0,294.3 445.0,294.7 446.0,294.6 447.0,294.7 448.0,294.7 449.0,294.5 450.0,294.7 451.0,294.6 452.0,294.6 453.0,294.7 454.0,294.8 455.0,294.7 456.0,294.9 457.0,294.8 458.0,294.9 459.0,294.9 460.0,294.8 461.0,294.8 462.0,294.9 463.0,294.7 464.0,294.8 465.0,294.9 466.0,294.8 467.0,294.9 468.0,294.8 469.0,294.9 470.0,294.9 471.0,294.9 472.0,294.9 473.0,294.9 474.0,294.7 475.0,294.8 476.0,294.7 477.0,294.5 478.0,294.7 479.0,294.7 480.0,294.7 481.0,294.8 482.0,294.3 483.0,294.7 484.0,294.6 485.0,294.3 486.0,294.0 487.0,294.6 488.0,294.0 489.0,294.3 490.0,293.6 491.0,294.3 492.0,294.1 493.0,293.1 494.0,294.5 495.0,292.0 496.0,293.5 497.0,293.0 498.0,291.6 499.0,293.1 500.0,290.7 501.0,291.3 502.0,292.2 503.0,293.6 504.0,293.3 505.0,292.7 506.0,293.8 507.0,292.1 508.0,289.9 509.0,291.8 510.0,293.3 511.0,292.0 512.0,290.2 513.0,293.6 514.0,291.6 515.0,291.2 516.0,288.0 517.0,292.7 518.0,292.3 519.0,293.6 520.0,290.3 521.0,294.0 522.0,293.1 523.0,292.2 524.0,293.1 525.0,291.5 526.0,292.9 527.0,293.0 528.0,292.9 529.0,291.4 530.0,292.1 531.0,294.2 532.0,293.1 533.0,292.3 534.0,293.7 535.0,294.1 536.0,292.3 537.0,291.6 538.0,292.7 539.0,291.7 540.0,288.1 541.0,293.7 542.0,291.3 543.0,293.6 544.0,294.2 545.0,293.2 546.0,293.4 547.0,291.8 548.0,292.3 549.0,294.2 550.0,294.2 551.0,290.9 552.0,293.1 553.0,292.8 554.0,293.3 555.0,294.5 556.0,293.4 557.0,294.3 558.0,294.1 559.0,293.6 560.0,292.6 561.0,292.4 562.0,293.8 563.0,294.4 564.0,294.1 565.0,294.0 566.0,294.0 567.0,292.0 568.0,293.5 569.0,291.6 570.0,293.0 571.0,292.6 572.0,293.1 573.0,293.0 574.0,291.9 575.0,293.8 576.0,291.7 577.0,293.0 578.0,291.6 579.0,292.0 580.0,293.9 581.0,293.0 582.0,293.7 583.0,291.1 584.0,291.7 585.0,292.7 586.0,292.5 587.0,291.0 588.0,294.0 589.0,292.2 590.0,294.1 591.0,293.8 592.0,292.9 593.0,294.0 594.0,294.1 595.0,293.9 596.0,291.7 597.0,289.8 598.0,293.6 599.0,293.5 600.0,293.1 601.0,289.6 602.0,289.0 603.0,291.1 604.0,289.6 605.0,289.8 606.0,293.4 607.0,291.7 608.0,293.3 609.0,292.2 610.0,289.2 611.0,293.7 612.0,291.7 613.0,293.0 614.0,290.3 615.0,293.4 616.0,290.0 617.0,293.7 618.0,293.7 619.0,290.1 620.0,292.5 621.0,293.5 622.0,293.0 623.0,293.6 624.0,290.7 625.0,293.5 626.0,292.7 627.0,293.4 628.0,292.5 629.0,291.6 630.0,289.4 631.0,289.8 632.0,291.5 633.0,293.5 634.0,292.8 635.0,293.0 636.0,293.4 637.0,292.6 638.0,292.5 639.0,292.8 640.0,291.3 641.0,294.0 642.0,293.9 643.0,292.4 644.0,293.2 645.0,293.1 646.0,293.4 647.0,292.5 648.0,293.0 649.0,290.9 650.0,292.8 651.0,290.5 652.0,286.7 653.0,292.5 654.0,289.8 655.0,293.6 656.0,294.1 657.0,293.7 658.0,292.6 659.0,291.3 660.0,293.5 661.0,292.1 662.0,291.0 663.0,292.7 664.0,293.6 665.0,293.1 666.0,293.8 667.0,293.7 668.0,294.2 669.0,293.3 670.0,294.0 671.0,294.1 672.0,291.4 673.0,293.6 674.0,293.2 675.0,290.3 676.0,290.9 677.0,290.0 678.0,290.8 679.0,293.7 680.0,288.3 681.0,292.4 682.0,289.1 683.0,288.3 684.0,293.4 685.0,293.9 686.0,292.8 687.0,294.1 688.0,294.5 689.0,294.5 690.0,294.9 690.0,295.7 689.0,296.1 688.0,296.1 687.0,296.6 686.0,297.7 685.0,296.5 684.0,297.5 683.0,301.1 682.0,300.5 681.0,298.1 680.0,302.8 679.0,297.1 678.0,299.3 677.0,300.4 676.0,300.3 675.0,300.2 674.0,297.6 673.0,296.9 672.0,299.5 671.0,296.5 670.0,296.7 669.0,297.3 668.0,296.3 667.0,296.7 666.0,296.8 665.0,297.3 664.0,297.1 663.0,298.0 662.0,299.1 661.0,298.7 660.0,297.0 659.0,299.1 658.0,298.1 657.0,297.0 656.0,296.5 655.0,296.8 654.0,300.2 653.0,298.0 652.0,302.7 651.0,299.8 650.0,297.6 649.0,299.9 648.0,297.9 647.0,298.5 646.0,297.0 645.0,297.6 644.0,297.1 643.0,298.2 642.0,296.5 641.0,296.6 640.0,299.6 639.0,297.9 638.0,297.9 637.0,298.2 636.0,297.2 635.0,297.6 634.0,297.4 633.0,296.9 632.0,299.6 631.0,301.2 630.0,301.6 629.0,299.4 628.0,297.6 627.0,297.1 626.0,298.2 625.0,297.3 624.0,299.3 623.0,296.9 622.0,297.7 621.0,296.8 620.0,297.6 619.0,299.7 618.0,296.9 617.0,296.8 616.0,301.4 615.0,297.1 614.0,300.0 613.0,297.9 612.0,298.5 611.0,296.9 610.0,301.1 609.0,298.6 608.0,297.2 607.0,298.5 606.0,297.1 605.0,301.4 604.0,300.8 603.0,299.7 602.0,301.2 601.0,300.8 600.0,297.9 599.0,297.3 598.0,297.0 597.0,301.2 596.0,298.3 595.0,296.6 594.0,296.6 593.0,296.7 592.0,298.0 591.0,296.6 590.0,296.4 589.0,298.8 588.0,296.5 587.0,300.0 586.0,297.9 585.0,297.7 584.0,298.5 583.0,299.6 582.0,296.7 581.0,297.6 580.0,296.5 579.0,299.0 578.0,299.1 577.0,297.6 576.0,298.5 575.0,296.9 574.0,298.9 573.0,297.3 572.0,297.6 571.0,298.0 570.0,297.5 569.0,298.6 568.0,297.1 567.0,298.1 566.0,296.5 565.0,296.5 564.0,296.3 563.0,296.1 562.0,296.8 561.0,298.7 560.0,297.8 559.0,296.9 558.0,296.6 557.0,296.4 556.0,297.1 555.0,296.1 554.0,297.2 553.0,297.5 552.0,297.8 551.0,299.1 550.0,296.3 549.0,296.5 548.0,298.3 547.0,298.4 546.0,297.1 545.0,297.7 544.0,296.3 543.0,296.8 542.0,299.2 541.0,296.7 540.0,301.8 539.0,299.0 538.0,297.5 537.0,299.3 536.0,298.2 535.0,296.6 534.0,296.8 533.0,298.1 532.0,297.2 531.0,296.4 530.0,298.6 529.0,299.3 528.0,297.9 527.0,297.9 526.0,297.8 525.0,299.0 524.0,297.7 523.0,298.7 522.0,297.6 521.0,296.7 520.0,300.7 519.0,296.9 518.0,298.3 517.0,297.8 516.0,301.7 515.0,299.6 514.0,299.2 513.0,297.2 512.0,299.5 511.0,298.3 510.0,297.2 509.0,299.2 508.0,301.4 507.0,298.2 506.0,296.8 505.0,298.3 504.0,297.2 503.0,297.1 502.0,297.9 501.0,299.9 500.0,300.2 499.0,297.6 498.0,298.8 497.0,297.8 496.0,297.3 495.0,298.5 494.0,296.1 493.0,297.6 492.0,296.6 491.0,296.2 490.0,296.9 489.0,296.3 488.0,296.7 487.0,296.0 486.0,296.4 485.0,296.3 484.0,296.0 483.0,295.9 482.0,296.3 481.0,295.8 480.0,295.9 479.0,295.9 478.0,295.9 477.0,296.0 476.0,295.8 475.0,295.8 474.0,295.9 473.0,295.7 472.0,295.7 471.0,295.7 470.0,295.7 469.0,295.8 468.0,295.8 467.0,295.7 466.0,295.8 465.0,295.8 464.0,295.8 463.0,295.9 462.0,295.7 461.0,295.8 460.0,295.8 459.0,295.7 458.0,295.7 457.0,295.9 456.0,295.7 455.0,295.9 454.0,295.8 453.0,295.9 452.0,296.0 451.0,296.0 450.0,296.0 449.0,296.1 448.0,295.9 447.0,295.9 446.0,296.0 445.0,295.9 444.0,296.2 443.0,296.2 442.0,296.0 441.0,297.7 440.0,296.0 439.0,296.9 438.0,296.3 437.0,296.7 436.0,297.2 435.0,297.1 434.0,297.2 433.0,296.8 432.0,296.6 431.0,296.3 430.0,296.5 429.0,296.3 428.0,296.1 427.0,299.0 426.0,296.4 425.0,296.1 424.0,298.2 423.0,296.8 422.0,297.4 421.0,297.1 420.0,297.9 419.0,296.7 418.0,296.6 417.0,298.1 416.0,296.8 415.0,296.8 414.0,299.0 413.0,296.4 412.0,296.7 411.0,297.6 410.0,296.4 409.0,296.4 408.0,298.2 407.0,296.4 406.0,296.3 405.0,298.9 404.0,296.9 403.0,297.2 402.0,297.3 401.0,297.5 400.0,297.0 399.0,297.0 398.0,296.8 397.0,298.1 396.0,298.2 395.0,296.9 394.0,296.7 393.0,299.8 392.0,298.0 391.0,297.6 390.0,297.0 389.0,299.0 388.0,297.8 387.0,297.7 386.0,297.8 385.0,297.7 384.0,297.4 383.0,297.0 382.0,299.4 381.0,297.5 380.0,297.7 379.0,297.2 378.0,296.4 377.0,296.6 376.0,297.3 375.0,296.5 374.0,297.6 373.0,298.1 372.0,297.3 371.0,297.4 370.0,300.6 369.0,297.6 368.0,296.4 367.0,296.6 366.0,300.8 365.0,297.8 364.0,296.9 363.0,296.6 362.0,296.7 361.0,296.5 360.0,299.2 359.0,297.4 358.0,298.5 357.0,299.8 356.0,298.1 355.0,298.9 354.0,300.8 353.0,299.0 352.0,300.3 351.0,299.2 350.0,297.2 349.0,298.3 348.0,298.8 347.0,300.4 346.0,300.7 345.0,297.5 344.0,297.1 343.0,296.8 342.0,298.6 341.0,300.1 340.0,296.8 339.0,301.1 338.0,297.4 337.0,298.3 336.0,298.0 335.0,299.3 334.0,298.8 333.0,301.0 332.0,297.0 331.0,297.2 330.0,301.9 329.0,299.6 328.0,301.0 327.0,303.1 326.0,301.2 325.0,297.6 324.0,301.8 323.0,299.4 322.0,298.3 321.0,298.0 320.0,297.3 319.0,299.7 318.0,297.3 317.0,297.0 316.0,301.8 315.0,298.3 314.0,297.7 313.0,298.1 312.0,296.9 311.0,298.0 310.0,301.5 309.0,299.7 308.0,300.6 307.0,297.6 306.0,298.5 305.0,300.1 304.0,299.5 303.0,298.2 302.0,299.1 301.0,298.3 300.0,302.8 299.0,298.8 298.0,298.2 297.0,298.6 296.0,298.7 295.0,296.3 294.0,297.6 293.0,297.6 292.0,296.8 291.0,298.9 290.0,296.5 289.0,297.7 288.0,297.1 287.0,297.1 286.0,296.4 285.0,296.4 284.0,296.7 283.0,296.4 282.0,296.2 281.0,296.0 280.0,296.1 279.0,295.9 278.0,296.0 277.0,296.0 276.0,295.9 275.0,295.8 274.0,295.9 273.0,295.9 272.0,295.8 271.0,295.7 270.0,295.8 269.0,295.8 268.0,295.7 267.0,295.7 266.0,295.8 265.0,295.8 264.0,295.8 263.0,295.8 262.0,295.7 261.0,295.8 260.0,295.8 259.0,295.8 258.0,295.8 257.0,295.8 256.0,295.8 255.0,295.9 254.0,295.7 253.0,295.7 252.0,295.8 251.0,295.8 250.0,295.8 249.0,295.8 248.0,295.8 247.0,295.8 246.0,295.8 245.0,295.8 244.0,295.7 243.0,295.8 242.0,295.8 241.0,295.7 240.0,295.8 239.0,295.8 238.0,295.8 237.0,295.7 236.0,295.7 235.0,295.8 234.0,295.9 233.0,296.1 232.0,295.9 231.0,296.1 230.0,295.8 229.0,296.1 228.0,296.0 227.0,296.1 226.0,297.0 225.0,297.1 224.0,297.9 223.0,297.0 222.0,296.2 221.0,296.5 220.0,296.6 219.0,299.7 218.0,296.6 217.0,298.8 216.0,296.7 215.0,299.0 214.0,296.3 213.0,296.4 212.0,296.7 211.0,298.4 210.0,296.2 209.0,296.7 208.0,297.0 207.0,296.0 206.0,296.6 205.0,296.0 204.0,296.1 203.0,296.1 202.0,296.3 201.0,295.9 200.0,295.8 199.0,295.8 198.0,295.7 197.0,295.7 196.0,295.8 195.0,295.7 194.0,295.7 193.0,295.9 192.0,295.7 191.0,295.8 190.0,295.8Z" fill="#1f1f1f"/>
<rect x="186.0" y="294.8" width="508.0" height="1.0" fill="#2a2a2a" opacity=".75"/>
<path d="M190.0,326.9 191.0,326.8 192.0,326.9 193.0,326.8 194.0,326.9 195.0,326.8 196.0,326.9 197.0,326.9 198.0,326.7 199.0,326.8 200.0,326.7 201.0,326.7 202.0,326.5 203.0,326.7 204.0,326.6 205.0,326.6 206.0,326.1 207.0,326.7 208.0,326.6 209.0,325.5 210.0,325.2 211.0,322.7 212.0,325.9 213.0,322.3 214.0,326.1 215.0,324.9 216.0,324.9 217.0,323.8 218.0,325.8 219.0,324.6 220.0,325.7 221.0,325.9 222.0,325.7 223.0,325.7 224.0,325.0 225.0,326.5 226.0,325.3 227.0,326.0 228.0,326.2 229.0,326.7 230.0,326.7 231.0,326.5 232.0,326.5 233.0,326.7 234.0,326.6 235.0,326.7 236.0,326.8 237.0,326.8 238.0,326.8 239.0,326.8 240.0,326.8 241.0,326.8 242.0,326.8 243.0,326.8 244.0,326.8 245.0,326.8 246.0,326.9 247.0,326.9 248.0,326.8 249.0,326.9 250.0,326.8 251.0,326.9 252.0,326.8 253.0,326.8 254.0,326.9 255.0,326.8 256.0,326.9 257.0,326.8 258.0,326.8 259.0,326.8 260.0,326.8 261.0,326.9 262.0,326.9 263.0,326.9 264.0,326.8 265.0,326.8 266.0,326.9 267.0,326.8 268.0,326.8 269.0,326.8 270.0,326.8 271.0,326.8 272.0,326.8 273.0,326.8 274.0,326.8 275.0,326.7 276.0,326.8 277.0,326.7 278.0,326.6 279.0,326.7 280.0,326.7 281.0,326.3 282.0,326.1 283.0,326.7 284.0,326.1 285.0,325.6 286.0,325.9 287.0,326.1 288.0,325.7 289.0,324.5 290.0,325.3 291.0,326.4 292.0,325.0 293.0,326.1 294.0,325.5 295.0,326.0 296.0,323.9 297.0,323.9 298.0,323.6 299.0,322.4 300.0,325.3 301.0,325.9 302.0,324.5 303.0,325.1 304.0,325.4 305.0,323.5 306.0,324.8 307.0,319.5 308.0,325.8 309.0,325.0 310.0,321.8 311.0,325.8 312.0,323.4 313.0,325.3 314.0,321.7 315.0,325.9 316.0,324.4 317.0,325.2 318.0,322.0 319.0,324.3 320.0,325.2 321.0,324.8 322.0,324.8 323.0,325.8 324.0,323.8 325.0,324.2 326.0,324.9 327.0,322.2 328.0,324.4 329.0,323.2 330.0,323.2 331.0,323.1 332.0,323.8 333.0,324.8 334.0,325.0 335.0,321.2 336.0,319.7 337.0,321.6 338.0,321.8 339.0,325.8 340.0,323.3 341.0,320.8 342.0,322.6 343.0,322.8 344.0,321.2 345.0,322.7 346.0,325.0 347.0,325.8 348.0,325.3 349.0,323.7 350.0,325.9 351.0,324.4 352.0,325.1 353.0,325.9 354.0,326.1 355.0,324.0 356.0,323.9 357.0,326.0 358.0,324.5 359.0,325.9 360.0,324.8 361.0,323.2 362.0,325.0 363.0,324.0 364.0,323.8 365.0,326.1 366.0,323.9 367.0,324.6 368.0,325.1 369.0,321.6 370.0,320.8 371.0,324.7 372.0,326.0 373.0,321.3 374.0,325.9 375.0,324.6 376.0,324.7 377.0,324.3 378.0,324.2 379.0,324.2 380.0,326.2 381.0,325.8 382.0,325.2 383.0,325.8 384.0,326.1 385.0,324.9 386.0,325.1 387.0,324.2 388.0,323.5 389.0,326.0 390.0,324.5 391.0,325.1 392.0,321.2 393.0,323.3 394.0,326.2 395.0,323.3 396.0,326.3 397.0,326.3 398.0,324.6 399.0,324.0 400.0,326.1 401.0,325.3 402.0,325.5 403.0,325.3 404.0,325.0 405.0,325.7 406.0,323.3 407.0,323.9 408.0,325.3 409.0,325.0 410.0,326.3 411.0,325.9 412.0,321.5 413.0,324.3 414.0,325.3 415.0,326.0 416.0,324.0 417.0,326.0 418.0,324.9 419.0,325.6 420.0,325.8 421.0,326.3 422.0,325.9 423.0,326.3 424.0,325.8 425.0,326.4 426.0,326.2 427.0,325.4 428.0,325.5 429.0,326.2 430.0,326.3 431.0,326.3 432.0,325.6 433.0,326.3 434.0,325.7 435.0,326.6 436.0,326.6 437.0,326.5 438.0,325.6 439.0,326.6 440.0,326.6 441.0,325.8 442.0,326.4 443.0,326.6 444.0,326.6 445.0,326.6 446.0,326.4 447.0,326.2 448.0,326.7 449.0,326.6 450.0,326.5 451.0,326.5 452.0,326.2 453.0,326.7 454.0,326.7 455.0,326.7 456.0,326.9 457.0,326.8 458.0,326.8 459.0,326.8 460.0,326.8 461.0,326.8 462.0,326.8 463.0,326.8 464.0,326.8 465.0,326.8 466.0,326.8 467.0,326.9 468.0,326.9 469.0,326.8 470.0,326.9 471.0,326.9 472.0,326.8 473.0,326.9 474.0,326.8 475.0,326.8 476.0,326.7 477.0,326.7 478.0,326.8 479.0,326.8 480.0,326.7 481.0,326.7 482.0,326.4 483.0,326.7 484.0,326.3 485.0,326.3 486.0,326.1 487.0,326.0 488.0,324.8 489.0,326.4 490.0,325.3 491.0,326.6 492.0,324.8 493.0,326.4 494.0,324.3 495.0,323.6 496.0,324.6 497.0,325.2 498.0,325.3 499.0,326.2 500.0,325.9 501.0,324.1 502.0,325.6 503.0,323.8 504.0,322.2 505.0,321.9 506.0,323.0 507.0,324.3 508.0,322.2 509.0,323.0 510.0,323.9 511.0,325.1 512.0,324.2 513.0,324.8 514.0,324.6 515.0,324.8 516.0,324.3 517.0,322.4 518.0,321.9 519.0,321.0 520.0,324.6 521.0,323.8 522.0,324.3 523.0,324.1 524.0,322.9 525.0,326.2 526.0,325.3 527.0,324.9 528.0,324.6 529.0,326.2 530.0,326.2 531.0,326.2 532.0,326.1 533.0,325.1 534.0,319.9 535.0,325.9 536.0,325.3 537.0,325.8 538.0,325.2 539.0,325.2 540.0,325.3 541.0,325.2 542.0,325.2 543.0,323.0 544.0,324.5 545.0,324.4 546.0,324.7 547.0,326.1 548.0,323.7 549.0,326.4 550.0,326.1 551.0,325.9 552.0,322.9 553.0,324.9 554.0,325.6 555.0,325.2 556.0,325.4 557.0,324.6 558.0,326.2 559.0,326.2 560.0,325.8 561.0,324.7 562.0,324.9 563.0,325.4 564.0,324.0 565.0,325.9 566.0,326.0 567.0,324.2 568.0,325.7 569.0,325.7 570.0,325.8 571.0,325.9 572.0,326.2 573.0,325.8 574.0,326.2 575.0,325.9 576.0,325.6 577.0,325.1 578.0,323.6 579.0,322.6 580.0,324.5 581.0,325.5 582.0,323.5 583.0,326.0 584.0,325.9 585.0,325.8 586.0,322.1 587.0,326.1 588.0,323.1 589.0,325.5 590.0,320.7 591.0,326.1 592.0,325.7 593.0,325.5 594.0,324.6 595.0,325.7 596.0,326.1 597.0,324.6 598.0,324.7 599.0,322.3 600.0,323.6 601.0,324.8 602.0,324.5 603.0,322.4 604.0,325.9 605.0,322.2 606.0,325.4 607.0,322.8 608.0,324.2 609.0,321.1 610.0,317.6 611.0,320.2 612.0,324.8 613.0,315.1 614.0,325.7 615.0,320.1 616.0,320.5 617.0,323.3 618.0,324.1 619.0,325.3 620.0,324.8 621.0,325.8 622.0,324.3 623.0,324.9 624.0,325.7 625.0,322.2 626.0,325.1 627.0,325.7 628.0,325.6 629.0,325.1 630.0,325.6 631.0,318.1 632.0,325.0 633.0,323.2 634.0,321.6 635.0,321.9 636.0,325.7 637.0,322.4 638.0,323.5 639.0,323.2 640.0,324.5 641.0,325.2 642.0,325.0 643.0,323.9 644.0,324.4 645.0,324.0 646.0,320.5 647.0,325.9 648.0,322.3 649.0,322.9 650.0,322.5 651.0,325.3 652.0,323.7 653.0,322.6 654.0,325.4 655.0,324.9 656.0,324.0 657.0,324.6 658.0,324.5 659.0,323.6 660.0,325.9 661.0,323.3 662.0,324.9 663.0,325.5 664.0,324.4 665.0,325.9 666.0,324.2 667.0,326.1 668.0,322.3 669.0,324.2 670.0,324.7 671.0,324.7 672.0,323.1 673.0,325.9 674.0,325.8 675.0,323.6 676.0,323.5 677.0,321.5 678.0,324.6 679.0,321.3 680.0,323.2 681.0,325.8 682.0,320.6 683.0,323.0 684.0,323.3 685.0,325.1 686.0,325.6 687.0,325.2 688.0,325.4 689.0,326.7 690.0,326.9 690.0,327.7 689.0,327.9 688.0,329.2 687.0,329.6 686.0,328.9 685.0,329.5 684.0,331.9 683.0,331.6 682.0,332.9 681.0,328.7 680.0,330.6 679.0,333.4 678.0,329.7 677.0,332.6 676.0,331.0 675.0,330.8 674.0,328.6 673.0,328.8 672.0,332.1 671.0,330.4 670.0,330.3 669.0,330.2 668.0,333.1 667.0,328.6 666.0,330.9 665.0,328.8 664.0,329.7 663.0,329.0 662.0,329.4 661.0,331.2 660.0,328.5 659.0,331.1 658.0,330.0 657.0,329.7 656.0,330.2 655.0,329.4 654.0,329.1 653.0,332.8 652.0,330.3 651.0,329.6 650.0,331.5 649.0,331.0 648.0,332.7 647.0,328.7 646.0,335.1 645.0,330.2 644.0,330.5 643.0,330.3 642.0,329.3 641.0,329.7 640.0,330.2 639.0,330.7 638.0,330.9 637.0,333.0 636.0,328.8 635.0,331.8 634.0,332.6 633.0,331.3 632.0,329.5 631.0,336.8 630.0,329.0 629.0,329.7 628.0,329.2 627.0,328.7 626.0,329.7 625.0,332.9 624.0,328.8 623.0,329.7 622.0,330.6 621.0,328.9 620.0,329.9 619.0,329.3 618.0,330.7 617.0,330.9 616.0,334.8 615.0,334.7 614.0,328.8 613.0,341.8 612.0,329.8 611.0,334.4 610.0,336.0 609.0,334.4 608.0,330.5 607.0,332.2 606.0,329.4 605.0,332.0 604.0,328.6 603.0,331.7 602.0,330.2 601.0,329.8 600.0,331.0 599.0,332.5 598.0,329.7 597.0,330.3 596.0,328.6 595.0,328.8 594.0,329.9 593.0,329.0 592.0,329.0 591.0,328.4 590.0,332.9 589.0,329.2 588.0,330.8 587.0,328.5 586.0,332.9 585.0,328.6 584.0,328.9 583.0,328.7 582.0,331.4 581.0,329.0 580.0,330.6 579.0,331.5 578.0,331.2 577.0,329.5 576.0,328.9 575.0,328.8 574.0,328.5 573.0,328.9 572.0,328.5 571.0,328.6 570.0,329.0 569.0,328.8 568.0,328.6 567.0,330.1 566.0,328.7 565.0,328.5 564.0,331.2 563.0,329.2 562.0,329.5 561.0,329.8 560.0,328.9 559.0,328.4 558.0,328.6 557.0,330.3 556.0,329.3 555.0,329.2 554.0,329.1 553.0,329.6 552.0,331.9 551.0,328.6 550.0,328.4 549.0,328.3 548.0,331.2 547.0,328.6 546.0,330.0 545.0,330.4 544.0,329.9 543.0,331.5 542.0,329.6 541.0,329.7 540.0,329.5 539.0,329.5 538.0,329.4 537.0,328.9 536.0,329.5 535.0,328.7 534.0,334.2 533.0,329.4 532.0,328.6 531.0,328.4 530.0,328.3 529.0,328.3 528.0,330.1 527.0,329.7 526.0,329.2 525.0,328.5 524.0,331.0 523.0,330.5 522.0,330.2 521.0,331.1 520.0,330.2 519.0,332.8 518.0,332.1 517.0,332.3 516.0,330.8 515.0,330.0 514.0,329.7 513.0,329.6 512.0,330.5 511.0,329.4 510.0,330.5 509.0,331.2 508.0,332.3 507.0,329.8 506.0,331.3 505.0,333.6 504.0,332.0 503.0,330.6 502.0,329.1 501.0,330.3 500.0,328.9 499.0,328.5 498.0,329.2 497.0,329.5 496.0,330.3 495.0,331.5 494.0,329.9 493.0,328.3 492.0,329.7 491.0,328.0 490.0,329.3 489.0,328.2 488.0,329.8 487.0,328.5 486.0,328.4 485.0,328.3 484.0,328.4 483.0,327.9 482.0,328.2 481.0,327.9 480.0,327.9 479.0,327.8 478.0,327.8 477.0,328.0 476.0,327.9 475.0,327.8 474.0,327.8 473.0,327.7 472.0,327.8 471.0,327.7 470.0,327.7 469.0,327.8 468.0,327.7 467.0,327.7 466.0,327.8 465.0,327.8 464.0,327.8 463.0,327.8 462.0,327.8 461.0,327.8 460.0,327.8 459.0,327.8 458.0,327.8 457.0,327.8 456.0,327.7 455.0,327.8 454.0,327.9 453.0,327.9 452.0,328.5 451.0,328.2 450.0,328.1 449.0,328.0 448.0,327.8 447.0,328.5 446.0,328.2 445.0,328.0 444.0,327.9 443.0,328.0 442.0,328.1 441.0,329.0 440.0,328.0 439.0,328.0 438.0,329.3 437.0,328.1 436.0,327.9 435.0,328.0 434.0,329.0 433.0,328.3 432.0,329.2 431.0,328.4 430.0,328.4 429.0,328.4 428.0,329.0 427.0,329.0 426.0,328.4 425.0,328.2 424.0,328.9 423.0,328.2 422.0,328.7 421.0,328.2 420.0,328.9 419.0,329.1 418.0,329.8 417.0,328.4 416.0,330.5 415.0,328.7 414.0,329.5 413.0,330.3 412.0,332.1 411.0,328.8 410.0,328.5 409.0,330.0 408.0,329.4 407.0,330.1 406.0,331.9 405.0,329.1 404.0,329.4 403.0,329.6 402.0,328.9 401.0,329.5 400.0,328.5 399.0,330.6 398.0,330.3 397.0,328.4 396.0,328.2 395.0,331.8 394.0,328.3 393.0,331.9 392.0,334.5 391.0,329.3 390.0,330.1 389.0,328.6 388.0,331.4 387.0,329.9 386.0,329.7 385.0,329.9 384.0,328.6 383.0,328.9 382.0,329.2 381.0,328.7 380.0,328.3 379.0,330.1 378.0,330.8 377.0,330.8 376.0,330.3 375.0,330.3 374.0,328.8 373.0,334.0 372.0,328.7 371.0,329.8 370.0,334.3 369.0,332.6 368.0,329.3 367.0,330.3 366.0,330.8 365.0,328.5 364.0,330.5 363.0,330.3 362.0,329.5 361.0,331.5 360.0,329.9 359.0,328.7 358.0,330.0 357.0,328.5 356.0,331.0 355.0,330.6 354.0,328.5 353.0,328.6 352.0,329.8 351.0,329.9 350.0,328.9 349.0,330.4 348.0,329.5 347.0,328.9 346.0,329.6 345.0,332.3 344.0,332.5 343.0,332.1 342.0,331.1 341.0,334.9 340.0,331.9 339.0,328.6 338.0,333.1 337.0,332.6 336.0,336.3 335.0,332.9 334.0,329.5 333.0,329.6 332.0,331.1 331.0,331.2 330.0,331.1 329.0,331.2 328.0,329.7 327.0,331.5 326.0,329.5 325.0,330.3 324.0,330.6 323.0,328.6 322.0,329.7 321.0,329.7 320.0,329.3 319.0,330.2 318.0,332.8 317.0,329.6 316.0,330.6 315.0,328.5 314.0,333.6 313.0,329.1 312.0,331.2 311.0,328.9 310.0,331.8 309.0,329.9 308.0,328.8 307.0,336.1 306.0,329.8 305.0,330.7 304.0,329.1 303.0,329.5 302.0,330.1 301.0,328.6 300.0,329.4 299.0,331.4 298.0,331.5 297.0,330.3 296.0,331.0 295.0,328.6 294.0,328.8 293.0,328.4 292.0,330.0 291.0,328.2 290.0,329.6 289.0,330.4 288.0,329.1 287.0,328.5 286.0,328.6 285.0,328.7 284.0,328.5 283.0,327.9 282.0,328.6 281.0,328.3 280.0,327.9 279.0,327.9 278.0,328.0 277.0,327.8 276.0,327.8 275.0,327.9 274.0,327.8 273.0,327.8 272.0,327.8 271.0,327.8 270.0,327.8 269.0,327.8 268.0,327.8 267.0,327.8 266.0,327.7 265.0,327.8 264.0,327.7 263.0,327.7 262.0,327.7 261.0,327.7 260.0,327.8 259.0,327.8 258.0,327.8 257.0,327.8 256.0,327.7 255.0,327.8 254.0,327.7 253.0,327.8 252.0,327.8 251.0,327.7 250.0,327.8 249.0,327.7 248.0,327.8 247.0,327.7 246.0,327.7 245.0,327.8 244.0,327.8 243.0,327.8 242.0,327.8 241.0,327.8 240.0,327.8 239.0,327.8 238.0,327.8 237.0,327.9 236.0,327.8 235.0,327.8 234.0,327.9 233.0,327.8 232.0,328.1 231.0,328.1 230.0,327.8 229.0,327.9 228.0,328.4 227.0,328.5 226.0,329.2 225.0,328.1 224.0,329.8 223.0,328.8 222.0,328.9 221.0,328.5 220.0,328.7 219.0,330.2 218.0,328.7 217.0,330.3 216.0,329.5 215.0,329.6 214.0,328.5 213.0,332.4 212.0,328.6 211.0,332.7 210.0,329.6 209.0,329.1 208.0,328.0 207.0,328.0 206.0,328.5 205.0,328.0 204.0,327.9 203.0,328.0 202.0,328.2 201.0,327.9 200.0,327.9 199.0,327.8 198.0,327.9 197.0,327.7 196.0,327.7 195.0,327.7 194.0,327.7 193.0,327.8 192.0,327.7 191.0,327.8 190.0,327.7Z" fill="#1f1f1f"/>
<rect x="186.0" y="326.8" width="508.0" height="1.0" fill="#2a2a2a" opacity=".75"/>
<rect x="192.0" y="344.5" width="1.2" height="2.5" fill="#333" opacity=".8"/>
<text x="194.5" y="349.5" font-size="3.6" fill="#222" opacity=".7">0:00</text>
<rect x="226.5" y="344.5" width="1.2" height="2.5" fill="#333" opacity=".8"/>
<text x="229.0" y="349.5" font-size="3.6" fill="#222" opacity=".7">0:05</text>
<rect x="261.0" y="344.5" width="1.2" height="2.5" fill="#333" opacity=".8"/>
<text x="263.5" y="349.5" font-size="3.6" fill="#222" opacity=".7">0:10</text>
<rect x="295.5" y="344.5" width="1.2" height="2.5" fill="#333" opacity=".8"/>
<text x="298.0" y="349.5" font-size="3.6" fill="#222" opacity=".7">0:15</text>
<rect x="330.0" y="344.5" width="1.2" height="2.5" fill="#333" opacity=".8"/>
<text x="332.5" y="349.5" font-size="3.6" fill="#222" opacity=".7">0:20</text>
<rect x="364.5" y="344.5" width="1.2" height="2.5" fill="#333" opacity=".8"/>
<text x="367.0" y="349.5" font-size="3.6" fill="#222" opacity=".7">0:25</text>
<rect x="399.0" y="344.5" width="1.2" height="2.5" fill="#333" opacity=".8"/>
<text x="401.5" y="349.5" font-size="3.6" fill="#222" opacity=".7">0:30</text>
<rect x="433.5" y="344.5" width="1.2" height="2.5" fill="#333" opacity=".8"/>
<text x="436.0" y="349.5" font-size="3.6" fill="#222" opacity=".7">0:35</text>
<rect x="468.0" y="344.5" width="1.2" height="2.5" fill="#333" opacity=".8"/>
<text x="470.5" y="349.5" font-size="3.6" fill="#222" opacity=".7">0:40</text>
<rect x="502.5" y="344.5" width="1.2" height="2.5" fill="#333" opacity=".8"/>
<text x="505.0" y="349.5" font-size="3.6" fill="#222" opacity=".7">0:45</text>
<rect x="537.0" y="344.5" width="1.2" height="2.5" fill="#333" opacity=".8"/>
<text x="539.5" y="349.5" font-size="3.6" fill="#222" opacity=".7">0:50</text>
<rect x="571.5" y="344.5" width="1.2" height="2.5" fill="#333" opacity=".8"/>
<text x="574.0" y="349.5" font-size="3.6" fill="#222" opacity=".7">0:55</text>
<rect x="606.0" y="344.5" width="1.2" height="2.5" fill="#333" opacity=".8"/>
<text x="608.5" y="349.5" font-size="3.6" fill="#222" opacity=".7">0:60</text>
<rect x="640.5" y="344.5" width="1.2" height="2.5" fill="#333" opacity=".8"/>
<text x="643.0" y="349.5" font-size="3.6" fill="#222" opacity=".7">0:65</text>
<rect x="675.0" y="344.5" width="1.2" height="2.5" fill="#333" opacity=".8"/>
<text x="677.5" y="349.5" font-size="3.6" fill="#222" opacity=".7">0:70</text>
<rect x="694.0" y="281.0" width="4.0" height="62.5" fill="#9a9a9a" />
<rect x="0.0" y="350.5" width="700.0" height="2.0" fill="#6a6a6a" />
<rect x="0.0" y="352.5" width="700.0" height="13.5" fill="#858585" />
<rect x="0.0" y="352.5" width="572.0" height="8.5" fill="#8e8e8e" />
<rect x="574.5" y="354.0" width="2.5" height="8.5" fill="#2c2c2c" />
<rect x="578.0" y="355.0" width="20.0" height="7.0" fill="#b9b9b9" />
<rect x="601.0" y="355.0" width="5.0" height="7.0" fill="#9c9c9c" />
<rect x="609.0" y="355.0" width="20.0" height="7.0" fill="#b6b6b6" />
<rect x="632.0" y="355.0" width="25.0" height="7.0" fill="#ababab" />
<rect x="655.0" y="355.5" width="3.0" height="6.5" fill="#777" />
<text x="665.5" y="361.2" font-size="5" fill="#1e1e1e" >Audio</text>
<circle cx="692.5" cy="358.5" r="2.6" fill="#929292" stroke="#5e5e5e" stroke-width="0.8" />
<rect x="0.0" y="364.6" width="700.0" height="1.4" fill="#6c6c6c" />

</svg>
</div>
<div id="nshadow"></div>
<div id="notes">
<div id="tb">
<span class="dot" style="left:12.2px"></span><span class="dot" style="left:30.8px"></span><span class="dot" style="left:49.5px"></span><span class="btn" style="left:73.0px;width:32.0px;border-radius:4px 0 0 4px;"><svg width="32" height="20"><g stroke="#9a9a9a" stroke-width="1.3"><path d="M10 7h12M10 10.5h12M10 14h12"/></g></svg></span><span class="btn" style="left:105.0px;width:31.0px;border-radius:0 4px 4px 0;background:#6c6c6c;"><svg width="31" height="20"><g fill="#e9e9e9"><rect x="11" y="5" width="3.6" height="4.2"/><rect x="16.4" y="5" width="3.6" height="4.2"/><rect x="11" y="10.8" width="3.6" height="4.2"/><rect x="16.4" y="10.8" width="3.6" height="4.2"/></g></svg></span><span class="btn" style="left:144.5px;width:34.5px;"><svg width="35" height="20"><path d="M20 5l-5.5 5.2 5.5 5.2" fill="none" stroke="#6b6b6b" stroke-width="1.7"/></svg></span><span class="btn" style="left:186.5px;width:34.5px;"><svg width="35" height="20"><g fill="none" stroke="#6b6b6b" stroke-width="1.3"><rect x="10.5" y="5" width="14" height="10.5"/><path d="M15.5 5v10.5M10.5 7.6h5"/></g></svg></span><span class="btn" style="left:229.0px;width:35.5px;"><svg width="35" height="20"><g fill="none" stroke="#6b6b6b" stroke-width="1.3"><rect x="10.5" y="5" width="14" height="10.5"/><rect x="16" y="7" width="8.5" height="5.2" fill="#6b6b6b"/></g></svg></span><span class="btn" style="left:271.5px;width:34.5px;"><svg width="35" height="22"><g fill="none" stroke="#6b6b6b" stroke-width="1.3"><path d="M11.5 6h12M17.5 2.5v3.5M13 6v10h9V6M16 8.5v5.5M19 8.5v5.5"/></g></svg></span><span class="btn" style="left:314.5px;width:35.0px;"><svg width="35" height="20"><g fill="none" stroke="#6b6b6b" stroke-width="1.3"><path d="M21 6h-8.5v9.5H22V10"/><path d="M16 12l1-3 6-6 1.8 1.8-6 6z" stroke-width="1.1"/></g></svg></span><span class="btn" style="left:356.5px;width:35.5px;"><svg width="36" height="20"><g fill="none" stroke="#8a8a8a" stroke-width="1.2"><rect x="7.5" y="9" width="7.5" height="6.5" fill="#dcdcdc"/><path d="M9 9V6.2a2.3 2.3 0 0 1 4.6 0V9"/><path d="M23.5 9.5l2.4 2.4 2.4-2.4"/></g></svg></span><span class="btn" style="left:399.5px;width:35.0px;"><svg width="35" height="20"><g fill="none" stroke="#4e4e4e" stroke-width="1.4"><circle cx="13.5" cy="12.3" r="3.2"/><circle cx="20" cy="9" r="4.2"/><path d="M9 15.5h15" stroke-width="1.6"/><circle cx="20" cy="8" r="1.2" fill="#4e4e4e"/></g></svg></span><svg class="abs" style="left:561px;top:11px;filter:blur(.4px)" width="14" height="12"><path d="M2 2.5l3.5 3.5L2 9.5M7.5 2.5L11 6 7.5 9.5" fill="none" stroke="#8a8a8a" stroke-width="1.3"/></svg>
</div>
<div id="txt">
<div id="L0" style="top:1.30px;letter-spacing:-0.045px">PORTAL (interlude)</div>
<div id="L1" style="top:16.13px;letter-spacing:0.154px">9. Let us call the world in which we live the world-for-us. This is the world that we, as human</div>
<div id="L2" style="top:30.96px;letter-spacing:0.169px">beings, interpret and give meaning to, the world that we relate to or feel alienated from, the world</div>
<div id="L3" style="top:45.79px;letter-spacing:0.208px">that we are at once a part of and that is also separate from the human. But this world often “bites</div>
<div id="L4" style="top:60.62px;letter-spacing:0.199px">back,” resists, or ignores our attempts to mold it into the world-for-us. Let us call this the world-in-</div>
<div id="L5" style="top:75.45px;letter-spacing:0.130px">itself. This is the world in some inaccessible, already-given state.</div>
<div id="L7" style="top:105.11px;letter-spacing:0.197px">10. Tragically, we are most reminded of the world-in-itself when the world-in-itself is manifest in</div>
<div id="L8" style="top:119.94px;letter-spacing:0.219px">the form of natural disasters.</div>
<div id="L10" style="top:149.60px;letter-spacing:-0.446px">GROUP A</div>
<div id="L12" style="top:179.26px;letter-spacing:-0.608px">DARKBLACKPURPLE</div>
<div id="L13" style="top:194.09px;letter-spacing:0.085px">11. Plagues, think of the medieval Black Death, have often been seen as a divine punishment of</div>
<div id="L14" style="top:208.92px;letter-spacing:0.155px">some sort. An angry god sending down, or creating, a form of life indissociable from decay,</div>
<div id="L15" style="top:223.75px;letter-spacing:0.152px">decomposition, and death. The Creator, punishing his creation with something the opposite of it; a</div>
<div id="L16" style="top:238.58px;letter-spacing:0.199px">strange type of life that de-creates, that tries to annihilate. The threat is not simply an enemy</div>
<div id="L17" style="top:253.41px;letter-spacing:0.202px">nation or terrorist group, the threat is itself biological; biological life itself becomes the absolute</div>
<div id="L18" style="top:268.24px;letter-spacing:0.154px">enemy. Life is weaponized against Life, resulting in an ambient Angst towards the biological</div>
<div id="L19" style="top:283.07px;letter-spacing:0.085px">domain itself.</div>
<div id="L21" style="top:312.73px;letter-spacing:0.096px">12. Is this the world, biting back at us?</div>
<div id="L23" style="top:342.39px;letter-spacing:-0.008px">HOTEL (interlude)</div>
<div id="L25" style="top:372.05px;letter-spacing:0.134px">13. Our very concepts regarding disasters generally betray a profound anxiety. That some</div>
<div id="L26" style="top:386.88px;letter-spacing:0.196px">disasters are “natural” while others are not implies a hypothetical line between the disaster that</div>
<div id="L27" style="top:401.71px;letter-spacing:0.190px">can be prevented (and thus controlled), and the disaster that cannot. The case of infectious</div>
<div id="L28" style="top:416.54px;letter-spacing:0.220px">diseases is similar, except that the agency or the activity of this “biological disaster” courses</div>
<div id="L29" style="top:431.37px;letter-spacing:0.125px">through human beings themselves – within bodies, between bodies, and through the networks of</div>
<div id="L30" style="top:446.20px;letter-spacing:0.175px">global transit and exchange that form bodies politic.</div>
<div id="L32" style="top:475.86px;letter-spacing:0.189px">14. All of this is to suggest that the political theology of pestilence is not an issue of shutting-down</div>
<div id="L33" style="top:490.69px;letter-spacing:0.189px">or “walling.” It is, certainly, that, but only to an extent. For the pervasive, diffuse, and circulatory</div>
<div id="L34" style="top:505.52px;letter-spacing:0.216px">quality of pestilence – this “thing” or “event” that is at once a divine emanation and yet a source of</div>
<div id="L35" style="top:520.35px;letter-spacing:0.129px">social and political chaos – raises a more complex problem for sovereign power: how to control the</div>
<div id="L36" style="top:535.18px;letter-spacing:0.133px">pervasiveness of pestilence without losing control of the pervasiveness of people.”</div>
<div id="L38" style="top:564.84px;letter-spacing:-0.875px">FOG</div>
<div id="L39" style="top:579.67px;letter-spacing:0.165px">15. It doesn’t help anyone. There is no being-on-the-side-of the world, much less nature or the</div>
<div id="L40" style="top:594.50px;letter-spacing:0.178px">weather. If anything, the apparent prevalence of natural disasters and global pandemics indicates</div>
<div id="L41" style="top:609.33px;letter-spacing:0.169px">that we are not on the side of the world, but that the world is against us. But even this is too</div>
<div id="L42" style="top:624.16px;letter-spacing:0.181px">anthropocentric a view, as if the world harbored some misanthropic vendetta against humanity. It</div>
<div id="L43" style="top:638.99px;letter-spacing:0.133px">would be more accurate – and more horrific, in a sense – to say that the world is indifferent to us as</div>
<div id="L44" style="top:653.82px;letter-spacing:-0.043px">human beings.</div>
<div id="L45" style="top:668.65px;letter-spacing:0.134px">On the one hand we as human beings are the problem; on the other hand at the planetary level of</div>
<div id="L46" style="top:683.48px;letter-spacing:0.151px">the Earth’s deep time, nothing could be more insignificant than the human.</div>
<div id="L48" style="top:713.14px;letter-spacing:-0.396px">OUTSIDE OF A DREAM</div>
<div id="L49" style="top:727.97px;letter-spacing:0.115px">16. The idea of our existence in a world that is profoundly indifferent to us, can be horrifying. On</div>
</div>
<div id="sb"></div>
</div>
<svg id="photo" width="480" height="330" viewBox="0 0 480 330">
<defs><filter id="pb" x="-3%" y="-3%" width="106%" height="106%"><feGaussianBlur stdDeviation="1.55"/></filter><clipPath id="pc"><rect x="0.6" y="0.9" width="479.4" height="328.4"/></clipPath><linearGradient id="flg" x1="0" y1="0" x2="0" y2="1"><stop offset="0" stop-color="#77827d"/><stop offset=".32" stop-color="#8f9994"/><stop offset=".5" stop-color="#b3b9b4"/><stop offset="1" stop-color="#bcc0bc"/></linearGradient><linearGradient id="wlg" x1="0" y1="0" x2="0" y2="1"><stop offset="0" stop-color="#e4e6e3"/><stop offset=".55" stop-color="#d9dbd8"/><stop offset="1" stop-color="#c4c7c3"/></linearGradient></defs>
<g clip-path="url(#pc)"><g filter="url(#pb)">

<polygon points="-10.0,-5.0 251.5,-5.0 251.5,340.2 -10.0,340.2" fill="url(#flg)" />
<polyline points="24.7,175.5 16.1,200.9" fill="none" stroke="#dadcd9" stroke-width="2.0532963657848278" stroke-linecap="round" stroke-linejoin="round" opacity="0.55"/>
<polyline points="59.7,182.9 49.4,222.4" fill="none" stroke="#8c9690" stroke-width="1.6668372257904136" stroke-linecap="round" stroke-linejoin="round" opacity="0.55"/>
<polyline points="24.4,229.8 14.8,257.8" fill="none" stroke="#dadcd9" stroke-width="2.057435775658803" stroke-linecap="round" stroke-linejoin="round" opacity="0.55"/>
<polyline points="65.6,128.2 57.7,160.5" fill="none" stroke="#dadcd9" stroke-width="1.9018860975969831" stroke-linecap="round" stroke-linejoin="round" opacity="0.55"/>
<polyline points="2.0,203.6 -5.8,223.4" fill="none" stroke="#dadcd9" stroke-width="1.277020252811028" stroke-linecap="round" stroke-linejoin="round" opacity="0.55"/>
<polyline points="80.0,209.1 75.2,231.9" fill="none" stroke="#dadcd9" stroke-width="2.4938830633184454" stroke-linecap="round" stroke-linejoin="round" opacity="0.55"/>
<polyline points="90.1,196.0 82.5,235.7" fill="none" stroke="#8c9690" stroke-width="2.510626751494674" stroke-linecap="round" stroke-linejoin="round" opacity="0.55"/>
<polyline points="59.3,226.0 54.3,245.2" fill="none" stroke="#98a29c" stroke-width="1.3754177575155788" stroke-linecap="round" stroke-linejoin="round" opacity="0.55"/>
<polyline points="14.3,136.2 -0.6,177.1" fill="none" stroke="#8c9690" stroke-width="2.6021506542560973" stroke-linecap="round" stroke-linejoin="round" opacity="0.55"/>
<polyline points="87.7,160.7 80.3,198.2" fill="none" stroke="#dadcd9" stroke-width="1.8316388797863241" stroke-linecap="round" stroke-linejoin="round" opacity="0.55"/>
<polyline points="60.1,180.3 49.9,219.7" fill="none" stroke="#d0d4d0" stroke-width="2.74152101951416" stroke-linecap="round" stroke-linejoin="round" opacity="0.55"/>
<polyline points="101.5,190.8 98.3,210.8" fill="none" stroke="#98a29c" stroke-width="2.9363393051563103" stroke-linecap="round" stroke-linejoin="round" opacity="0.55"/>
<polyline points="92.7,178.5 86.4,212.9" fill="none" stroke="#c8ccc8" stroke-width="2.3393566287822596" stroke-linecap="round" stroke-linejoin="round" opacity="0.55"/>
<polyline points="101.2,142.2 98.1,161.1" fill="none" stroke="#8c9690" stroke-width="2.737096479160824" stroke-linecap="round" stroke-linejoin="round" opacity="0.55"/>
<polyline points="101.4,120.7 95.4,157.3" fill="none" stroke="#8c9690" stroke-width="2.8147730847550756" stroke-linecap="round" stroke-linejoin="round" opacity="0.55"/>
<polyline points="2.5,161.4 -7.9,188.0" fill="none" stroke="#d0d4d0" stroke-width="1.279542110033178" stroke-linecap="round" stroke-linejoin="round" opacity="0.55"/>
<polyline points="63.1,115.5 54.4,149.9" fill="none" stroke="#98a29c" stroke-width="2.191532593858462" stroke-linecap="round" stroke-linejoin="round" opacity="0.55"/>
<polyline points="94.5,143.6 90.5,165.5" fill="none" stroke="#d0d4d0" stroke-width="1.75740609625741" stroke-linecap="round" stroke-linejoin="round" opacity="0.55"/>
<polyline points="8.3,182.2 2.1,198.7" fill="none" stroke="#c8ccc8" stroke-width="2.948571584629156" stroke-linecap="round" stroke-linejoin="round" opacity="0.55"/>
<polyline points="30.2,141.7 19.1,175.5" fill="none" stroke="#98a29c" stroke-width="1.764894935848965" stroke-linecap="round" stroke-linejoin="round" opacity="0.55"/>
<polyline points="98.2,217.9 93.8,243.5" fill="none" stroke="#8c9690" stroke-width="2.7658047373304617" stroke-linecap="round" stroke-linejoin="round" opacity="0.55"/>
<polyline points="39.8,214.3 29.6,247.8" fill="none" stroke="#d0d4d0" stroke-width="2.3162270438014714" stroke-linecap="round" stroke-linejoin="round" opacity="0.55"/>
<polyline points="96.4,171.1 91.6,198.0" fill="none" stroke="#c8ccc8" stroke-width="2.88558462516931" stroke-linecap="round" stroke-linejoin="round" opacity="0.55"/>
<polyline points="45.1,141.1 38.1,164.7" fill="none" stroke="#98a29c" stroke-width="1.2206234754555942" stroke-linecap="round" stroke-linejoin="round" opacity="0.55"/>
<polyline points="42.8,179.8 38.0,196.0" fill="none" stroke="#dadcd9" stroke-width="2.260565663411654" stroke-linecap="round" stroke-linejoin="round" opacity="0.55"/>
<polyline points="14.1,186.3 5.2,210.7" fill="none" stroke="#98a29c" stroke-width="2.4227065164685957" stroke-linecap="round" stroke-linejoin="round" opacity="0.55"/>
<polygon points="-2.2,-2.4 93.3,-2.4 93.3,19.8 -2.2,39.5" fill="#8a7564" />
<polygon points="-2.2,-2.4 42.3,-2.4 42.3,10.7 -2.2,18.5" fill="#7b6858" opacity="0.7" />
<ellipse cx="8.3" cy="29.0" rx="4.7" ry="5.8" fill="#c8c4bc" opacity="0.9"/>
<polygon points="-2.2,39.5 93.3,19.8 93.3,81.3 21.4,82.6 -2.2,74.8" fill="#47494a" />
<polygon points="17.5,48.6 93.3,34.2 93.3,40.0 17.5,55.1" fill="#a59c8e" />
<polygon points="18.8,56.5 93.3,48.6 93.3,53.8 18.8,62.5" fill="#8d8679" opacity="0.9" />
<polygon points="18.8,63.5 93.3,55.7 93.3,81.3 21.4,82.6" fill="#3b4140" />
<ellipse cx="29.2" cy="31.6" rx="2.6" ry="3.1" fill="#c9c6be" opacity="0.9"/>
<ellipse cx="39.7" cy="29.5" rx="2.6" ry="3.1" fill="#5a4a40" opacity="0.9"/>
<ellipse cx="52.8" cy="26.9" rx="2.6" ry="3.1" fill="#5a4a40" opacity="0.9"/>
<ellipse cx="65.8" cy="24.3" rx="2.6" ry="3.1" fill="#c9c6be" opacity="0.9"/>
<ellipse cx="76.3" cy="22.2" rx="2.6" ry="3.1" fill="#5a4a40" opacity="0.9"/>
<ellipse cx="85.4" cy="20.4" rx="2.6" ry="3.1" fill="#c9c6be" opacity="0.9"/>
<ellipse cx="48.8" cy="43.4" rx="5.8" ry="3.7" fill="#1e1e20"/>
<polygon points="0.5,53.8 16.2,51.2 20.1,73.5 1.8,76.1" fill="#d9dedb" />
<polygon points="4.4,81.3 26.6,81.3 26.6,85.2 4.4,86.5" fill="#c3c8c4" />
<polyline points="7.0,85.2 7.0,110.1" fill="none" stroke="#6c7472" stroke-width="3" stroke-linecap="round" stroke-linejoin="round"/>
<polyline points="24.0,83.9 24.5,107.4" fill="none" stroke="#7c8482" stroke-width="3" stroke-linecap="round" stroke-linejoin="round"/>
<polygon points="26.6,82.6 94.6,81.3 107.7,117.9 0.5,117.9 0.5,110.1 26.6,107.4" fill="#6f7b77" opacity="0.85" />
<polygon points="102.4,-2.4 173.1,-2.4 173.1,43.4 108.2,43.4" fill="#4c524f" />
<polygon points="107.7,10.7 170.4,10.7 170.4,21.2 109.0,23.8" fill="#6d726d" />
<polygon points="112.9,19.8 157.4,19.8 157.4,38.1 112.9,39.5" fill="#3a403e" />
<polygon points="128.6,2.8 144.3,2.8 144.3,13.3 128.6,13.3" fill="#7a7468" />
<polygon points="108.2,42.1 173.1,40.0 173.6,47.3 109.0,49.4" fill="#d4d6d0" />
<polygon points="109.8,49.4 174.4,47.3 179.6,89.1 115.0,92.3" fill="#717c77" />
<polygon points="112.9,51.2 146.9,50.4 148.2,63.5 114.2,65.1" fill="#565f5c" />
<polygon points="126.0,78.7 173.1,76.6 174.1,86.5 127.0,88.6" fill="#c8cbc5" />
<polygon points="115.0,90.4 179.6,87.1 180.9,98.3 116.6,100.9" fill="#c5c9c2" />
<polygon points="117.6,100.9 182.2,97.5 191.4,154.5 126.0,133.6" fill="#4b5a55" />
<polygon points="131.2,125.8 167.8,120.5 170.4,141.4 136.4,137.5" fill="#8c9a98" opacity="0.8" />
<polyline points="136.4,99.6 183.5,141.4" fill="none" stroke="#9aa6a2" stroke-width="2" stroke-linecap="round" stroke-linejoin="round" opacity="0.7"/>
<polyline points="173.1,99.6 136.4,125.8" fill="none" stroke="#8a9692" stroke-width="2" stroke-linecap="round" stroke-linejoin="round" opacity="0.6"/>
<polygon points="148.2,60.4 191.4,54.6 193.5,63.5 150.0,69.5" fill="#c6323a" />
<polygon points="160.0,47.3 188.7,44.7 190.1,55.1 161.3,57.8" fill="#d8d8d4" opacity="0.85" />
<polygon points="199.2,-2.4 251.5,-2.4 251.5,82.6 208.4,82.6" fill="#2c2e2f" />
<polygon points="203.1,1.5 225.4,1.5 225.4,22.5 203.9,22.5" fill="#7c8284" />
<polygon points="207.1,4.2 212.3,4.2 212.3,21.2 207.1,21.2" fill="#d0d4d4" />
<polygon points="216.2,4.2 221.4,4.2 221.4,21.2 216.2,21.2" fill="#c6caca" />
<polygon points="204.4,31.6 226.7,30.3 226.7,36.8 205.0,38.1" fill="#b4b8b6" />
<polygon points="207.1,51.2 226.7,50.4 228.0,73.5 208.4,74.8" fill="#595f60" />
<polygon points="212.3,65.6 229.3,65.1 229.3,73.5 212.8,74.0" fill="#c9cdcb" />
<polygon points="233.7,2.8 251.5,2.8 251.5,73.5 234.8,73.5" fill="#dfe1e2" />
<polygon points="208.4,82.6 251.5,82.6 251.5,154.5 218.0,154.5" fill="#67726c" />
<polygon points="212.3,85.2 251.5,83.9 251.5,94.4 213.6,97.0" fill="#8a948e" />
<polyline points="214.9,141.4 251.5,104.8" fill="none" stroke="#9aa49e" stroke-width="2" stroke-linecap="round" stroke-linejoin="round" opacity="0.7"/>
<polygon points="92.5,-2.4 105.1,-2.4 122.8,131.5 109.0,132.3" fill="#e7dfc9" />
<polygon points="167.8,-2.4 178.8,-2.4 199.2,162.4 189.3,165.0" fill="#e9e1cc" />
<polygon points="188.0,-2.4 199.2,-2.4 217.0,155.0 207.1,155.8" fill="#e3dbc6" />
<polygon points="199.2,145.4 241.0,144.1 241.0,151.9 200.5,154.0" fill="#d8d2c0" />
<polygon points="132.5,146.7 191.4,151.9 194.0,188.5 143.0,189.8" fill="#8b8c86" />
<polygon points="139.1,151.9 173.1,151.9 173.1,162.4 139.1,162.4" fill="#c4c8c6" />
<polyline points="157.4,154.5 161.3,178.1 146.9,188.5" fill="none" stroke="#222" stroke-width="2.2" stroke-linecap="round" stroke-linejoin="round"/>
<polyline points="146.9,162.4 173.1,183.3" fill="none" stroke="#2a2a2a" stroke-width="2" stroke-linecap="round" stroke-linejoin="round"/>
<polygon points="204.4,159.7 251.5,158.4 251.5,189.8 212.3,189.8" fill="#c7c8c2" />
<polygon points="143.0,188.5 251.5,187.2 251.5,222.5 196.6,222.5 194.0,231.7 146.9,213.4" fill="#b98a5a" />
<polygon points="214.9,191.1 251.5,190.6 251.5,219.9 220.1,220.4" fill="#e2b68c" />
<polygon points="144.3,189.8 173.1,189.8 178.3,204.2 146.9,204.2" fill="#a88a5c" />
<polygon points="214.9,182.0 235.8,181.2 235.8,187.2 215.4,188.0" fill="#2c201c" />
<polyline points="234.5,162.4 233.2,219.9" fill="none" stroke="#1c1c1c" stroke-width="2.2" stroke-linecap="round" stroke-linejoin="round"/>
<polygon points="187.4,165.0 203.1,163.7 207.1,196.4 184.8,201.6" fill="#4a1616" />
<polygon points="191.4,178.1 205.0,176.0 207.1,192.4 192.9,195.1" fill="#d09888" />
<ellipse cx="195.3" cy="165.0" rx="7.3" ry="3.7" fill="#b8bcbc" opacity="0.9"/>
<polygon points="170.4,201.6 188.7,193.7 196.6,204.2 178.3,208.1" fill="#201818" />
<ellipse cx="207.1" cy="207.3" rx="16.2" ry="5.8" fill="#d2d2cc"/>
<ellipse cx="167.8" cy="210.0" rx="18.3" ry="3.1" fill="#e2e2de" transform="rotate(4 167.8 210.0)"/>
<ellipse cx="199.2" cy="217.3" rx="13.1" ry="4.2" fill="#2a2420"/>
<polygon points="77.6,150.6 93.3,137.5 132.5,130.5 143.0,205.5 112.9,208.1" fill="#0b0b0d" />
<polygon points="75.8,179.4 94.1,143.5 114.2,202.9 92.5,223.8" fill="#e6e7ea" />
<polygon points="84.7,187.2 101.1,178.1 106.9,204.2 95.1,214.1" fill="#26282c" />
<polygon points="81.5,162.4 92.5,148.0 97.2,162.4 87.3,175.4" fill="#babcc2" />
<polygon points="118.1,205.5 190.1,228.3 196.6,293.6 115.0,246.6" fill="#dedede" />
<polygon points="121.3,213.4 157.4,225.6 160.5,260.4 120.2,243.4" fill="#b4b4b4" />
<polyline points="122.1,217.3 158.7,229.8" fill="none" stroke="#e6e6e6" stroke-width="1.2" stroke-linecap="round" stroke-linejoin="round" opacity="0.8"/>
<polyline points="122.3,222.0 158.9,235.1" fill="none" stroke="#e6e6e6" stroke-width="1.2" stroke-linecap="round" stroke-linejoin="round" opacity="0.8"/>
<polyline points="122.6,226.7 159.2,240.3" fill="none" stroke="#e6e6e6" stroke-width="1.2" stroke-linecap="round" stroke-linejoin="round" opacity="0.8"/>
<polyline points="122.8,231.4 159.5,245.5" fill="none" stroke="#e6e6e6" stroke-width="1.2" stroke-linecap="round" stroke-linejoin="round" opacity="0.8"/>
<polyline points="123.1,236.1 159.7,250.8" fill="none" stroke="#e6e6e6" stroke-width="1.2" stroke-linecap="round" stroke-linejoin="round" opacity="0.8"/>
<polyline points="123.4,240.8 160.0,256.0" fill="none" stroke="#e6e6e6" stroke-width="1.2" stroke-linecap="round" stroke-linejoin="round" opacity="0.8"/>
<polygon points="80.2,229.0 112.9,225.1 115.5,246.0 81.5,246.0" fill="#9c9c9c" />
<polygon points="42.3,236.1 77.6,230.4 80.2,246.6 116.0,247.6 126.5,282.7 137.8,340.2 41.0,340.2 28.7,291.0" fill="#0c0c0e" />
<polygon points="76.8,269.6 105.1,271.7 105.6,288.4 78.9,285.8" fill="#9e9e9e" />
<ellipse cx="25.3" cy="260.4" rx="14" ry="16" fill="none" stroke="#141414" stroke-width="2.6"/>
<polyline points="1.8,301.0 13.5,284.0 34.5,278.7" fill="none" stroke="#141414" stroke-width="2.6" stroke-linecap="round" stroke-linejoin="round"/>
<polyline points="76.3,246.0 102.4,243.4 126.0,256.5 146.9,277.4" fill="none" stroke="#1a1a1a" stroke-width="2.4" stroke-linecap="round" stroke-linejoin="round"/>
<polyline points="105.1,256.5 136.4,264.4 173.1,290.5" fill="none" stroke="#222" stroke-width="2" stroke-linecap="round" stroke-linejoin="round"/>
<polygon points="196.6,223.0 251.5,217.3 251.5,278.7 205.0,283.2" fill="#1d1d20" />
<polygon points="201.3,228.5 225.4,225.6 233.7,274.3 207.6,277.9" fill="#8f9899" />
<polygon points="203.9,230.4 209.1,229.8 209.9,237.7 204.7,238.2" fill="#3a4446" opacity="0.85" />
<polygon points="211.8,230.4 217.0,229.8 217.8,237.7 212.5,238.2" fill="#3a4446" opacity="0.85" />
<polygon points="219.6,230.4 224.8,229.8 225.6,237.7 220.4,238.2" fill="#3a4446" opacity="0.85" />
<polygon points="205.7,242.1 211.0,241.6 211.8,249.4 206.5,250.0" fill="#3a4446" opacity="0.85" />
<polygon points="213.6,242.1 218.8,241.6 219.6,249.4 214.4,250.0" fill="#3a4446" opacity="0.85" />
<polygon points="221.4,242.1 226.7,241.6 227.4,249.4 222.2,250.0" fill="#3a4446" opacity="0.85" />
<polygon points="207.6,253.9 212.8,253.4 213.6,261.2 208.4,261.7" fill="#3a4446" opacity="0.85" />
<polygon points="215.4,253.9 220.6,253.4 221.4,261.2 216.2,261.7" fill="#3a4446" opacity="0.85" />
<polygon points="223.3,253.9 228.5,253.4 229.3,261.2 224.0,261.7" fill="#3a4446" opacity="0.85" />
<polygon points="209.4,265.7 214.6,265.1 215.4,273.0 210.2,273.5" fill="#3a4446" opacity="0.85" />
<polygon points="217.2,265.7 222.5,265.1 223.3,273.0 218.0,273.5" fill="#3a4446" opacity="0.85" />
<polygon points="225.1,265.7 230.3,265.1 231.1,273.0 225.9,273.5" fill="#3a4446" opacity="0.85" />
<polygon points="226.7,225.1 251.5,222.0 251.5,272.2 234.8,273.8" fill="#ececec" />
<polygon points="226.7,229.0 245.0,227.0 245.5,230.1 227.2,232.2" fill="#151515" />
<polygon points="228.0,236.9 246.3,234.8 246.8,237.9 228.5,240.0" fill="#151515" />
<polygon points="229.3,244.7 247.6,242.6 248.1,245.8 229.8,247.9" fill="#151515" />
<polygon points="230.6,252.6 248.9,250.5 249.4,253.6 231.1,255.7" fill="#151515" />
<polygon points="231.9,260.4 250.2,258.3 250.7,261.5 232.4,263.6" fill="#151515" />
<polygon points="233.2,268.3 251.5,266.2 252.0,269.3 233.7,271.4" fill="#151515" />
<polygon points="126.0,282.7 196.6,293.1 205.0,282.7 251.5,278.7 251.5,340.2 137.8,340.2" fill="#3b2e26" />
<polygon points="173.1,295.7 251.5,287.9 251.5,308.8 178.3,314.0" fill="#57402f" opacity="0.8" />
<polyline points="128.6,285.3 136.4,332.3" fill="none" stroke="#a8a8a4" stroke-width="1.4" stroke-linecap="round" stroke-linejoin="round" opacity="0.6"/>
<polyline points="144.3,286.8 152.7,332.3" fill="none" stroke="#a8a8a4" stroke-width="1.4" stroke-linecap="round" stroke-linejoin="round" opacity="0.6"/>
<polyline points="160.0,288.4 168.9,332.3" fill="none" stroke="#a8a8a4" stroke-width="1.4" stroke-linecap="round" stroke-linejoin="round" opacity="0.6"/>
<polyline points="175.7,290.0 185.1,332.3" fill="none" stroke="#a8a8a4" stroke-width="1.4" stroke-linecap="round" stroke-linejoin="round" opacity="0.6"/>
<polyline points="191.4,291.5 201.3,332.3" fill="none" stroke="#a8a8a4" stroke-width="1.4" stroke-linecap="round" stroke-linejoin="round" opacity="0.6"/>
<polyline points="207.1,293.1 217.5,332.3" fill="none" stroke="#a8a8a4" stroke-width="1.4" stroke-linecap="round" stroke-linejoin="round" opacity="0.6"/>
<polyline points="222.7,294.7 233.7,332.3" fill="none" stroke="#a8a8a4" stroke-width="1.4" stroke-linecap="round" stroke-linejoin="round" opacity="0.6"/>
<polyline points="126.0,285.3 188.7,295.7 251.5,298.3" fill="none" stroke="#c0c0bc" stroke-width="1.8" stroke-linecap="round" stroke-linejoin="round" opacity="0.8"/>
<polyline points="131.2,308.8 251.5,312.7" fill="none" stroke="#8c8c88" stroke-width="1.4" stroke-linecap="round" stroke-linejoin="round" opacity="0.6"/>
<polygon points="386.9,-5.0 491.5,-5.0 491.5,340.2 376.4,340.2 376.4,120.5" fill="url(#wlg)" />
<polyline points="433.7,75.7 440.4,76.3" fill="none" stroke="#cfd1ce" stroke-width="1.5" stroke-linecap="round" stroke-linejoin="round" opacity="0.6"/>
<polyline points="423.9,92.8 435.5,92.5" fill="none" stroke="#c6c9c6" stroke-width="1.5" stroke-linecap="round" stroke-linejoin="round" opacity="0.6"/>
<polyline points="452.3,142.6 459.3,143.3" fill="none" stroke="#c6c9c6" stroke-width="1.5" stroke-linecap="round" stroke-linejoin="round" opacity="0.6"/>
<polyline points="430.5,37.2 436.3,36.6" fill="none" stroke="#c6c9c6" stroke-width="1.5" stroke-linecap="round" stroke-linejoin="round" opacity="0.6"/>
<polyline points="402.3,135.1 415.8,135.7" fill="none" stroke="#eceeeb" stroke-width="1.5" stroke-linecap="round" stroke-linejoin="round" opacity="0.6"/>
<polyline points="413.4,47.7 427.0,48.3" fill="none" stroke="#eceeeb" stroke-width="1.5" stroke-linecap="round" stroke-linejoin="round" opacity="0.6"/>
<polyline points="468.9,80.1 477.7,79.4" fill="none" stroke="#c6c9c6" stroke-width="1.5" stroke-linecap="round" stroke-linejoin="round" opacity="0.6"/>
<polyline points="466.9,171.0 472.7,170.8" fill="none" stroke="#eceeeb" stroke-width="1.5" stroke-linecap="round" stroke-linejoin="round" opacity="0.6"/>
<polyline points="408.3,50.0 421.2,50.6" fill="none" stroke="#c6c9c6" stroke-width="1.5" stroke-linecap="round" stroke-linejoin="round" opacity="0.6"/>
<polyline points="397.7,149.4 405.0,149.9" fill="none" stroke="#eceeeb" stroke-width="1.5" stroke-linecap="round" stroke-linejoin="round" opacity="0.6"/>
<polyline points="398.0,21.2 408.9,20.4" fill="none" stroke="#cfd1ce" stroke-width="1.5" stroke-linecap="round" stroke-linejoin="round" opacity="0.6"/>
<polyline points="442.3,106.7 449.6,106.0" fill="none" stroke="#cfd1ce" stroke-width="1.5" stroke-linecap="round" stroke-linejoin="round" opacity="0.6"/>
<polyline points="447.5,23.0 458.8,22.5" fill="none" stroke="#c6c9c6" stroke-width="1.5" stroke-linecap="round" stroke-linejoin="round" opacity="0.6"/>
<polyline points="453.8,13.2 461.9,13.5" fill="none" stroke="#cfd1ce" stroke-width="1.5" stroke-linecap="round" stroke-linejoin="round" opacity="0.6"/>
<polyline points="455.8,144.2 467.1,143.5" fill="none" stroke="#c6c9c6" stroke-width="1.5" stroke-linecap="round" stroke-linejoin="round" opacity="0.6"/>
<polyline points="428.9,176.1 435.9,176.1" fill="none" stroke="#c6c9c6" stroke-width="1.5" stroke-linecap="round" stroke-linejoin="round" opacity="0.6"/>
<polyline points="426.1,132.4 437.5,132.8" fill="none" stroke="#cfd1ce" stroke-width="1.5" stroke-linecap="round" stroke-linejoin="round" opacity="0.6"/>
<polyline points="465.4,26.2 479.9,26.0" fill="none" stroke="#cfd1ce" stroke-width="1.5" stroke-linecap="round" stroke-linejoin="round" opacity="0.6"/>
<polyline points="428.9,191.1 440.2,190.4" fill="none" stroke="#c6c9c6" stroke-width="1.5" stroke-linecap="round" stroke-linejoin="round" opacity="0.6"/>
<polyline points="423.2,87.1 430.6,87.0" fill="none" stroke="#eceeeb" stroke-width="1.5" stroke-linecap="round" stroke-linejoin="round" opacity="0.6"/>
<polyline points="461.3,63.3 469.5,63.3" fill="none" stroke="#cfd1ce" stroke-width="1.5" stroke-linecap="round" stroke-linejoin="round" opacity="0.6"/>
<polyline points="399.4,152.5 413.0,152.5" fill="none" stroke="#c6c9c6" stroke-width="1.5" stroke-linecap="round" stroke-linejoin="round" opacity="0.6"/>
<polyline points="458.4,112.0 464.3,112.3" fill="none" stroke="#cfd1ce" stroke-width="1.5" stroke-linecap="round" stroke-linejoin="round" opacity="0.6"/>
<polyline points="473.0,80.9 482.1,81.5" fill="none" stroke="#eceeeb" stroke-width="1.5" stroke-linecap="round" stroke-linejoin="round" opacity="0.6"/>
<polyline points="408.3,60.1 420.8,60.7" fill="none" stroke="#cfd1ce" stroke-width="1.5" stroke-linecap="round" stroke-linejoin="round" opacity="0.6"/>
<polyline points="401.3,189.1 408.4,189.8" fill="none" stroke="#cfd1ce" stroke-width="1.5" stroke-linecap="round" stroke-linejoin="round" opacity="0.6"/>
<polyline points="444.9,7.7 450.8,7.2" fill="none" stroke="#eceeeb" stroke-width="1.5" stroke-linecap="round" stroke-linejoin="round" opacity="0.6"/>
<polyline points="420.4,8.2 434.0,7.9" fill="none" stroke="#eceeeb" stroke-width="1.5" stroke-linecap="round" stroke-linejoin="round" opacity="0.6"/>
<polyline points="441.4,31.3 447.6,31.4" fill="none" stroke="#c6c9c6" stroke-width="1.5" stroke-linecap="round" stroke-linejoin="round" opacity="0.6"/>
<polyline points="406.6,84.5 413.3,84.6" fill="none" stroke="#eceeeb" stroke-width="1.5" stroke-linecap="round" stroke-linejoin="round" opacity="0.6"/>
<polyline points="443.5,156.6 455.7,156.3" fill="none" stroke="#c6c9c6" stroke-width="1.5" stroke-linecap="round" stroke-linejoin="round" opacity="0.6"/>
<polyline points="466.4,98.6 472.7,97.8" fill="none" stroke="#c6c9c6" stroke-width="1.5" stroke-linecap="round" stroke-linejoin="round" opacity="0.6"/>
<polyline points="407.4,155.8 421.2,155.3" fill="none" stroke="#cfd1ce" stroke-width="1.5" stroke-linecap="round" stroke-linejoin="round" opacity="0.6"/>
<polyline points="464.8,43.7 474.9,43.8" fill="none" stroke="#c6c9c6" stroke-width="1.5" stroke-linecap="round" stroke-linejoin="round" opacity="0.6"/>
<polyline points="427.8,38.0 438.1,38.7" fill="none" stroke="#c6c9c6" stroke-width="1.5" stroke-linecap="round" stroke-linejoin="round" opacity="0.6"/>
<polyline points="402.6,128.0 413.9,128.2" fill="none" stroke="#eceeeb" stroke-width="1.5" stroke-linecap="round" stroke-linejoin="round" opacity="0.6"/>
<polyline points="440.1,104.0 450.9,104.7" fill="none" stroke="#cfd1ce" stroke-width="1.5" stroke-linecap="round" stroke-linejoin="round" opacity="0.6"/>
<polyline points="466.2,113.5 481.4,112.8" fill="none" stroke="#cfd1ce" stroke-width="1.5" stroke-linecap="round" stroke-linejoin="round" opacity="0.6"/>
<polyline points="453.9,24.9 466.4,24.8" fill="none" stroke="#eceeeb" stroke-width="1.5" stroke-linecap="round" stroke-linejoin="round" opacity="0.6"/>
<polyline points="467.1,142.4 479.4,141.7" fill="none" stroke="#cfd1ce" stroke-width="1.5" stroke-linecap="round" stroke-linejoin="round" opacity="0.6"/>
<polygon points="264.0,-5.0 392.1,-5.0 392.1,120.5 264.0,120.5" fill="#d4d7d8" />
<polygon points="308.5,-5.0 330.7,-5.0 330.7,81.3 308.5,81.3" fill="#9ea3a5" />
<polygon points="312.4,-5.0 317.6,-5.0 317.6,26.4 312.4,26.4" fill="#3b3e40" />
<polygon points="330.7,-5.0 360.8,-5.0 360.8,104.8 330.7,104.8" fill="#fbfbfb" />
<polygon points="366.0,-5.0 386.4,-5.0 386.4,110.1 366.0,110.1" fill="#fdfdfd" />
<polygon points="360.2,-5.0 366.5,-5.0 366.5,110.1 360.2,110.1" fill="#8a8e90" />
<polygon points="385.6,-5.0 393.7,-5.0 393.7,118.4 385.6,114.0" fill="#26282a" />
<polygon points="355.5,81.3 386.9,110.1 393.7,118.4 393.7,125.8 352.9,94.4" fill="#2e3032" />
<polygon points="227.4,-5.0 266.6,-5.0 266.6,81.3 227.4,81.3" fill="#2b2d2f" />
<polygon points="235.8,2.8 260.9,2.8 260.9,23.8 235.8,23.8" fill="#b9bec0" />
<polygon points="237.8,27.7 261.4,27.7 261.9,70.8 237.8,70.8" fill="#e3e5e6" />
<polygon points="237.8,43.4 261.4,43.4 261.4,51.2 237.8,51.2" fill="#6d7274" />
<polygon points="245.7,53.8 257.5,53.8 257.5,66.9 245.7,66.9" fill="#fafafa" />
<polygon points="227.4,82.6 248.3,82.6 249.6,141.4 227.4,141.4" fill="#66746c" />
<ellipse cx="235.2" cy="117.9" rx="10.5" ry="15.7" fill="#4c5a52" opacity="0.9"/>
<polygon points="227.4,141.4 245.7,141.4 245.7,151.9 227.4,151.9" fill="#c9ccc8" />
<polygon points="227.4,151.9 245.7,151.9 284.9,201.6 278.4,222.5 245.7,221.2 227.4,219.9" fill="#e9e2d6" />
<polygon points="227.4,175.4 240.5,175.4 240.5,219.9 227.4,219.9" fill="#d8a878" opacity="0.85" />
<polyline points="232.6,183.3 233.1,219.9" fill="none" stroke="#1c1c1c" stroke-width="2" stroke-linecap="round" stroke-linejoin="round"/>
<ellipse cx="254.8" cy="201.6" rx="2.1" ry="3.7" fill="#222"/>
<polygon points="227.4,222.0 248.8,219.9 265.3,276.1 227.4,281.3" fill="#151517" />
<polygon points="227.4,225.1 244.4,224.1 245.7,228.8 227.4,229.8" fill="#ededed" />
<polygon points="227.4,233.5 246.7,232.4 248.0,237.2 227.4,238.2" fill="#ededed" />
<polygon points="227.4,241.9 249.1,240.8 250.4,245.5 227.4,246.6" fill="#ededed" />
<polygon points="227.4,250.2 251.4,249.2 252.8,253.9 227.4,254.9" fill="#ededed" />
<polygon points="227.4,258.6 253.8,257.6 255.1,262.3 227.4,263.3" fill="#ededed" />
<polygon points="227.4,267.0 256.2,265.9 257.5,270.6 227.4,271.7" fill="#ededed" />
<polygon points="227.4,281.3 265.3,276.1 284.9,282.7 288.8,340.2 227.4,340.2" fill="#41261d" />
<polyline points="230.0,290.5 261.4,293.1 282.3,303.6" fill="none" stroke="#8a8a86" stroke-width="1.4" stroke-linecap="round" stroke-linejoin="round" opacity="0.6"/>
<polyline points="261.4,277.4 269.2,321.9" fill="none" stroke="#1a1a1a" stroke-width="2" stroke-linecap="round" stroke-linejoin="round"/>
<polygon points="376.4,148.0 408.3,149.3 411.0,230.4 386.9,236.9 372.5,221.2" fill="#e6e8e5" />
<polyline points="384.3,131.0 410.4,151.9 410.4,162.4" fill="none" stroke="#aeb4b2" stroke-width="3" stroke-linecap="round" stroke-linejoin="round"/>
<polyline points="397.4,225.1 393.4,246.0" fill="none" stroke="#9a9f9c" stroke-width="2.4" stroke-linecap="round" stroke-linejoin="round"/>
<polygon points="402.6,151.9 411.0,151.9 412.0,230.4 405.2,231.7" fill="#c4c8c4" />
<polygon points="342.4,256.5 366.0,219.9 386.9,236.9 424.0,267.0 413.1,273.2 375.1,281.1 371.2,285.8 334.6,285.8" fill="#2b2622" />
<polygon points="333.3,284.7 372.5,282.7 377.8,340.2 329.4,340.2" fill="#8e948f" />
<polygon points="447.1,198.5 491.5,212.1 491.5,285.3 473.2,285.8 439.2,275.3 442.3,230.4" fill="#c9cbc7" />
<polygon points="452.3,219.9 491.5,230.4 491.5,277.4 454.9,267.0" fill="#d7d9d5" />
<polyline points="448.4,235.6 443.1,273.5" fill="none" stroke="#a9aca8" stroke-width="2.5" stroke-linecap="round" stroke-linejoin="round"/>
<polygon points="375.1,280.6 418.3,271.7 474.5,285.3 466.7,320.6 413.1,330.3 386.9,327.6 371.2,303.6" fill="#e1e1dd" />
<polygon points="376.4,308.8 413.1,330.3 466.7,320.6 465.4,332.3 413.1,340.2 381.7,335.0" fill="#8a8c88" />
<polygon points="465.4,319.3 491.5,308.8 491.5,340.2 460.1,340.2" fill="#b6b8b4" />
<polygon points="345.1,145.4 368.6,136.2 375.9,162.4 366.5,221.2 346.4,257.8 317.6,310.1 308.5,340.2 286.2,340.2 298.5,295.7 334.1,231.7 339.8,178.1" fill="#dcc6ba" />
<polygon points="289.6,204.2 337.7,220.4 335.1,239.5 316.8,242.1 292.8,229.0 284.4,215.2" fill="#cdb4a4" />
<polygon points="281.3,217.3 292.8,229.0 316.8,242.1 335.1,239.5 343.0,257.0 334.1,259.1 298.5,295.7 286.2,340.2 254.8,340.2 269.2,269.6" fill="#0d0c0e" />
<polygon points="308.5,311.4 334.6,259.1 346.4,257.8 339.8,287.9 316.3,340.2 305.8,340.2" fill="#121012" />
<polygon points="282.3,104.8 308.5,110.1 339.8,125.8 369.1,136.2 345.1,151.9 339.8,178.1 337.7,220.4 289.6,204.2 282.3,189.0 256.2,178.6 245.7,157.7 269.2,146.7 282.3,120.5" fill="#0e0c0e" />
<polygon points="282.3,97.0 301.1,99.6 296.7,117.9 286.2,141.4 281.0,117.9" fill="#d4bbb0" />
<polygon points="258.2,42.6 269.2,19.1 295.4,10.7 321.5,16.4 343.0,47.3 356.0,81.8 377.0,113.2 387.4,142.0 382.2,162.9 366.5,142.0 348.2,126.3 340.4,142.0 308.5,112.7 301.1,99.6 306.4,81.8 290.7,63.5 266.6,47.3" fill="#1b1516" />
<ellipse cx="308.5" cy="36.8" rx="31.4" ry="23.5" fill="#1b1516"/>
<polygon points="261.9,45.2 290.7,63.5 304.8,81.8 298.5,100.1 282.3,95.4 277.1,87.1 269.2,73.5 266.1,58.3" fill="#dcc4ba" />
<polyline points="266.6,65.1 278.4,70.8" fill="none" stroke="#3a2a28" stroke-width="1.8" stroke-linecap="round" stroke-linejoin="round" opacity="0.8"/>
<ellipse cx="281.0" cy="92.3" rx="3.1" ry="1.8" fill="#a06060" opacity="0.8"/>
<polygon points="254.1,81.8 282.3,99.1 267.1,123.7 256.2,117.9" fill="#111113" />
<polygon points="269.2,104.8 279.7,110.1 261.4,151.9 252.2,149.3" fill="#2a2a2c" />
<polygon points="242.6,126.3 264.5,123.1 269.7,142.0 254.1,157.7 240.5,147.2" fill="#dcc6bc" />
<polyline points="245.7,149.3 237.8,172.8 236.5,193.7" fill="none" stroke="#1a1a1a" stroke-width="2" stroke-linecap="round" stroke-linejoin="round"/>

</g></g></svg>
</body></html>
